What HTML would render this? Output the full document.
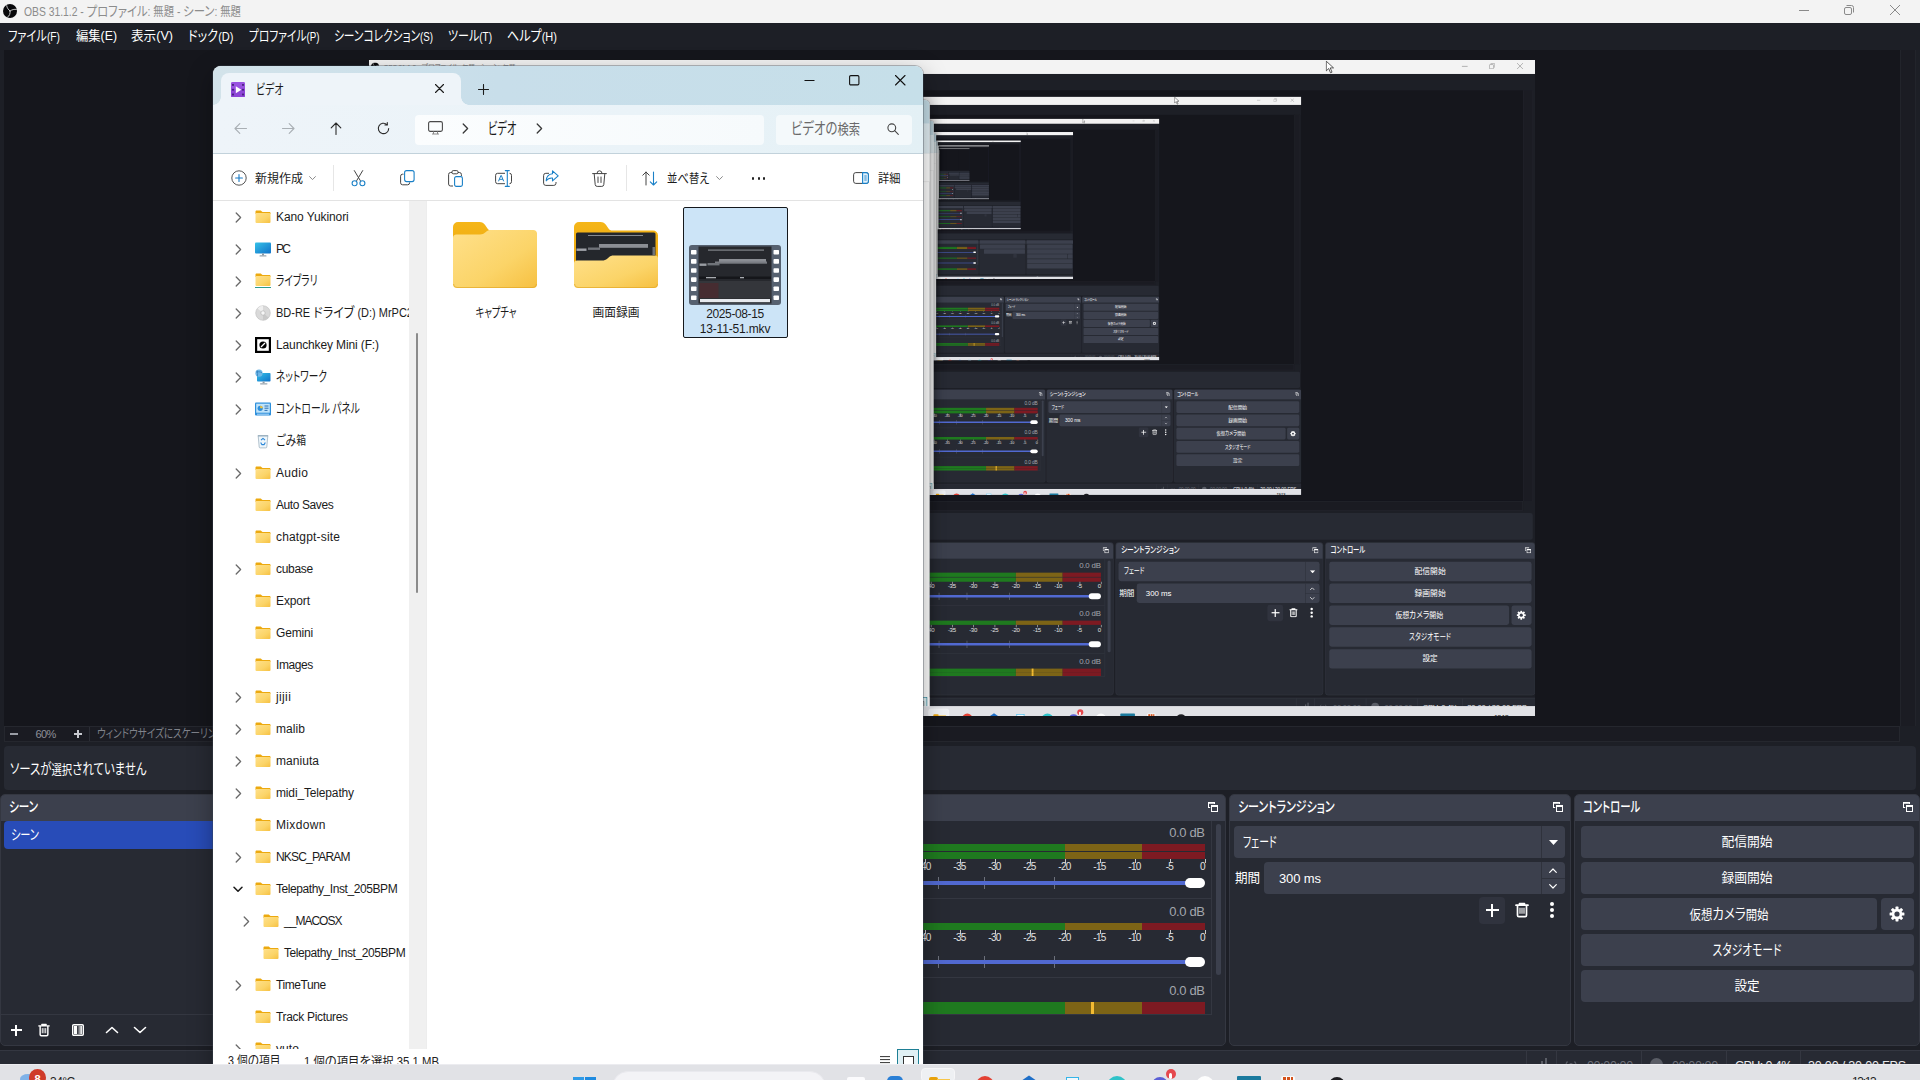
<!DOCTYPE html>
<html lang="ja"><head><meta charset="utf-8"><title>OBS 31.1.2 - プロファイル: 無題 - シーン: 無題</title>
<style>*{box-sizing:border-box;margin:0;padding:0}
html,body{width:1920px;height:1080px;overflow:hidden;background:#1d1f26}
body{font-family:"Liberation Sans","Noto Sans CJK JP",sans-serif;font-size:12px;position:relative}
.scr{position:absolute;left:0;top:0;width:1920px;height:1080px;overflow:hidden;background:#1d1f26;font-feature-settings:"palt"}
.pv{position:absolute;left:369px;top:60px;width:1166px;height:656px;overflow:hidden;background:#15161c}
.pv>.scr{transform:scale(.6074);transform-origin:0 0}
.b{position:absolute}
.t{position:absolute;white-space:nowrap;line-height:20px;font-size:12px;color:#fff}
.dk{position:absolute;background:#272a33;border:1px solid #343741;border-radius:5px;overflow:hidden}
.dt{position:absolute;left:-1px;top:-1px;right:-1px;height:27px;background:#3c404d}
.k{font-size:110%}
.btn{position:absolute;background:#3c404d;border-radius:4px}
.ex{position:absolute;left:213px;top:66px;width:710px;height:1020px;overflow:hidden;border-radius:8px;background:#fff;box-shadow:0 0 0 1px rgba(60,70,80,.35),0 8px 24px rgba(0,0,0,.35)}
.exi{position:absolute;left:-213px;top:-66px;width:1920px;height:1080px}
.ex .t{color:#1b1b1b}
.mx{position:absolute;left:0;top:821px;width:1212px;height:194px;overflow:hidden;border-right:1px solid #343741;border-bottom:1px solid #343741}
.mxi{position:absolute;left:0;top:-821px}
</style></head><body>
<svg width="0" height="0" style="position:absolute"><defs>
<linearGradient id="gf" x1="0" y1="0" x2="1" y2="1"><stop offset="0" stop-color="#ffe08a"/><stop offset=".6" stop-color="#fbd468"/><stop offset="1" stop-color="#f6c041"/></linearGradient>
<linearGradient id="gt" x1="0" y1="0" x2="0" y2="1"><stop offset="0" stop-color="#f5b619"/><stop offset="1" stop-color="#eaa50c"/></linearGradient>
<linearGradient id="gpc" x1="0" y1="0" x2="1" y2="1"><stop offset="0" stop-color="#35c1e8"/><stop offset="1" stop-color="#1172c9"/></linearGradient>
<symbol id="fd" viewBox="0 0 16 16"><path d="M0.5 2.6c0-.6.5-1.1 1.1-1.1h3.7c.4 0 .7.1 1 .4l1.2 1.1h7c.6 0 1 .5 1 1.1v1H.5z" fill="#eca90f"/><rect x=".5" y="4" width="15" height="10" rx="1" fill="url(#gf)"/></symbol>
<symbol id="chv" viewBox="0 0 8 12"><path d="M1.5 1.5L6 6 1.5 10.5" fill="none" stroke="#6a6a6a" stroke-width="1.3" stroke-linecap="round" stroke-linejoin="round"/></symbol>
<symbol id="flt" viewBox="0 0 10 10"><path d="M0 0h7v2H6V1.8H1V5h1.2v1H0zM3 3h7v7H3zM4 5v4h5V5z" fill="#fff"/></symbol>
<symbol id="trash" viewBox="0 0 14 16"><path d="M4.5 1.5h5M1 3.2h12M2.5 3.5v9.8c0 .8.6 1.4 1.4 1.4h6.2c.8 0 1.4-.6 1.4-1.4V3.5" fill="none" stroke="#fff" stroke-width="1.7" stroke-linecap="round"/><path d="M5 5.8v6M7 5.8v6M9 5.8v6" stroke="#fff" stroke-width="1.1"/></symbol>
</defs></svg>
<div class="scr"><div class="b" style="left:0px;top:0px;width:1920px;height:23px;background:#f3f3f3"></div><svg class="b" style="left:3px;top:4px" width="14" height="14" viewBox="0 0 14 14"><circle cx="7" cy="7" r="7" fill="#08080a"/><g fill="none" stroke="#d8d8d8" stroke-width=".9" stroke-linecap="round"><path d="M7 7C5.6 5.6 3.9 4.2 3.7 1.7"/><path d="M7 7c2-1.400 4.400-2 6.300-1.600"/><path d="M7 7c.5 2.500-.5 5-2.500 6.200"/></g></svg><div class="t" style="left:24px;top:2.4px;color:#8c8c8c;transform:scaleX(0.862);transform-origin:0 0">OBS 31.1.2 - <span class="k">プロファイル</span>: 無題 - <span class="k">シーン</span>: 無題</div><svg class="b" style="left:1799px;top:5px" width="10" height="10" viewBox="0 0 10 10"><path d="M0 5.5h10" stroke="#8a8a8a" stroke-width="1"/></svg><svg class="b" style="left:1844px;top:5px" width="10" height="10" viewBox="0 0 10 10"><rect x=".5" y="2.5" width="7" height="7" rx="1.5" fill="none" stroke="#8a8a8a"/><path d="M2.5 .5h5a2 2 0 0 1 2 2v5" fill="none" stroke="#8a8a8a"/></svg><svg class="b" style="left:1890px;top:5px" width="10" height="10" viewBox="0 0 10 10"><path d="M0 0l10 10M10 0L0 10" stroke="#8a8a8a" stroke-width="1"/></svg><div class="t" style="left:8px;top:26.4px;font-size:13px;color:#fff;transform:scaleX(0.786);transform-origin:0 0"><span class="k">ファイル</span>(F)</div><div class="t" style="left:75.5px;top:26.4px;font-size:13px;color:#fff;transform:scaleX(0.946);transform-origin:0 0">編集(E)</div><div class="t" style="left:131px;top:26.4px;font-size:13px;color:#fff;transform:scaleX(0.969);transform-origin:0 0">表示(V)</div><div class="t" style="left:187.5px;top:26.4px;font-size:13px;color:#fff;transform:scaleX(0.851);transform-origin:0 0"><span class="k">ドック</span>(D)</div><div class="t" style="left:248.5px;top:26.4px;font-size:13px;color:#fff;transform:scaleX(0.750);transform-origin:0 0"><span class="k">プロファイル</span>(P)</div><div class="t" style="left:334px;top:26.4px;font-size:13px;color:#fff;transform:scaleX(0.749);transform-origin:0 0"><span class="k">シーンコレクション</span>(S)</div><div class="t" style="left:448px;top:26.4px;font-size:13px;color:#fff;transform:scaleX(0.769);transform-origin:0 0"><span class="k">ツール</span>(T)</div><div class="t" style="left:507px;top:26.4px;font-size:13px;color:#fff;transform:scaleX(0.846);transform-origin:0 0"><span class="k">ヘルプ</span>(H)</div><div class="b" style="left:4px;top:50px;width:1896px;height:676px;background:#15161c"></div><div class="b" style="left:1900px;top:50px;width:16px;height:676px;background:#1b1c23;border-left:1px solid #22242b;border-right:1px solid #22242b"></div><div class="b" style="left:4px;top:726px;width:1896px;height:16px;background:#1a1b22;border:1px solid #25272e"></div><div class="b" style="left:10px;top:733px;width:8px;height:2px;background:#9a9da5"></div><div class="t" style="left:35.5px;top:724px;font-size:11px;color:#8e9199;letter-spacing:-0.61px">60%</div><div class="b" style="left:74px;top:733px;width:8px;height:2px;background:#c8cad0"></div><div class="b" style="left:77px;top:730px;width:2px;height:8px;background:#c8cad0"></div><div class="b" style="left:88.5px;top:727px;width:1px;height:14px;background:#2b2d35"></div><div class="t" style="left:97.4px;top:724.4px;font-size:11px;color:#7f828a;transform:scaleX(0.792);transform-origin:0 0"><span class="k">ウィンドウサイズにスケーリング</span></div><div class="pv"><div class="scr"><div class="b" style="left:0px;top:0px;width:1920px;height:23px;background:#f3f3f3"></div><svg class="b" style="left:3px;top:4px" width="14" height="14" viewBox="0 0 14 14"><circle cx="7" cy="7" r="7" fill="#08080a"/><g fill="none" stroke="#d8d8d8" stroke-width=".9" stroke-linecap="round"><path d="M7 7C5.6 5.6 3.9 4.2 3.7 1.7"/><path d="M7 7c2-1.400 4.400-2 6.300-1.600"/><path d="M7 7c.5 2.500-.5 5-2.500 6.200"/></g></svg><div class="t" style="left:24px;top:2.4px;color:#8c8c8c;transform:scaleX(0.862);transform-origin:0 0">OBS 31.1.2 - <span class="k">プロファイル</span>: 無題 - <span class="k">シーン</span>: 無題</div><svg class="b" style="left:1799px;top:5px" width="10" height="10" viewBox="0 0 10 10"><path d="M0 5.5h10" stroke="#8a8a8a" stroke-width="1"/></svg><svg class="b" style="left:1844px;top:5px" width="10" height="10" viewBox="0 0 10 10"><rect x=".5" y="2.5" width="7" height="7" rx="1.5" fill="none" stroke="#8a8a8a"/><path d="M2.5 .5h5a2 2 0 0 1 2 2v5" fill="none" stroke="#8a8a8a"/></svg><svg class="b" style="left:1890px;top:5px" width="10" height="10" viewBox="0 0 10 10"><path d="M0 0l10 10M10 0L0 10" stroke="#8a8a8a" stroke-width="1"/></svg><div class="t" style="left:8px;top:26.4px;font-size:13px;color:#fff;transform:scaleX(0.786);transform-origin:0 0"><span class="k">ファイル</span>(F)</div><div class="t" style="left:75.5px;top:26.4px;font-size:13px;color:#fff;transform:scaleX(0.946);transform-origin:0 0">編集(E)</div><div class="t" style="left:131px;top:26.4px;font-size:13px;color:#fff;transform:scaleX(0.969);transform-origin:0 0">表示(V)</div><div class="t" style="left:187.5px;top:26.4px;font-size:13px;color:#fff;transform:scaleX(0.851);transform-origin:0 0"><span class="k">ドック</span>(D)</div><div class="t" style="left:248.5px;top:26.4px;font-size:13px;color:#fff;transform:scaleX(0.750);transform-origin:0 0"><span class="k">プロファイル</span>(P)</div><div class="t" style="left:334px;top:26.4px;font-size:13px;color:#fff;transform:scaleX(0.749);transform-origin:0 0"><span class="k">シーンコレクション</span>(S)</div><div class="t" style="left:448px;top:26.4px;font-size:13px;color:#fff;transform:scaleX(0.769);transform-origin:0 0"><span class="k">ツール</span>(T)</div><div class="t" style="left:507px;top:26.4px;font-size:13px;color:#fff;transform:scaleX(0.846);transform-origin:0 0"><span class="k">ヘルプ</span>(H)</div><div class="b" style="left:4px;top:50px;width:1896px;height:676px;background:#15161c"></div><div class="b" style="left:1900px;top:50px;width:16px;height:676px;background:#1b1c23;border-left:1px solid #22242b;border-right:1px solid #22242b"></div><div class="b" style="left:4px;top:726px;width:1896px;height:16px;background:#1a1b22;border:1px solid #25272e"></div><div class="b" style="left:10px;top:733px;width:8px;height:2px;background:#9a9da5"></div><div class="t" style="left:35.5px;top:724px;font-size:11px;color:#8e9199;letter-spacing:-0.61px">60%</div><div class="b" style="left:74px;top:733px;width:8px;height:2px;background:#c8cad0"></div><div class="b" style="left:77px;top:730px;width:2px;height:8px;background:#c8cad0"></div><div class="b" style="left:88.5px;top:727px;width:1px;height:14px;background:#2b2d35"></div><div class="t" style="left:97.4px;top:724.4px;font-size:11px;color:#7f828a;transform:scaleX(0.792);transform-origin:0 0"><span class="k">ウィンドウサイズにスケーリング</span></div><div class="pv"><div class="scr"><div class="b" style="left:0px;top:0px;width:1920px;height:23px;background:#f3f3f3"></div><svg class="b" style="left:3px;top:4px" width="14" height="14" viewBox="0 0 14 14"><circle cx="7" cy="7" r="7" fill="#08080a"/><g fill="none" stroke="#d8d8d8" stroke-width=".9" stroke-linecap="round"><path d="M7 7C5.6 5.6 3.9 4.2 3.7 1.7"/><path d="M7 7c2-1.400 4.400-2 6.300-1.600"/><path d="M7 7c.5 2.500-.5 5-2.500 6.200"/></g></svg><div class="t" style="left:24px;top:2.4px;color:#8c8c8c;transform:scaleX(0.862);transform-origin:0 0">OBS 31.1.2 - <span class="k">プロファイル</span>: 無題 - <span class="k">シーン</span>: 無題</div><svg class="b" style="left:1799px;top:5px" width="10" height="10" viewBox="0 0 10 10"><path d="M0 5.5h10" stroke="#8a8a8a" stroke-width="1"/></svg><svg class="b" style="left:1844px;top:5px" width="10" height="10" viewBox="0 0 10 10"><rect x=".5" y="2.5" width="7" height="7" rx="1.5" fill="none" stroke="#8a8a8a"/><path d="M2.5 .5h5a2 2 0 0 1 2 2v5" fill="none" stroke="#8a8a8a"/></svg><svg class="b" style="left:1890px;top:5px" width="10" height="10" viewBox="0 0 10 10"><path d="M0 0l10 10M10 0L0 10" stroke="#8a8a8a" stroke-width="1"/></svg><div class="t" style="left:8px;top:26.4px;font-size:13px;color:#fff;transform:scaleX(0.786);transform-origin:0 0"><span class="k">ファイル</span>(F)</div><div class="t" style="left:75.5px;top:26.4px;font-size:13px;color:#fff;transform:scaleX(0.946);transform-origin:0 0">編集(E)</div><div class="t" style="left:131px;top:26.4px;font-size:13px;color:#fff;transform:scaleX(0.969);transform-origin:0 0">表示(V)</div><div class="t" style="left:187.5px;top:26.4px;font-size:13px;color:#fff;transform:scaleX(0.851);transform-origin:0 0"><span class="k">ドック</span>(D)</div><div class="t" style="left:248.5px;top:26.4px;font-size:13px;color:#fff;transform:scaleX(0.750);transform-origin:0 0"><span class="k">プロファイル</span>(P)</div><div class="t" style="left:334px;top:26.4px;font-size:13px;color:#fff;transform:scaleX(0.749);transform-origin:0 0"><span class="k">シーンコレクション</span>(S)</div><div class="t" style="left:448px;top:26.4px;font-size:13px;color:#fff;transform:scaleX(0.769);transform-origin:0 0"><span class="k">ツール</span>(T)</div><div class="t" style="left:507px;top:26.4px;font-size:13px;color:#fff;transform:scaleX(0.846);transform-origin:0 0"><span class="k">ヘルプ</span>(H)</div><div class="b" style="left:4px;top:50px;width:1896px;height:676px;background:#15161c"></div><div class="b" style="left:1900px;top:50px;width:16px;height:676px;background:#1b1c23;border-left:1px solid #22242b;border-right:1px solid #22242b"></div><div class="b" style="left:4px;top:726px;width:1896px;height:16px;background:#1a1b22;border:1px solid #25272e"></div><div class="b" style="left:10px;top:733px;width:8px;height:2px;background:#9a9da5"></div><div class="t" style="left:35.5px;top:724px;font-size:11px;color:#8e9199;letter-spacing:-0.61px">60%</div><div class="b" style="left:74px;top:733px;width:8px;height:2px;background:#c8cad0"></div><div class="b" style="left:77px;top:730px;width:2px;height:8px;background:#c8cad0"></div><div class="b" style="left:88.5px;top:727px;width:1px;height:14px;background:#2b2d35"></div><div class="t" style="left:97.4px;top:724.4px;font-size:11px;color:#7f828a;transform:scaleX(0.792);transform-origin:0 0"><span class="k">ウィンドウサイズにスケーリング</span></div><div class="pv"><div class="scr"><div class="b" style="left:0px;top:0px;width:1920px;height:23px;background:#f3f3f3"></div><svg class="b" style="left:3px;top:4px" width="14" height="14" viewBox="0 0 14 14"><circle cx="7" cy="7" r="7" fill="#08080a"/><g fill="none" stroke="#d8d8d8" stroke-width=".9" stroke-linecap="round"><path d="M7 7C5.6 5.6 3.9 4.2 3.7 1.7"/><path d="M7 7c2-1.400 4.400-2 6.300-1.600"/><path d="M7 7c.5 2.500-.5 5-2.500 6.200"/></g></svg><div class="t" style="left:24px;top:2.4px;color:#8c8c8c;transform:scaleX(0.862);transform-origin:0 0">OBS 31.1.2 - <span class="k">プロファイル</span>: 無題 - <span class="k">シーン</span>: 無題</div><svg class="b" style="left:1799px;top:5px" width="10" height="10" viewBox="0 0 10 10"><path d="M0 5.5h10" stroke="#8a8a8a" stroke-width="1"/></svg><svg class="b" style="left:1844px;top:5px" width="10" height="10" viewBox="0 0 10 10"><rect x=".5" y="2.5" width="7" height="7" rx="1.5" fill="none" stroke="#8a8a8a"/><path d="M2.5 .5h5a2 2 0 0 1 2 2v5" fill="none" stroke="#8a8a8a"/></svg><svg class="b" style="left:1890px;top:5px" width="10" height="10" viewBox="0 0 10 10"><path d="M0 0l10 10M10 0L0 10" stroke="#8a8a8a" stroke-width="1"/></svg><div class="t" style="left:8px;top:26.4px;font-size:13px;color:#fff;transform:scaleX(0.786);transform-origin:0 0"><span class="k">ファイル</span>(F)</div><div class="t" style="left:75.5px;top:26.4px;font-size:13px;color:#fff;transform:scaleX(0.946);transform-origin:0 0">編集(E)</div><div class="t" style="left:131px;top:26.4px;font-size:13px;color:#fff;transform:scaleX(0.969);transform-origin:0 0">表示(V)</div><div class="t" style="left:187.5px;top:26.4px;font-size:13px;color:#fff;transform:scaleX(0.851);transform-origin:0 0"><span class="k">ドック</span>(D)</div><div class="t" style="left:248.5px;top:26.4px;font-size:13px;color:#fff;transform:scaleX(0.750);transform-origin:0 0"><span class="k">プロファイル</span>(P)</div><div class="t" style="left:334px;top:26.4px;font-size:13px;color:#fff;transform:scaleX(0.749);transform-origin:0 0"><span class="k">シーンコレクション</span>(S)</div><div class="t" style="left:448px;top:26.4px;font-size:13px;color:#fff;transform:scaleX(0.769);transform-origin:0 0"><span class="k">ツール</span>(T)</div><div class="t" style="left:507px;top:26.4px;font-size:13px;color:#fff;transform:scaleX(0.846);transform-origin:0 0"><span class="k">ヘルプ</span>(H)</div><div class="b" style="left:4px;top:50px;width:1896px;height:676px;background:#15161c"></div><div class="b" style="left:1900px;top:50px;width:16px;height:676px;background:#1b1c23;border-left:1px solid #22242b;border-right:1px solid #22242b"></div><div class="b" style="left:4px;top:726px;width:1896px;height:16px;background:#1a1b22;border:1px solid #25272e"></div><div class="b" style="left:10px;top:733px;width:8px;height:2px;background:#9a9da5"></div><div class="t" style="left:35.5px;top:724px;font-size:11px;color:#8e9199;letter-spacing:-0.61px">60%</div><div class="b" style="left:74px;top:733px;width:8px;height:2px;background:#c8cad0"></div><div class="b" style="left:77px;top:730px;width:2px;height:8px;background:#c8cad0"></div><div class="b" style="left:88.5px;top:727px;width:1px;height:14px;background:#2b2d35"></div><div class="t" style="left:97.4px;top:724.4px;font-size:11px;color:#7f828a;transform:scaleX(0.792);transform-origin:0 0"><span class="k">ウィンドウサイズにスケーリング</span></div><div class="pv"><div class="scr"><div class="b" style="left:0px;top:0px;width:1920px;height:23px;background:#f3f3f3"></div><div class="b" style="left:4px;top:50px;width:1896px;height:676px;background:#15161c"></div><div class="b" style="left:1900px;top:50px;width:16px;height:676px;background:#1b1c23;border-left:1px solid #22242b;border-right:1px solid #22242b"></div><div class="b" style="left:4px;top:726px;width:1896px;height:16px;background:#1a1b22;border:1px solid #25272e"></div><div class="pv"><div class="scr"><div class="b" style="left:0px;top:0px;width:1920px;height:23px;background:#f3f3f3"></div><div class="b" style="left:4px;top:50px;width:1896px;height:676px;background:#15161c"></div><div class="b" style="left:1900px;top:50px;width:16px;height:676px;background:#1b1c23;border-left:1px solid #22242b;border-right:1px solid #22242b"></div><div class="b" style="left:4px;top:726px;width:1896px;height:16px;background:#1a1b22;border:1px solid #25272e"></div><div class="pv"><div class="scr"><div class="b" style="left:0px;top:0px;width:1920px;height:23px;background:#f3f3f3"></div><div class="b" style="left:4px;top:50px;width:1896px;height:676px;background:#15161c"></div><div class="b" style="left:1900px;top:50px;width:16px;height:676px;background:#1b1c23;border-left:1px solid #22242b;border-right:1px solid #22242b"></div><div class="b" style="left:4px;top:726px;width:1896px;height:16px;background:#1a1b22;border:1px solid #25272e"></div><div class="pv"><div class="scr"><div class="b" style="left:0px;top:0px;width:1920px;height:23px;background:#f3f3f3"></div><div class="b" style="left:4px;top:50px;width:1896px;height:676px;background:#15161c"></div><div class="b" style="left:1900px;top:50px;width:16px;height:676px;background:#1b1c23;border-left:1px solid #22242b;border-right:1px solid #22242b"></div><div class="b" style="left:4px;top:726px;width:1896px;height:16px;background:#1a1b22;border:1px solid #25272e"></div><div class="pv"></div><div class="b" style="left:4px;top:746px;width:1912px;height:44px;background:#272a33;border-radius:4px"></div><div class="dk" style="left:0;top:794px;width:300px;height:252px"><div class="dt"></div></div><div class="b" style="left:4px;top:821px;width:292px;height:28px;background:#284cb8;border-radius:4px"></div><div class="dk" style="left:304px;top:794px;width:300px;height:252px"><div class="dt"></div></div><div class="dk" style="left:608px;top:794px;width:618px;height:252px"><div class="dt"></div></div><div class="mx"><div class="mxi"><div class="b" style="left:700px;top:844px;width:365px;height:7px;background:#1f7a1f"></div><div class="b" style="left:1065px;top:844px;width:77px;height:7px;background:#7d6416"></div><div class="b" style="left:1142px;top:844px;width:63px;height:7px;background:#7d1a22"></div><div class="b" style="left:700px;top:852px;width:365px;height:7px;background:#1f7a1f"></div><div class="b" style="left:1065px;top:852px;width:77px;height:7px;background:#7d6416"></div><div class="b" style="left:1142px;top:852px;width:63px;height:7px;background:#7d1a22"></div><div class="b" style="left:700px;top:881px;width:495px;height:4px;background:#5169d1;border-radius:2px"></div><div class="b" style="left:1185px;top:878px;width:20px;height:10px;background:#fff;border-radius:5px"></div><div class="b" style="left:600px;top:898px;width:613px;height:1px;background:#343741"></div><div class="b" style="left:700px;top:923px;width:365px;height:7px;background:#1f7a1f"></div><div class="b" style="left:1065px;top:923px;width:77px;height:7px;background:#7d6416"></div><div class="b" style="left:1142px;top:923px;width:63px;height:7px;background:#7d1a22"></div><div class="b" style="left:700px;top:960px;width:495px;height:4px;background:#5169d1;border-radius:2px"></div><div class="b" style="left:1185px;top:957px;width:20px;height:10px;background:#fff;border-radius:5px"></div><div class="b" style="left:600px;top:977px;width:613px;height:1px;background:#343741"></div><div class="b" style="left:700px;top:1002px;width:365px;height:6.5px;background:#1f7a1f"></div><div class="b" style="left:1065px;top:1002px;width:77px;height:6.5px;background:#7d6416"></div><div class="b" style="left:1142px;top:1002px;width:63px;height:6.5px;background:#7d1a22"></div><div class="b" style="left:700px;top:1009px;width:365px;height:7px;background:#1f7a1f"></div><div class="b" style="left:1065px;top:1009px;width:77px;height:7px;background:#7d6416"></div><div class="b" style="left:1142px;top:1009px;width:63px;height:7px;background:#7d1a22"></div></div></div><div class="b" style="left:1215.5px;top:824px;width:5.5px;height:151px;background:#3c404d;border-radius:3px"></div><div class="dk" style="left:1229px;top:794px;width:342px;height:252px"><div class="dt"></div></div><div class="btn" style="left:1234px;top:826px;width:331px;height:32px"></div><div class="btn" style="left:1264px;top:862px;width:301px;height:32px"></div><div class="btn" style="left:1479px;top:896.5px;width:26px;height:27px;background:#30333e"></div><div class="dk" style="left:1574px;top:794px;width:346px;height:252px"><div class="dt"></div></div><div class="btn" style="left:1580.5px;top:826px;width:333px;height:32px"></div><div class="btn" style="left:1580.5px;top:862px;width:333px;height:32px"></div><div class="btn" style="left:1580.5px;top:898px;width:296.5px;height:32px"></div><div class="btn" style="left:1580.5px;top:934px;width:333px;height:32px"></div><div class="btn" style="left:1580.5px;top:970px;width:333px;height:32px"></div><div class="btn" style="left:1881px;top:898px;width:32.5px;height:32px"></div><div class="b" style="left:0px;top:1050px;width:1920px;height:30px;background:#272a33;border-top:1px solid #343741"></div><div class="b" style="left:1650px;top:1058px;width:13px;height:13px;background:#5a5d66;border-radius:7px"></div><div class="ex"><div class="exi"><div class="b" style="left:213px;top:66px;width:710px;height:38.5px;background:linear-gradient(90deg,#d3e3ea,#c8deea 40%,#c6dfe9)"></div><div class="b" style="left:221px;top:73px;width:240px;height:31.5px;background:#eef4f9;border-radius:8px 8px 0 0"></div><div class="b" style="left:213px;top:104.5px;width:710px;height:48.5px;background:linear-gradient(90deg,#eef4f9,#eaf3f8 60%,#e3f0f5)"></div><div class="b" style="left:213px;top:153px;width:710px;height:1px;background:#c2d2db"></div><div class="b" style="left:415px;top:115px;width:349px;height:30px;background:linear-gradient(90deg,#fbfdfe,#f6fafc);border-radius:4px"></div><div class="b" style="left:776px;top:115px;width:136px;height:30px;background:#f4f9fb;border-radius:4px"></div><div class="b" style="left:213px;top:154px;width:710px;height:46px;background:#fff"></div><div class="b" style="left:213px;top:200px;width:710px;height:1px;background:#e3e3e3"></div><div class="b" style="left:409px;top:201px;width:16.5px;height:848px;background:#f0f0f0"></div><div class="b" style="left:426px;top:201px;width:1px;height:848px;background:#ededed"></div><div class="b" style="left:416px;top:333px;width:2px;height:260px;background:#8b8b8b;border-radius:1px"></div><div class="b" style="left:213px;top:201px;width:196px;height:848px;overflow:hidden"><div class="b" style="left:-213px;top:-201px"></div></div><svg class="b" style="left:453px;top:222px" width="84" height="66" viewBox="0 0 84 66"><path d="M0 5a5 5 0 0 1 5-5h21.5c2.6 0 4.2 1 5.6 3l2.4 3.400c1 1.4 2 2.1 4 2.100H79a5 5 0 0 1 5 5V46H0z" fill="url(#gt)"/><path d="M0 16a3.5 3.5 0 0 1 3.5-3.500h23.500c2.5 0 3.8-.7 5.2-1.900l1.5-1.300c1.2-1 2.5-1.3 4-1.300H80a4 4 0 0 1 4 4V62a4 4 0 0 1-4 4H4a4 4 0 0 1-4-4z" fill="url(#gf)"/><path d="M.5 62a3.5 3.5 0 0 0 3.5 3.500h76a3.5 3.5 0 0 0 3.5-3.5" fill="none" stroke="#e3a826" stroke-width="1" opacity=".7"/></svg><svg class="b" style="left:574px;top:222px" width="84" height="66" viewBox="0 0 84 66"><path d="M0 5a5 5 0 0 1 5-5h21.5c2.6 0 4.2 1 5.6 3l2.4 3.400c1 1.4 2 2.1 4 2.100H79a5 5 0 0 1 5 5V46H0z" fill="url(#gt)"/><rect x="2" y="10.5" width="79.5" height="30" rx="1.5" fill="#24272c"/><rect x="14" y="13" width="55" height="1" fill="#85898f"/><rect x="25" y="22" width="49" height="3.8" fill="#8b8e94"/><rect x="2.5" y="26.5" width="10" height="2.4" fill="#a0a3a9"/><rect x="14" y="25.5" width="12" height="2.4" fill="#6f7379"/><rect x="78.5" y="25" width="2.5" height="8" fill="#6f7379"/><path d="M0 41.500a3 3 0 0 1 3-3h25c2.5 0 3.8-.6 5.2-1.800l2-1.700c1.2-1 2.5-1.5 4-1.500H81a3 3 0 0 1 3 3V62a4 4 0 0 1-4 4H4a4 4 0 0 1-4-4z" fill="url(#gf)"/><path d="M.5 62a3.5 3.5 0 0 0 3.5 3.500h76a3.5 3.5 0 0 0 3.5-3.5" fill="none" stroke="#e3a826" stroke-width="1" opacity=".7"/></svg><div class="b" style="left:683px;top:207px;width:105px;height:131px;background:#cce4f7;border:1px solid #15181c;border-radius:2px"></div><svg class="b" style="left:688.5px;top:244.5px" width="92" height="60" viewBox="0 0 92 60"><rect width="92" height="60" rx="3" fill="#566170"/><rect x="9.5" y="1.5" width="73" height="57" fill="#26282d"/><rect x="2" y="5" width="5.5" height="4.6" rx=".8" fill="#fff"/><rect x="84.5" y="5" width="5.5" height="4.6" rx=".8" fill="#fff"/><rect x="2" y="14.1" width="5.5" height="4.6" rx=".8" fill="#fff"/><rect x="84.5" y="14.1" width="5.5" height="4.6" rx=".8" fill="#fff"/><rect x="2" y="23.2" width="5.5" height="4.6" rx=".8" fill="#fff"/><rect x="84.5" y="23.2" width="5.5" height="4.6" rx=".8" fill="#fff"/><rect x="2" y="32.3" width="5.5" height="4.6" rx=".8" fill="#fff"/><rect x="84.5" y="32.3" width="5.5" height="4.6" rx=".8" fill="#fff"/><rect x="2" y="41.4" width="5.5" height="4.6" rx=".8" fill="#fff"/><rect x="84.5" y="41.4" width="5.5" height="4.6" rx=".8" fill="#fff"/><rect x="2" y="50.5" width="5.5" height="4.6" rx=".8" fill="#fff"/><rect x="84.5" y="50.5" width="5.5" height="4.6" rx=".8" fill="#fff"/><rect x="19" y="4.5" width="56" height="1.2" fill="#9a9da3" opacity=".8"/><rect x="30" y="14" width="47" height="3.8" fill="#8b8e94"/><rect x="26" y="16.5" width="52" height="2.2" fill="#7a7d83"/><rect x="10.5" y="18.5" width="7" height="2.4" fill="#9a9da3"/><rect x="18.5" y="18" width="12" height="2.4" fill="#6f7379"/><rect x="10" y="31.5" width="72" height="2.5" fill="#15161a"/><rect x="17" y="32" width="10" height="1.3" fill="#a8abb0"/><rect x="51" y="32" width="4" height="1.3" fill="#a8abb0"/><rect x="10" y="36" width="72" height="17.5" fill="#34363b"/><rect x="10.5" y="38" width="19" height="15" fill="#4a2a30" opacity=".85"/><rect x="11" y="54" width="70" height="3.2" fill="#e6e9ee"/></svg><div class="b" style="left:213px;top:1049px;width:710px;height:31px;background:#fff"></div><div class="b" style="left:897px;top:1049px;width:22px;height:22px;background:#e0f0f4;border:1px solid #1e7f95"></div></div></div><div class="b" style="left:0px;top:1064px;width:1920px;height:16px;background:#e1e2e6;border-top:1px solid #ececf0"></div><div class="b" style="left:29px;top:1068.5px;width:17px;height:17px;background:#cf3a2a;border-radius:9px"></div><div class="b" style="left:612px;top:1071px;width:214px;height:32px;background:#f3f3f6;border-radius:16px;border:1px solid #e9e9ee"></div><div class="b" style="left:847px;top:1077px;width:18px;height:4px;background:#fbfbfd;border-radius:2px 2px 0 0"></div><div class="b" style="left:887px;top:1076px;width:16px;height:5px;background:#2a7fd6;border-radius:5px 5px 0 0"></div><div class="b" style="left:921px;top:1068px;width:34px;height:14px;background:#eef0f3;border-radius:4px;border:1px solid #f6f6f8"></div><div class="b" style="left:937px;top:1078.5px;width:13px;height:3px;background:#f7c64a"></div><div class="b" style="left:976px;top:1076px;width:18px;height:18px;background:#e34133;border-radius:9px"></div><div class="b" style="left:1066px;top:1077px;width:13px;height:4px;background:#f3f8fc;border:1.500px solid #35b5e8;border-bottom:none"></div><div class="b" style="left:1107px;top:1076px;width:20px;height:20px;background:#2fc3c9;border-radius:10px"></div><div class="b" style="left:1152px;top:1076.5px;width:16px;height:16px;background:#5a5fd6;border-radius:8px"></div><div class="b" style="left:1196px;top:1076px;width:18px;height:18px;background:#fdfdfd;border-radius:9px"></div><div class="b" style="left:1237px;top:1076px;width:24px;height:6px;background:#1b7a9e;border-radius:1px"></div><div class="b" style="left:1281px;top:1076px;width:14px;height:5px;background:#fafafa;border-radius:2px"></div><div class="b" style="left:1329px;top:1077px;width:16px;height:16px;background:#1e1e22;border-radius:8px"></div><svg class="b" style="left:1575px;top:0.5px" width="14" height="22" viewBox="0 0 14 22"><path d="M1 1v16l4-4 3 7 2.5-1-3-7h5.5z" fill="#fff" stroke="#222" stroke-width="1.2" stroke-linejoin="round"/></svg></div></div><div class="b" style="left:4px;top:746px;width:1912px;height:44px;background:#272a33;border-radius:4px"></div><div class="dk" style="left:0;top:794px;width:300px;height:252px"><div class="dt"></div></div><div class="b" style="left:4px;top:821px;width:292px;height:28px;background:#284cb8;border-radius:4px"></div><div class="dk" style="left:304px;top:794px;width:300px;height:252px"><div class="dt"></div></div><div class="dk" style="left:608px;top:794px;width:618px;height:252px"><div class="dt"></div></div><div class="mx"><div class="mxi"><div class="b" style="left:700px;top:844px;width:365px;height:7px;background:#1f7a1f"></div><div class="b" style="left:1065px;top:844px;width:77px;height:7px;background:#7d6416"></div><div class="b" style="left:1142px;top:844px;width:63px;height:7px;background:#7d1a22"></div><div class="b" style="left:700px;top:852px;width:365px;height:7px;background:#1f7a1f"></div><div class="b" style="left:1065px;top:852px;width:77px;height:7px;background:#7d6416"></div><div class="b" style="left:1142px;top:852px;width:63px;height:7px;background:#7d1a22"></div><div class="b" style="left:700px;top:881px;width:495px;height:4px;background:#5169d1;border-radius:2px"></div><div class="b" style="left:1185px;top:878px;width:20px;height:10px;background:#fff;border-radius:5px"></div><div class="b" style="left:600px;top:898px;width:613px;height:1px;background:#343741"></div><div class="b" style="left:700px;top:923px;width:365px;height:7px;background:#1f7a1f"></div><div class="b" style="left:1065px;top:923px;width:77px;height:7px;background:#7d6416"></div><div class="b" style="left:1142px;top:923px;width:63px;height:7px;background:#7d1a22"></div><div class="b" style="left:700px;top:960px;width:495px;height:4px;background:#5169d1;border-radius:2px"></div><div class="b" style="left:1185px;top:957px;width:20px;height:10px;background:#fff;border-radius:5px"></div><div class="b" style="left:600px;top:977px;width:613px;height:1px;background:#343741"></div><div class="b" style="left:700px;top:1002px;width:365px;height:6.5px;background:#1f7a1f"></div><div class="b" style="left:1065px;top:1002px;width:77px;height:6.5px;background:#7d6416"></div><div class="b" style="left:1142px;top:1002px;width:63px;height:6.5px;background:#7d1a22"></div><div class="b" style="left:700px;top:1009px;width:365px;height:7px;background:#1f7a1f"></div><div class="b" style="left:1065px;top:1009px;width:77px;height:7px;background:#7d6416"></div><div class="b" style="left:1142px;top:1009px;width:63px;height:7px;background:#7d1a22"></div></div></div><div class="b" style="left:1215.5px;top:824px;width:5.5px;height:151px;background:#3c404d;border-radius:3px"></div><div class="dk" style="left:1229px;top:794px;width:342px;height:252px"><div class="dt"></div></div><div class="btn" style="left:1234px;top:826px;width:331px;height:32px"></div><div class="btn" style="left:1264px;top:862px;width:301px;height:32px"></div><div class="btn" style="left:1479px;top:896.5px;width:26px;height:27px;background:#30333e"></div><div class="dk" style="left:1574px;top:794px;width:346px;height:252px"><div class="dt"></div></div><div class="btn" style="left:1580.5px;top:826px;width:333px;height:32px"></div><div class="btn" style="left:1580.5px;top:862px;width:333px;height:32px"></div><div class="btn" style="left:1580.5px;top:898px;width:296.5px;height:32px"></div><div class="btn" style="left:1580.5px;top:934px;width:333px;height:32px"></div><div class="btn" style="left:1580.5px;top:970px;width:333px;height:32px"></div><div class="btn" style="left:1881px;top:898px;width:32.5px;height:32px"></div><div class="b" style="left:0px;top:1050px;width:1920px;height:30px;background:#272a33;border-top:1px solid #343741"></div><div class="b" style="left:1650px;top:1058px;width:13px;height:13px;background:#5a5d66;border-radius:7px"></div><div class="ex"><div class="exi"><div class="b" style="left:213px;top:66px;width:710px;height:38.5px;background:linear-gradient(90deg,#d3e3ea,#c8deea 40%,#c6dfe9)"></div><div class="b" style="left:221px;top:73px;width:240px;height:31.5px;background:#eef4f9;border-radius:8px 8px 0 0"></div><div class="b" style="left:213px;top:104.5px;width:710px;height:48.5px;background:linear-gradient(90deg,#eef4f9,#eaf3f8 60%,#e3f0f5)"></div><div class="b" style="left:213px;top:153px;width:710px;height:1px;background:#c2d2db"></div><div class="b" style="left:415px;top:115px;width:349px;height:30px;background:linear-gradient(90deg,#fbfdfe,#f6fafc);border-radius:4px"></div><div class="b" style="left:776px;top:115px;width:136px;height:30px;background:#f4f9fb;border-radius:4px"></div><div class="b" style="left:213px;top:154px;width:710px;height:46px;background:#fff"></div><div class="b" style="left:213px;top:200px;width:710px;height:1px;background:#e3e3e3"></div><div class="b" style="left:409px;top:201px;width:16.5px;height:848px;background:#f0f0f0"></div><div class="b" style="left:426px;top:201px;width:1px;height:848px;background:#ededed"></div><div class="b" style="left:416px;top:333px;width:2px;height:260px;background:#8b8b8b;border-radius:1px"></div><div class="b" style="left:213px;top:201px;width:196px;height:848px;overflow:hidden"><div class="b" style="left:-213px;top:-201px"></div></div><svg class="b" style="left:453px;top:222px" width="84" height="66" viewBox="0 0 84 66"><path d="M0 5a5 5 0 0 1 5-5h21.5c2.6 0 4.2 1 5.6 3l2.4 3.400c1 1.4 2 2.1 4 2.100H79a5 5 0 0 1 5 5V46H0z" fill="url(#gt)"/><path d="M0 16a3.5 3.5 0 0 1 3.5-3.500h23.500c2.5 0 3.8-.7 5.2-1.900l1.5-1.300c1.2-1 2.5-1.3 4-1.300H80a4 4 0 0 1 4 4V62a4 4 0 0 1-4 4H4a4 4 0 0 1-4-4z" fill="url(#gf)"/><path d="M.5 62a3.5 3.5 0 0 0 3.5 3.500h76a3.5 3.5 0 0 0 3.5-3.5" fill="none" stroke="#e3a826" stroke-width="1" opacity=".7"/></svg><svg class="b" style="left:574px;top:222px" width="84" height="66" viewBox="0 0 84 66"><path d="M0 5a5 5 0 0 1 5-5h21.5c2.6 0 4.2 1 5.6 3l2.4 3.400c1 1.4 2 2.1 4 2.100H79a5 5 0 0 1 5 5V46H0z" fill="url(#gt)"/><rect x="2" y="10.5" width="79.5" height="30" rx="1.5" fill="#24272c"/><rect x="14" y="13" width="55" height="1" fill="#85898f"/><rect x="25" y="22" width="49" height="3.8" fill="#8b8e94"/><rect x="2.5" y="26.5" width="10" height="2.4" fill="#a0a3a9"/><rect x="14" y="25.5" width="12" height="2.4" fill="#6f7379"/><rect x="78.5" y="25" width="2.5" height="8" fill="#6f7379"/><path d="M0 41.500a3 3 0 0 1 3-3h25c2.5 0 3.8-.6 5.2-1.800l2-1.700c1.2-1 2.5-1.5 4-1.500H81a3 3 0 0 1 3 3V62a4 4 0 0 1-4 4H4a4 4 0 0 1-4-4z" fill="url(#gf)"/><path d="M.5 62a3.5 3.5 0 0 0 3.5 3.500h76a3.5 3.5 0 0 0 3.5-3.5" fill="none" stroke="#e3a826" stroke-width="1" opacity=".7"/></svg><div class="b" style="left:683px;top:207px;width:105px;height:131px;background:#cce4f7;border:1px solid #15181c;border-radius:2px"></div><svg class="b" style="left:688.5px;top:244.5px" width="92" height="60" viewBox="0 0 92 60"><rect width="92" height="60" rx="3" fill="#566170"/><rect x="9.5" y="1.5" width="73" height="57" fill="#26282d"/><rect x="2" y="5" width="5.5" height="4.6" rx=".8" fill="#fff"/><rect x="84.5" y="5" width="5.5" height="4.6" rx=".8" fill="#fff"/><rect x="2" y="14.1" width="5.5" height="4.6" rx=".8" fill="#fff"/><rect x="84.5" y="14.1" width="5.5" height="4.6" rx=".8" fill="#fff"/><rect x="2" y="23.2" width="5.5" height="4.6" rx=".8" fill="#fff"/><rect x="84.5" y="23.2" width="5.5" height="4.6" rx=".8" fill="#fff"/><rect x="2" y="32.3" width="5.5" height="4.6" rx=".8" fill="#fff"/><rect x="84.5" y="32.3" width="5.5" height="4.6" rx=".8" fill="#fff"/><rect x="2" y="41.4" width="5.5" height="4.6" rx=".8" fill="#fff"/><rect x="84.5" y="41.4" width="5.5" height="4.6" rx=".8" fill="#fff"/><rect x="2" y="50.5" width="5.5" height="4.6" rx=".8" fill="#fff"/><rect x="84.5" y="50.5" width="5.5" height="4.6" rx=".8" fill="#fff"/><rect x="19" y="4.5" width="56" height="1.2" fill="#9a9da3" opacity=".8"/><rect x="30" y="14" width="47" height="3.8" fill="#8b8e94"/><rect x="26" y="16.5" width="52" height="2.2" fill="#7a7d83"/><rect x="10.5" y="18.5" width="7" height="2.4" fill="#9a9da3"/><rect x="18.5" y="18" width="12" height="2.4" fill="#6f7379"/><rect x="10" y="31.5" width="72" height="2.5" fill="#15161a"/><rect x="17" y="32" width="10" height="1.3" fill="#a8abb0"/><rect x="51" y="32" width="4" height="1.3" fill="#a8abb0"/><rect x="10" y="36" width="72" height="17.5" fill="#34363b"/><rect x="10.5" y="38" width="19" height="15" fill="#4a2a30" opacity=".85"/><rect x="11" y="54" width="70" height="3.2" fill="#e6e9ee"/></svg><div class="b" style="left:213px;top:1049px;width:710px;height:31px;background:#fff"></div><div class="b" style="left:897px;top:1049px;width:22px;height:22px;background:#e0f0f4;border:1px solid #1e7f95"></div></div></div><div class="b" style="left:0px;top:1064px;width:1920px;height:16px;background:#e1e2e6;border-top:1px solid #ececf0"></div><div class="b" style="left:29px;top:1068.5px;width:17px;height:17px;background:#cf3a2a;border-radius:9px"></div><div class="b" style="left:612px;top:1071px;width:214px;height:32px;background:#f3f3f6;border-radius:16px;border:1px solid #e9e9ee"></div><div class="b" style="left:847px;top:1077px;width:18px;height:4px;background:#fbfbfd;border-radius:2px 2px 0 0"></div><div class="b" style="left:887px;top:1076px;width:16px;height:5px;background:#2a7fd6;border-radius:5px 5px 0 0"></div><div class="b" style="left:921px;top:1068px;width:34px;height:14px;background:#eef0f3;border-radius:4px;border:1px solid #f6f6f8"></div><div class="b" style="left:937px;top:1078.5px;width:13px;height:3px;background:#f7c64a"></div><div class="b" style="left:976px;top:1076px;width:18px;height:18px;background:#e34133;border-radius:9px"></div><div class="b" style="left:1066px;top:1077px;width:13px;height:4px;background:#f3f8fc;border:1.500px solid #35b5e8;border-bottom:none"></div><div class="b" style="left:1107px;top:1076px;width:20px;height:20px;background:#2fc3c9;border-radius:10px"></div><div class="b" style="left:1152px;top:1076.5px;width:16px;height:16px;background:#5a5fd6;border-radius:8px"></div><div class="b" style="left:1196px;top:1076px;width:18px;height:18px;background:#fdfdfd;border-radius:9px"></div><div class="b" style="left:1237px;top:1076px;width:24px;height:6px;background:#1b7a9e;border-radius:1px"></div><div class="b" style="left:1281px;top:1076px;width:14px;height:5px;background:#fafafa;border-radius:2px"></div><div class="b" style="left:1329px;top:1077px;width:16px;height:16px;background:#1e1e22;border-radius:8px"></div><svg class="b" style="left:1575px;top:0.5px" width="14" height="22" viewBox="0 0 14 22"><path d="M1 1v16l4-4 3 7 2.5-1-3-7h5.5z" fill="#fff" stroke="#222" stroke-width="1.2" stroke-linejoin="round"/></svg></div></div><div class="b" style="left:4px;top:746px;width:1912px;height:44px;background:#272a33;border-radius:4px"></div><div class="dk" style="left:0;top:794px;width:300px;height:252px"><div class="dt"></div></div><div class="b" style="left:4px;top:821px;width:292px;height:28px;background:#284cb8;border-radius:4px"></div><div class="dk" style="left:304px;top:794px;width:300px;height:252px"><div class="dt"></div></div><div class="dk" style="left:608px;top:794px;width:618px;height:252px"><div class="dt"></div></div><div class="mx"><div class="mxi"><div class="b" style="left:700px;top:844px;width:365px;height:7px;background:#1f7a1f"></div><div class="b" style="left:1065px;top:844px;width:77px;height:7px;background:#7d6416"></div><div class="b" style="left:1142px;top:844px;width:63px;height:7px;background:#7d1a22"></div><div class="b" style="left:700px;top:852px;width:365px;height:7px;background:#1f7a1f"></div><div class="b" style="left:1065px;top:852px;width:77px;height:7px;background:#7d6416"></div><div class="b" style="left:1142px;top:852px;width:63px;height:7px;background:#7d1a22"></div><div class="b" style="left:700px;top:881px;width:495px;height:4px;background:#5169d1;border-radius:2px"></div><div class="b" style="left:1185px;top:878px;width:20px;height:10px;background:#fff;border-radius:5px"></div><div class="b" style="left:600px;top:898px;width:613px;height:1px;background:#343741"></div><div class="b" style="left:700px;top:923px;width:365px;height:7px;background:#1f7a1f"></div><div class="b" style="left:1065px;top:923px;width:77px;height:7px;background:#7d6416"></div><div class="b" style="left:1142px;top:923px;width:63px;height:7px;background:#7d1a22"></div><div class="b" style="left:700px;top:960px;width:495px;height:4px;background:#5169d1;border-radius:2px"></div><div class="b" style="left:1185px;top:957px;width:20px;height:10px;background:#fff;border-radius:5px"></div><div class="b" style="left:600px;top:977px;width:613px;height:1px;background:#343741"></div><div class="b" style="left:700px;top:1002px;width:365px;height:6.5px;background:#1f7a1f"></div><div class="b" style="left:1065px;top:1002px;width:77px;height:6.5px;background:#7d6416"></div><div class="b" style="left:1142px;top:1002px;width:63px;height:6.5px;background:#7d1a22"></div><div class="b" style="left:700px;top:1009px;width:365px;height:7px;background:#1f7a1f"></div><div class="b" style="left:1065px;top:1009px;width:77px;height:7px;background:#7d6416"></div><div class="b" style="left:1142px;top:1009px;width:63px;height:7px;background:#7d1a22"></div></div></div><div class="b" style="left:1215.5px;top:824px;width:5.5px;height:151px;background:#3c404d;border-radius:3px"></div><div class="dk" style="left:1229px;top:794px;width:342px;height:252px"><div class="dt"></div></div><div class="btn" style="left:1234px;top:826px;width:331px;height:32px"></div><div class="btn" style="left:1264px;top:862px;width:301px;height:32px"></div><div class="btn" style="left:1479px;top:896.5px;width:26px;height:27px;background:#30333e"></div><div class="dk" style="left:1574px;top:794px;width:346px;height:252px"><div class="dt"></div></div><div class="btn" style="left:1580.5px;top:826px;width:333px;height:32px"></div><div class="btn" style="left:1580.5px;top:862px;width:333px;height:32px"></div><div class="btn" style="left:1580.5px;top:898px;width:296.5px;height:32px"></div><div class="btn" style="left:1580.5px;top:934px;width:333px;height:32px"></div><div class="btn" style="left:1580.5px;top:970px;width:333px;height:32px"></div><div class="btn" style="left:1881px;top:898px;width:32.5px;height:32px"></div><div class="b" style="left:0px;top:1050px;width:1920px;height:30px;background:#272a33;border-top:1px solid #343741"></div><div class="b" style="left:1650px;top:1058px;width:13px;height:13px;background:#5a5d66;border-radius:7px"></div><div class="ex"><div class="exi"><div class="b" style="left:213px;top:66px;width:710px;height:38.5px;background:linear-gradient(90deg,#d3e3ea,#c8deea 40%,#c6dfe9)"></div><div class="b" style="left:221px;top:73px;width:240px;height:31.5px;background:#eef4f9;border-radius:8px 8px 0 0"></div><div class="b" style="left:213px;top:104.5px;width:710px;height:48.5px;background:linear-gradient(90deg,#eef4f9,#eaf3f8 60%,#e3f0f5)"></div><div class="b" style="left:213px;top:153px;width:710px;height:1px;background:#c2d2db"></div><div class="b" style="left:415px;top:115px;width:349px;height:30px;background:linear-gradient(90deg,#fbfdfe,#f6fafc);border-radius:4px"></div><div class="b" style="left:776px;top:115px;width:136px;height:30px;background:#f4f9fb;border-radius:4px"></div><div class="b" style="left:213px;top:154px;width:710px;height:46px;background:#fff"></div><div class="b" style="left:213px;top:200px;width:710px;height:1px;background:#e3e3e3"></div><div class="b" style="left:409px;top:201px;width:16.5px;height:848px;background:#f0f0f0"></div><div class="b" style="left:426px;top:201px;width:1px;height:848px;background:#ededed"></div><div class="b" style="left:416px;top:333px;width:2px;height:260px;background:#8b8b8b;border-radius:1px"></div><div class="b" style="left:213px;top:201px;width:196px;height:848px;overflow:hidden"><div class="b" style="left:-213px;top:-201px"></div></div><svg class="b" style="left:453px;top:222px" width="84" height="66" viewBox="0 0 84 66"><path d="M0 5a5 5 0 0 1 5-5h21.5c2.6 0 4.2 1 5.6 3l2.4 3.400c1 1.4 2 2.1 4 2.100H79a5 5 0 0 1 5 5V46H0z" fill="url(#gt)"/><path d="M0 16a3.5 3.5 0 0 1 3.5-3.500h23.500c2.5 0 3.8-.7 5.2-1.900l1.5-1.300c1.2-1 2.5-1.3 4-1.300H80a4 4 0 0 1 4 4V62a4 4 0 0 1-4 4H4a4 4 0 0 1-4-4z" fill="url(#gf)"/><path d="M.5 62a3.5 3.5 0 0 0 3.5 3.500h76a3.5 3.5 0 0 0 3.5-3.5" fill="none" stroke="#e3a826" stroke-width="1" opacity=".7"/></svg><svg class="b" style="left:574px;top:222px" width="84" height="66" viewBox="0 0 84 66"><path d="M0 5a5 5 0 0 1 5-5h21.5c2.6 0 4.2 1 5.6 3l2.4 3.400c1 1.4 2 2.1 4 2.100H79a5 5 0 0 1 5 5V46H0z" fill="url(#gt)"/><rect x="2" y="10.5" width="79.5" height="30" rx="1.5" fill="#24272c"/><rect x="14" y="13" width="55" height="1" fill="#85898f"/><rect x="25" y="22" width="49" height="3.8" fill="#8b8e94"/><rect x="2.5" y="26.5" width="10" height="2.4" fill="#a0a3a9"/><rect x="14" y="25.5" width="12" height="2.4" fill="#6f7379"/><rect x="78.5" y="25" width="2.5" height="8" fill="#6f7379"/><path d="M0 41.500a3 3 0 0 1 3-3h25c2.5 0 3.8-.6 5.2-1.800l2-1.700c1.2-1 2.5-1.5 4-1.500H81a3 3 0 0 1 3 3V62a4 4 0 0 1-4 4H4a4 4 0 0 1-4-4z" fill="url(#gf)"/><path d="M.5 62a3.5 3.5 0 0 0 3.5 3.500h76a3.5 3.5 0 0 0 3.5-3.5" fill="none" stroke="#e3a826" stroke-width="1" opacity=".7"/></svg><div class="b" style="left:683px;top:207px;width:105px;height:131px;background:#cce4f7;border:1px solid #15181c;border-radius:2px"></div><svg class="b" style="left:688.5px;top:244.5px" width="92" height="60" viewBox="0 0 92 60"><rect width="92" height="60" rx="3" fill="#566170"/><rect x="9.5" y="1.5" width="73" height="57" fill="#26282d"/><rect x="2" y="5" width="5.5" height="4.6" rx=".8" fill="#fff"/><rect x="84.5" y="5" width="5.5" height="4.6" rx=".8" fill="#fff"/><rect x="2" y="14.1" width="5.5" height="4.6" rx=".8" fill="#fff"/><rect x="84.5" y="14.1" width="5.5" height="4.6" rx=".8" fill="#fff"/><rect x="2" y="23.2" width="5.5" height="4.6" rx=".8" fill="#fff"/><rect x="84.5" y="23.2" width="5.5" height="4.6" rx=".8" fill="#fff"/><rect x="2" y="32.3" width="5.5" height="4.6" rx=".8" fill="#fff"/><rect x="84.5" y="32.3" width="5.5" height="4.6" rx=".8" fill="#fff"/><rect x="2" y="41.4" width="5.5" height="4.6" rx=".8" fill="#fff"/><rect x="84.5" y="41.4" width="5.5" height="4.6" rx=".8" fill="#fff"/><rect x="2" y="50.5" width="5.5" height="4.6" rx=".8" fill="#fff"/><rect x="84.5" y="50.5" width="5.5" height="4.6" rx=".8" fill="#fff"/><rect x="19" y="4.5" width="56" height="1.2" fill="#9a9da3" opacity=".8"/><rect x="30" y="14" width="47" height="3.8" fill="#8b8e94"/><rect x="26" y="16.5" width="52" height="2.2" fill="#7a7d83"/><rect x="10.5" y="18.5" width="7" height="2.4" fill="#9a9da3"/><rect x="18.5" y="18" width="12" height="2.4" fill="#6f7379"/><rect x="10" y="31.5" width="72" height="2.5" fill="#15161a"/><rect x="17" y="32" width="10" height="1.3" fill="#a8abb0"/><rect x="51" y="32" width="4" height="1.3" fill="#a8abb0"/><rect x="10" y="36" width="72" height="17.5" fill="#34363b"/><rect x="10.5" y="38" width="19" height="15" fill="#4a2a30" opacity=".85"/><rect x="11" y="54" width="70" height="3.2" fill="#e6e9ee"/></svg><div class="b" style="left:213px;top:1049px;width:710px;height:31px;background:#fff"></div><div class="b" style="left:897px;top:1049px;width:22px;height:22px;background:#e0f0f4;border:1px solid #1e7f95"></div></div></div><div class="b" style="left:0px;top:1064px;width:1920px;height:16px;background:#e1e2e6;border-top:1px solid #ececf0"></div><div class="b" style="left:29px;top:1068.5px;width:17px;height:17px;background:#cf3a2a;border-radius:9px"></div><div class="b" style="left:612px;top:1071px;width:214px;height:32px;background:#f3f3f6;border-radius:16px;border:1px solid #e9e9ee"></div><div class="b" style="left:847px;top:1077px;width:18px;height:4px;background:#fbfbfd;border-radius:2px 2px 0 0"></div><div class="b" style="left:887px;top:1076px;width:16px;height:5px;background:#2a7fd6;border-radius:5px 5px 0 0"></div><div class="b" style="left:921px;top:1068px;width:34px;height:14px;background:#eef0f3;border-radius:4px;border:1px solid #f6f6f8"></div><div class="b" style="left:937px;top:1078.5px;width:13px;height:3px;background:#f7c64a"></div><div class="b" style="left:976px;top:1076px;width:18px;height:18px;background:#e34133;border-radius:9px"></div><div class="b" style="left:1066px;top:1077px;width:13px;height:4px;background:#f3f8fc;border:1.500px solid #35b5e8;border-bottom:none"></div><div class="b" style="left:1107px;top:1076px;width:20px;height:20px;background:#2fc3c9;border-radius:10px"></div><div class="b" style="left:1152px;top:1076.5px;width:16px;height:16px;background:#5a5fd6;border-radius:8px"></div><div class="b" style="left:1196px;top:1076px;width:18px;height:18px;background:#fdfdfd;border-radius:9px"></div><div class="b" style="left:1237px;top:1076px;width:24px;height:6px;background:#1b7a9e;border-radius:1px"></div><div class="b" style="left:1281px;top:1076px;width:14px;height:5px;background:#fafafa;border-radius:2px"></div><div class="b" style="left:1329px;top:1077px;width:16px;height:16px;background:#1e1e22;border-radius:8px"></div><svg class="b" style="left:1575px;top:0.5px" width="14" height="22" viewBox="0 0 14 22"><path d="M1 1v16l4-4 3 7 2.5-1-3-7h5.5z" fill="#fff" stroke="#222" stroke-width="1.2" stroke-linejoin="round"/></svg></div></div><div class="b" style="left:4px;top:746px;width:1912px;height:44px;background:#272a33;border-radius:4px"></div><div class="dk" style="left:0;top:794px;width:300px;height:252px"><div class="dt"></div></div><div class="b" style="left:4px;top:821px;width:292px;height:28px;background:#284cb8;border-radius:4px"></div><div class="dk" style="left:304px;top:794px;width:300px;height:252px"><div class="dt"></div></div><div class="dk" style="left:608px;top:794px;width:618px;height:252px"><div class="dt"></div></div><div class="mx"><div class="mxi"><div class="b" style="left:700px;top:844px;width:365px;height:7px;background:#1f7a1f"></div><div class="b" style="left:1065px;top:844px;width:77px;height:7px;background:#7d6416"></div><div class="b" style="left:1142px;top:844px;width:63px;height:7px;background:#7d1a22"></div><div class="b" style="left:700px;top:852px;width:365px;height:7px;background:#1f7a1f"></div><div class="b" style="left:1065px;top:852px;width:77px;height:7px;background:#7d6416"></div><div class="b" style="left:1142px;top:852px;width:63px;height:7px;background:#7d1a22"></div><div class="b" style="left:700px;top:881px;width:495px;height:4px;background:#5169d1;border-radius:2px"></div><div class="b" style="left:1185px;top:878px;width:20px;height:10px;background:#fff;border-radius:5px"></div><div class="b" style="left:600px;top:898px;width:613px;height:1px;background:#343741"></div><div class="b" style="left:700px;top:923px;width:365px;height:7px;background:#1f7a1f"></div><div class="b" style="left:1065px;top:923px;width:77px;height:7px;background:#7d6416"></div><div class="b" style="left:1142px;top:923px;width:63px;height:7px;background:#7d1a22"></div><div class="b" style="left:700px;top:960px;width:495px;height:4px;background:#5169d1;border-radius:2px"></div><div class="b" style="left:1185px;top:957px;width:20px;height:10px;background:#fff;border-radius:5px"></div><div class="b" style="left:600px;top:977px;width:613px;height:1px;background:#343741"></div><div class="b" style="left:700px;top:1002px;width:365px;height:6.5px;background:#1f7a1f"></div><div class="b" style="left:1065px;top:1002px;width:77px;height:6.5px;background:#7d6416"></div><div class="b" style="left:1142px;top:1002px;width:63px;height:6.5px;background:#7d1a22"></div><div class="b" style="left:700px;top:1009px;width:365px;height:7px;background:#1f7a1f"></div><div class="b" style="left:1065px;top:1009px;width:77px;height:7px;background:#7d6416"></div><div class="b" style="left:1142px;top:1009px;width:63px;height:7px;background:#7d1a22"></div></div></div><div class="b" style="left:1215.5px;top:824px;width:5.5px;height:151px;background:#3c404d;border-radius:3px"></div><div class="dk" style="left:1229px;top:794px;width:342px;height:252px"><div class="dt"></div></div><div class="btn" style="left:1234px;top:826px;width:331px;height:32px"></div><div class="btn" style="left:1264px;top:862px;width:301px;height:32px"></div><div class="btn" style="left:1479px;top:896.5px;width:26px;height:27px;background:#30333e"></div><div class="dk" style="left:1574px;top:794px;width:346px;height:252px"><div class="dt"></div></div><div class="btn" style="left:1580.5px;top:826px;width:333px;height:32px"></div><div class="btn" style="left:1580.5px;top:862px;width:333px;height:32px"></div><div class="btn" style="left:1580.5px;top:898px;width:296.5px;height:32px"></div><div class="btn" style="left:1580.5px;top:934px;width:333px;height:32px"></div><div class="btn" style="left:1580.5px;top:970px;width:333px;height:32px"></div><div class="btn" style="left:1881px;top:898px;width:32.5px;height:32px"></div><div class="b" style="left:0px;top:1050px;width:1920px;height:30px;background:#272a33;border-top:1px solid #343741"></div><div class="b" style="left:1650px;top:1058px;width:13px;height:13px;background:#5a5d66;border-radius:7px"></div><div class="ex"><div class="exi"><div class="b" style="left:213px;top:66px;width:710px;height:38.5px;background:linear-gradient(90deg,#d3e3ea,#c8deea 40%,#c6dfe9)"></div><div class="b" style="left:221px;top:73px;width:240px;height:31.5px;background:#eef4f9;border-radius:8px 8px 0 0"></div><div class="b" style="left:213px;top:104.5px;width:710px;height:48.5px;background:linear-gradient(90deg,#eef4f9,#eaf3f8 60%,#e3f0f5)"></div><div class="b" style="left:213px;top:153px;width:710px;height:1px;background:#c2d2db"></div><div class="b" style="left:415px;top:115px;width:349px;height:30px;background:linear-gradient(90deg,#fbfdfe,#f6fafc);border-radius:4px"></div><div class="b" style="left:776px;top:115px;width:136px;height:30px;background:#f4f9fb;border-radius:4px"></div><div class="b" style="left:213px;top:154px;width:710px;height:46px;background:#fff"></div><div class="b" style="left:213px;top:200px;width:710px;height:1px;background:#e3e3e3"></div><div class="b" style="left:409px;top:201px;width:16.5px;height:848px;background:#f0f0f0"></div><div class="b" style="left:426px;top:201px;width:1px;height:848px;background:#ededed"></div><div class="b" style="left:416px;top:333px;width:2px;height:260px;background:#8b8b8b;border-radius:1px"></div><div class="b" style="left:213px;top:201px;width:196px;height:848px;overflow:hidden"><div class="b" style="left:-213px;top:-201px"></div></div><svg class="b" style="left:453px;top:222px" width="84" height="66" viewBox="0 0 84 66"><path d="M0 5a5 5 0 0 1 5-5h21.5c2.6 0 4.2 1 5.6 3l2.4 3.400c1 1.4 2 2.1 4 2.100H79a5 5 0 0 1 5 5V46H0z" fill="url(#gt)"/><path d="M0 16a3.5 3.5 0 0 1 3.5-3.500h23.500c2.5 0 3.8-.7 5.2-1.900l1.5-1.300c1.2-1 2.5-1.3 4-1.300H80a4 4 0 0 1 4 4V62a4 4 0 0 1-4 4H4a4 4 0 0 1-4-4z" fill="url(#gf)"/><path d="M.5 62a3.5 3.5 0 0 0 3.5 3.500h76a3.5 3.5 0 0 0 3.5-3.5" fill="none" stroke="#e3a826" stroke-width="1" opacity=".7"/></svg><svg class="b" style="left:574px;top:222px" width="84" height="66" viewBox="0 0 84 66"><path d="M0 5a5 5 0 0 1 5-5h21.5c2.6 0 4.2 1 5.6 3l2.4 3.400c1 1.4 2 2.1 4 2.100H79a5 5 0 0 1 5 5V46H0z" fill="url(#gt)"/><rect x="2" y="10.5" width="79.5" height="30" rx="1.5" fill="#24272c"/><rect x="14" y="13" width="55" height="1" fill="#85898f"/><rect x="25" y="22" width="49" height="3.8" fill="#8b8e94"/><rect x="2.5" y="26.5" width="10" height="2.4" fill="#a0a3a9"/><rect x="14" y="25.5" width="12" height="2.4" fill="#6f7379"/><rect x="78.5" y="25" width="2.5" height="8" fill="#6f7379"/><path d="M0 41.500a3 3 0 0 1 3-3h25c2.5 0 3.8-.6 5.2-1.800l2-1.700c1.2-1 2.5-1.5 4-1.500H81a3 3 0 0 1 3 3V62a4 4 0 0 1-4 4H4a4 4 0 0 1-4-4z" fill="url(#gf)"/><path d="M.5 62a3.5 3.5 0 0 0 3.5 3.500h76a3.5 3.5 0 0 0 3.5-3.5" fill="none" stroke="#e3a826" stroke-width="1" opacity=".7"/></svg><div class="b" style="left:683px;top:207px;width:105px;height:131px;background:#cce4f7;border:1px solid #15181c;border-radius:2px"></div><svg class="b" style="left:688.5px;top:244.5px" width="92" height="60" viewBox="0 0 92 60"><rect width="92" height="60" rx="3" fill="#566170"/><rect x="9.5" y="1.5" width="73" height="57" fill="#26282d"/><rect x="2" y="5" width="5.5" height="4.6" rx=".8" fill="#fff"/><rect x="84.5" y="5" width="5.5" height="4.6" rx=".8" fill="#fff"/><rect x="2" y="14.1" width="5.5" height="4.6" rx=".8" fill="#fff"/><rect x="84.5" y="14.1" width="5.5" height="4.6" rx=".8" fill="#fff"/><rect x="2" y="23.2" width="5.5" height="4.6" rx=".8" fill="#fff"/><rect x="84.5" y="23.2" width="5.5" height="4.6" rx=".8" fill="#fff"/><rect x="2" y="32.3" width="5.5" height="4.6" rx=".8" fill="#fff"/><rect x="84.5" y="32.3" width="5.5" height="4.6" rx=".8" fill="#fff"/><rect x="2" y="41.4" width="5.5" height="4.6" rx=".8" fill="#fff"/><rect x="84.5" y="41.4" width="5.5" height="4.6" rx=".8" fill="#fff"/><rect x="2" y="50.5" width="5.5" height="4.6" rx=".8" fill="#fff"/><rect x="84.5" y="50.5" width="5.5" height="4.6" rx=".8" fill="#fff"/><rect x="19" y="4.5" width="56" height="1.2" fill="#9a9da3" opacity=".8"/><rect x="30" y="14" width="47" height="3.8" fill="#8b8e94"/><rect x="26" y="16.5" width="52" height="2.2" fill="#7a7d83"/><rect x="10.5" y="18.5" width="7" height="2.4" fill="#9a9da3"/><rect x="18.5" y="18" width="12" height="2.4" fill="#6f7379"/><rect x="10" y="31.5" width="72" height="2.5" fill="#15161a"/><rect x="17" y="32" width="10" height="1.3" fill="#a8abb0"/><rect x="51" y="32" width="4" height="1.3" fill="#a8abb0"/><rect x="10" y="36" width="72" height="17.5" fill="#34363b"/><rect x="10.5" y="38" width="19" height="15" fill="#4a2a30" opacity=".85"/><rect x="11" y="54" width="70" height="3.2" fill="#e6e9ee"/></svg><div class="b" style="left:213px;top:1049px;width:710px;height:31px;background:#fff"></div><div class="b" style="left:897px;top:1049px;width:22px;height:22px;background:#e0f0f4;border:1px solid #1e7f95"></div></div></div><div class="b" style="left:0px;top:1064px;width:1920px;height:16px;background:#e1e2e6;border-top:1px solid #ececf0"></div><div class="b" style="left:29px;top:1068.5px;width:17px;height:17px;background:#cf3a2a;border-radius:9px"></div><div class="b" style="left:612px;top:1071px;width:214px;height:32px;background:#f3f3f6;border-radius:16px;border:1px solid #e9e9ee"></div><div class="b" style="left:847px;top:1077px;width:18px;height:4px;background:#fbfbfd;border-radius:2px 2px 0 0"></div><div class="b" style="left:887px;top:1076px;width:16px;height:5px;background:#2a7fd6;border-radius:5px 5px 0 0"></div><div class="b" style="left:921px;top:1068px;width:34px;height:14px;background:#eef0f3;border-radius:4px;border:1px solid #f6f6f8"></div><div class="b" style="left:937px;top:1078.5px;width:13px;height:3px;background:#f7c64a"></div><div class="b" style="left:976px;top:1076px;width:18px;height:18px;background:#e34133;border-radius:9px"></div><div class="b" style="left:1066px;top:1077px;width:13px;height:4px;background:#f3f8fc;border:1.500px solid #35b5e8;border-bottom:none"></div><div class="b" style="left:1107px;top:1076px;width:20px;height:20px;background:#2fc3c9;border-radius:10px"></div><div class="b" style="left:1152px;top:1076.5px;width:16px;height:16px;background:#5a5fd6;border-radius:8px"></div><div class="b" style="left:1196px;top:1076px;width:18px;height:18px;background:#fdfdfd;border-radius:9px"></div><div class="b" style="left:1237px;top:1076px;width:24px;height:6px;background:#1b7a9e;border-radius:1px"></div><div class="b" style="left:1281px;top:1076px;width:14px;height:5px;background:#fafafa;border-radius:2px"></div><div class="b" style="left:1329px;top:1077px;width:16px;height:16px;background:#1e1e22;border-radius:8px"></div><svg class="b" style="left:1575px;top:0.5px" width="14" height="22" viewBox="0 0 14 22"><path d="M1 1v16l4-4 3 7 2.5-1-3-7h5.5z" fill="#fff" stroke="#222" stroke-width="1.2" stroke-linejoin="round"/></svg></div></div><div class="b" style="left:4px;top:746px;width:1912px;height:44px;background:#272a33;border-radius:4px"></div><div class="t" style="left:10.3px;top:758.7px;font-size:13px;color:#fff;transform:scaleX(0.797);transform-origin:0 0"><span class="k">ソースが</span>選択<span class="k">されていません</span></div><div class="dk" style="left:0;top:794px;width:300px;height:252px"><div class="dt"></div></div><div class="t" style="left:8.5px;top:797.4px;font-size:13px;color:#fff;font-weight:500;transform:scaleX(0.738);transform-origin:0 0"><span class="k">シーン</span></div><div class="b" style="left:4px;top:821px;width:292px;height:28px;background:#284cb8;border-radius:4px"></div><div class="t" style="left:11px;top:825.4px;font-size:13px;color:#fff;transform:scaleX(0.712);transform-origin:0 0"><span class="k">シーン</span></div><div class="b" style="left:1px;top:1014px;width:298px;height:1px;background:#343741"></div><div class="b" style="left:10.5px;top:1029px;width:11px;height:2px;background:#fff"></div><div class="b" style="left:15px;top:1024.5px;width:2px;height:11px;background:#fff"></div><svg class="b" style="left:38px;top:1023px" width="12" height="14"><use href="#trash"/></svg><svg class="b" style="left:72px;top:1024px" width="12" height="12" viewBox="0 0 12 12"><defs><linearGradient id="fg" x1="0" x2="1"><stop offset="0" stop-color="#fff" stop-opacity="0"/><stop offset="1" stop-color="#fff"/></linearGradient></defs><rect x=".7" y=".7" width="10.6" height="10.6" rx="1" fill="none" stroke="#fff" stroke-width="1.4"/><rect x="2" y="2" width="3" height="8" fill="#fff"/><rect x="5" y="2" width="5" height="8" fill="url(#fg)"/></svg><svg class="b" style="left:105px;top:1026px" width="14" height="8" viewBox="0 0 14 8"><path d="M1.5 6.5L7 1.5l5.5 5" fill="none" stroke="#fff" stroke-width="1.6" stroke-linecap="round" stroke-linejoin="round"/></svg><svg class="b" style="left:133px;top:1026px" width="14" height="8" viewBox="0 0 14 8"><path d="M1.5 1.5L7 6.5l5.5-5" fill="none" stroke="#fff" stroke-width="1.6" stroke-linecap="round" stroke-linejoin="round"/></svg><div class="dk" style="left:304px;top:794px;width:300px;height:252px"><div class="dt"></div></div><div class="dk" style="left:608px;top:794px;width:618px;height:252px"><div class="dt"></div></div><svg class="b" style="left:1208px;top:802px" width="10" height="10"><use href="#flt"/></svg><div class="mx"><div class="mxi"><div class="t" style="left:604.7px;width:600px;text-align:right;top:822.5px;font-size:13px;color:#a3a6ad;letter-spacing:-0.36px"><span>0.0 dB</span></div><div class="b" style="left:700px;top:844px;width:365px;height:7px;background:#1f7a1f"></div><div class="b" style="left:1065px;top:844px;width:77px;height:7px;background:#7d6416"></div><div class="b" style="left:1142px;top:844px;width:63px;height:7px;background:#7d1a22"></div><div class="b" style="left:700px;top:852px;width:365px;height:7px;background:#1f7a1f"></div><div class="b" style="left:1065px;top:852px;width:77px;height:7px;background:#7d6416"></div><div class="b" style="left:1142px;top:852px;width:63px;height:7px;background:#7d1a22"></div><div class="b" style="left:1204.5px;top:859px;width:1px;height:3.5px;background:#c8c8c8"></div><div class="t" style="left:605.5px;width:600px;text-align:right;top:857px;font-size:10px;color:#e2e2e2"><span>0</span></div><div class="b" style="left:1169.5px;top:859px;width:1px;height:3.5px;background:#c8c8c8"></div><div class="t" style="left:869.5px;width:600px;text-align:center;top:857px;font-size:10px;color:#e2e2e2;letter-spacing:-.6px"><span>-5</span></div><div class="b" style="left:1134.5px;top:859px;width:1px;height:3.5px;background:#c8c8c8"></div><div class="t" style="left:834.5px;width:600px;text-align:center;top:857px;font-size:10px;color:#e2e2e2;letter-spacing:-.6px"><span>-10</span></div><div class="b" style="left:1099.5px;top:859px;width:1px;height:3.5px;background:#c8c8c8"></div><div class="t" style="left:799.5px;width:600px;text-align:center;top:857px;font-size:10px;color:#e2e2e2;letter-spacing:-.6px"><span>-15</span></div><div class="b" style="left:1064.5px;top:859px;width:1px;height:3.5px;background:#c8c8c8"></div><div class="t" style="left:764.5px;width:600px;text-align:center;top:857px;font-size:10px;color:#e2e2e2;letter-spacing:-.6px"><span>-20</span></div><div class="b" style="left:1029.5px;top:859px;width:1px;height:3.5px;background:#c8c8c8"></div><div class="t" style="left:729.5px;width:600px;text-align:center;top:857px;font-size:10px;color:#e2e2e2;letter-spacing:-.6px"><span>-25</span></div><div class="b" style="left:994.5px;top:859px;width:1px;height:3.5px;background:#c8c8c8"></div><div class="t" style="left:694.5px;width:600px;text-align:center;top:857px;font-size:10px;color:#e2e2e2;letter-spacing:-.6px"><span>-30</span></div><div class="b" style="left:959.5px;top:859px;width:1px;height:3.5px;background:#c8c8c8"></div><div class="t" style="left:659.5px;width:600px;text-align:center;top:857px;font-size:10px;color:#e2e2e2;letter-spacing:-.6px"><span>-35</span></div><div class="b" style="left:924.5px;top:859px;width:1px;height:3.5px;background:#c8c8c8"></div><div class="t" style="left:624.5px;width:600px;text-align:center;top:857px;font-size:10px;color:#e2e2e2;letter-spacing:-.6px"><span>-40</span></div><div class="b" style="left:889.5px;top:859px;width:1px;height:3.5px;background:#c8c8c8"></div><div class="t" style="left:589.5px;width:600px;text-align:center;top:857px;font-size:10px;color:#e2e2e2;letter-spacing:-.6px"><span>-45</span></div><div class="b" style="left:854.5px;top:859px;width:1px;height:3.5px;background:#c8c8c8"></div><div class="t" style="left:554.5px;width:600px;text-align:center;top:857px;font-size:10px;color:#e2e2e2;letter-spacing:-.6px"><span>-50</span></div><div class="b" style="left:819.5px;top:859px;width:1px;height:3.5px;background:#c8c8c8"></div><div class="t" style="left:519.5px;width:600px;text-align:center;top:857px;font-size:10px;color:#e2e2e2;letter-spacing:-.6px"><span>-55</span></div><div class="b" style="left:784.5px;top:859px;width:1px;height:3.5px;background:#c8c8c8"></div><div class="t" style="left:484.5px;width:600px;text-align:center;top:857px;font-size:10px;color:#e2e2e2;letter-spacing:-.6px"><span>-60</span></div><div class="b" style="left:937.5px;top:877px;width:1px;height:12px;background:#6d717c"></div><div class="b" style="left:984.2px;top:877px;width:1px;height:12px;background:#6d717c"></div><div class="b" style="left:1054.2px;top:877px;width:1px;height:12px;background:#6d717c"></div><div class="b" style="left:700px;top:881px;width:495px;height:4px;background:#5169d1;border-radius:2px"></div><div class="b" style="left:1185px;top:878px;width:20px;height:10px;background:#fff;border-radius:5px"></div><div class="b" style="left:600px;top:898px;width:613px;height:1px;background:#343741"></div><div class="t" style="left:604.7px;width:600px;text-align:right;top:901.7px;font-size:13px;color:#a3a6ad;letter-spacing:-0.36px"><span>0.0 dB</span></div><div class="b" style="left:700px;top:923px;width:365px;height:7px;background:#1f7a1f"></div><div class="b" style="left:1065px;top:923px;width:77px;height:7px;background:#7d6416"></div><div class="b" style="left:1142px;top:923px;width:63px;height:7px;background:#7d1a22"></div><div class="b" style="left:1204.5px;top:930px;width:1px;height:3.5px;background:#c8c8c8"></div><div class="t" style="left:605.5px;width:600px;text-align:right;top:927.7px;font-size:10px;color:#e2e2e2"><span>0</span></div><div class="b" style="left:1169.5px;top:930px;width:1px;height:3.5px;background:#c8c8c8"></div><div class="t" style="left:869.5px;width:600px;text-align:center;top:927.7px;font-size:10px;color:#e2e2e2;letter-spacing:-.6px"><span>-5</span></div><div class="b" style="left:1134.5px;top:930px;width:1px;height:3.5px;background:#c8c8c8"></div><div class="t" style="left:834.5px;width:600px;text-align:center;top:927.7px;font-size:10px;color:#e2e2e2;letter-spacing:-.6px"><span>-10</span></div><div class="b" style="left:1099.5px;top:930px;width:1px;height:3.5px;background:#c8c8c8"></div><div class="t" style="left:799.5px;width:600px;text-align:center;top:927.7px;font-size:10px;color:#e2e2e2;letter-spacing:-.6px"><span>-15</span></div><div class="b" style="left:1064.5px;top:930px;width:1px;height:3.5px;background:#c8c8c8"></div><div class="t" style="left:764.5px;width:600px;text-align:center;top:927.7px;font-size:10px;color:#e2e2e2;letter-spacing:-.6px"><span>-20</span></div><div class="b" style="left:1029.5px;top:930px;width:1px;height:3.5px;background:#c8c8c8"></div><div class="t" style="left:729.5px;width:600px;text-align:center;top:927.7px;font-size:10px;color:#e2e2e2;letter-spacing:-.6px"><span>-25</span></div><div class="b" style="left:994.5px;top:930px;width:1px;height:3.5px;background:#c8c8c8"></div><div class="t" style="left:694.5px;width:600px;text-align:center;top:927.7px;font-size:10px;color:#e2e2e2;letter-spacing:-.6px"><span>-30</span></div><div class="b" style="left:959.5px;top:930px;width:1px;height:3.5px;background:#c8c8c8"></div><div class="t" style="left:659.5px;width:600px;text-align:center;top:927.7px;font-size:10px;color:#e2e2e2;letter-spacing:-.6px"><span>-35</span></div><div class="b" style="left:924.5px;top:930px;width:1px;height:3.5px;background:#c8c8c8"></div><div class="t" style="left:624.5px;width:600px;text-align:center;top:927.7px;font-size:10px;color:#e2e2e2;letter-spacing:-.6px"><span>-40</span></div><div class="b" style="left:889.5px;top:930px;width:1px;height:3.5px;background:#c8c8c8"></div><div class="t" style="left:589.5px;width:600px;text-align:center;top:927.7px;font-size:10px;color:#e2e2e2;letter-spacing:-.6px"><span>-45</span></div><div class="b" style="left:854.5px;top:930px;width:1px;height:3.5px;background:#c8c8c8"></div><div class="t" style="left:554.5px;width:600px;text-align:center;top:927.7px;font-size:10px;color:#e2e2e2;letter-spacing:-.6px"><span>-50</span></div><div class="b" style="left:819.5px;top:930px;width:1px;height:3.5px;background:#c8c8c8"></div><div class="t" style="left:519.5px;width:600px;text-align:center;top:927.7px;font-size:10px;color:#e2e2e2;letter-spacing:-.6px"><span>-55</span></div><div class="b" style="left:784.5px;top:930px;width:1px;height:3.5px;background:#c8c8c8"></div><div class="t" style="left:484.5px;width:600px;text-align:center;top:927.7px;font-size:10px;color:#e2e2e2;letter-spacing:-.6px"><span>-60</span></div><div class="b" style="left:937.5px;top:956px;width:1px;height:12px;background:#6d717c"></div><div class="b" style="left:984.2px;top:956px;width:1px;height:12px;background:#6d717c"></div><div class="b" style="left:1054.2px;top:956px;width:1px;height:12px;background:#6d717c"></div><div class="b" style="left:700px;top:960px;width:495px;height:4px;background:#5169d1;border-radius:2px"></div><div class="b" style="left:1185px;top:957px;width:20px;height:10px;background:#fff;border-radius:5px"></div><div class="b" style="left:600px;top:977px;width:613px;height:1px;background:#343741"></div><div class="t" style="left:604.7px;width:600px;text-align:right;top:981px;font-size:13px;color:#a3a6ad;letter-spacing:-0.36px"><span>0.0 dB</span></div><div class="b" style="left:700px;top:1002px;width:365px;height:6.5px;background:#1f7a1f"></div><div class="b" style="left:1065px;top:1002px;width:77px;height:6.5px;background:#7d6416"></div><div class="b" style="left:1142px;top:1002px;width:63px;height:6.5px;background:#7d1a22"></div><div class="b" style="left:700px;top:1009px;width:365px;height:7px;background:#1f7a1f"></div><div class="b" style="left:1065px;top:1009px;width:77px;height:7px;background:#7d6416"></div><div class="b" style="left:1142px;top:1009px;width:63px;height:7px;background:#7d1a22"></div><div class="b" style="left:1091px;top:1002px;width:3px;height:6.5px;background:#f3bb33"></div><div class="b" style="left:1091px;top:1009px;width:3px;height:6px;background:#f3bb33"></div></div></div><div class="b" style="left:1215.5px;top:824px;width:5.5px;height:151px;background:#3c404d;border-radius:3px"></div><div class="dk" style="left:1229px;top:794px;width:342px;height:252px"><div class="dt"></div></div><div class="t" style="left:1237.8px;top:797.4px;font-size:13px;color:#fff;font-weight:500;transform:scaleX(0.767);transform-origin:0 0"><span class="k">シーントランジション</span></div><svg class="b" style="left:1553px;top:802px" width="10" height="10"><use href="#flt"/></svg><div class="btn" style="left:1234px;top:826px;width:331px;height:32px"></div><div class="b" style="left:1541px;top:826px;width:1px;height:32px;background:#2f323c"></div><svg class="b" style="left:1548.9px;top:839.5px" width="9" height="5" viewBox="0 0 9 5"><path d="M0 0h9L4.5 5z" fill="#fff"/></svg><div class="t" style="left:1243.4px;top:832.4px;font-size:13px;color:#fff;transform:scaleX(0.685);transform-origin:0 0"><span class="k">フェード</span></div><div class="t" style="left:1234.6px;top:868.4px;font-size:13px;color:#fff;transform:scaleX(0.969);transform-origin:0 0">期間</div><div class="btn" style="left:1264px;top:862px;width:301px;height:32px"></div><div class="b" style="left:1541px;top:862px;width:1px;height:32px;background:#2f323c"></div><div class="b" style="left:1541px;top:878px;width:24px;height:1px;background:#2f323c"></div><svg class="b" style="left:1549.4px;top:868.1px" width="8" height="5" viewBox="0 0 8 5"><path d="M.7 4.3L4 1l3.3 3.3" fill="none" stroke="#fff" stroke-width="1.2" stroke-linecap="round" stroke-linejoin="round"/></svg><svg class="b" style="left:1549.4px;top:883.5px" width="8" height="5" viewBox="0 0 8 5"><path d="M.7 .7L4 4l3.3-3.3" fill="none" stroke="#fff" stroke-width="1.2" stroke-linecap="round" stroke-linejoin="round"/></svg><div class="t" style="left:1279px;top:868.5px;font-size:13px;color:#fff;letter-spacing:-0.12px">300 ms</div><div class="btn" style="left:1479px;top:896.5px;width:26px;height:27px;background:#30333e"></div><div class="b" style="left:1485.5px;top:909px;width:13px;height:2px;background:#fff"></div><div class="b" style="left:1491px;top:903.5px;width:2px;height:13px;background:#fff"></div><svg class="b" style="left:1515px;top:902px" width="14" height="16"><use href="#trash"/></svg><div class="b" style="left:1550.3px;top:902.3px;width:3.4px;height:3.4px;background:#fff;border-radius:2px"></div><div class="b" style="left:1550.3px;top:908.3px;width:3.4px;height:3.4px;background:#fff;border-radius:2px"></div><div class="b" style="left:1550.3px;top:914.3px;width:3.4px;height:3.4px;background:#fff;border-radius:2px"></div><div class="dk" style="left:1574px;top:794px;width:346px;height:252px"><div class="dt"></div></div><div class="t" style="left:1582.5px;top:797.4px;font-size:13px;color:#fff;font-weight:500;transform:scaleX(0.727);transform-origin:0 0"><span class="k">コントロール</span></div><svg class="b" style="left:1903px;top:802px" width="10" height="10"><use href="#flt"/></svg><div class="btn" style="left:1580.5px;top:826px;width:333px;height:32px"></div><div class="t" style="left:1447px;width:600px;text-align:center;top:832.4px;font-size:13px;color:#fff;transform:scaleX(0.984);transform-origin:50% 0"><span>配信開始</span></div><div class="btn" style="left:1580.5px;top:862px;width:333px;height:32px"></div><div class="t" style="left:1447px;width:600px;text-align:center;top:868.4px;font-size:13px;color:#fff;transform:scaleX(0.984);transform-origin:50% 0"><span>録画開始</span></div><div class="btn" style="left:1580.5px;top:898px;width:296.5px;height:32px"></div><div class="t" style="left:1428.75px;width:600px;text-align:center;top:904.4px;font-size:13px;color:#fff;transform:scaleX(0.876);transform-origin:50% 0"><span>仮想<span class="k">カメラ</span>開始</span></div><div class="btn" style="left:1580.5px;top:934px;width:333px;height:32px"></div><div class="t" style="left:1447px;width:600px;text-align:center;top:940.4px;font-size:13px;color:#fff;transform:scaleX(0.754);transform-origin:50% 0"><span><span class="k">スタジオモード</span></span></div><div class="btn" style="left:1580.5px;top:970px;width:333px;height:32px"></div><div class="t" style="left:1447px;width:600px;text-align:center;top:976.4px;font-size:13px;color:#fff;transform:scaleX(0.961);transform-origin:50% 0"><span>設定</span></div><div class="btn" style="left:1881px;top:898px;width:32.5px;height:32px"></div><svg class="b" style="left:1889px;top:906px" width="16" height="16" viewBox="0 0 16 16"><g fill="#fff"><circle cx="8" cy="8" r="5.2"/><rect x="6.5" y="0.6" width="3" height="4" rx=".6" transform="rotate(0 8 8)"/><rect x="6.5" y="0.6" width="3" height="4" rx=".6" transform="rotate(45 8 8)"/><rect x="6.5" y="0.6" width="3" height="4" rx=".6" transform="rotate(90 8 8)"/><rect x="6.5" y="0.6" width="3" height="4" rx=".6" transform="rotate(135 8 8)"/><rect x="6.5" y="0.6" width="3" height="4" rx=".6" transform="rotate(180 8 8)"/><rect x="6.5" y="0.6" width="3" height="4" rx=".6" transform="rotate(225 8 8)"/><rect x="6.5" y="0.6" width="3" height="4" rx=".6" transform="rotate(270 8 8)"/><rect x="6.5" y="0.6" width="3" height="4" rx=".6" transform="rotate(315 8 8)"/></g><circle cx="8" cy="8" r="2.6" fill="#3c404d"/></svg><div class="b" style="left:0px;top:1050px;width:1920px;height:30px;background:#272a33;border-top:1px solid #343741"></div><div class="b" style="left:1526px;top:1051px;width:1px;height:29px;background:#343741"></div><div class="b" style="left:1556px;top:1051px;width:1px;height:29px;background:#343741"></div><div class="b" style="left:1641px;top:1051px;width:1px;height:29px;background:#343741"></div><div class="b" style="left:1726px;top:1051px;width:1px;height:29px;background:#343741"></div><div class="b" style="left:1800px;top:1051px;width:1px;height:29px;background:#343741"></div><div class="b" style="left:1541px;top:1061px;width:2px;height:6px;background:#5a5d66"></div><div class="b" style="left:1544.5px;top:1058px;width:2px;height:9px;background:#5a5d66"></div><svg class="b" style="left:1564px;top:1058px" width="14" height="14" viewBox="0 0 14 14"><circle cx="7" cy="7" r="2" fill="#5a5d66"/><path d="M3.5 3.5a5 5 0 0 0 0 7M10.5 3.5a5 5 0 0 1 0 7" fill="none" stroke="#5a5d66" stroke-width="1.3"/></svg><div class="b" style="left:1650px;top:1058px;width:13px;height:13px;background:#5a5d66;border-radius:7px"></div><div class="t" style="left:1587px;top:1055.5px;font-size:12.5px;color:#6d7079;letter-spacing:-0.36px">00:00:00</div><div class="t" style="left:1672px;top:1055.5px;font-size:12.5px;color:#6d7079;letter-spacing:-0.36px">00:00:00</div><div class="t" style="left:1735px;top:1055.5px;font-size:12.5px;color:#e8e8ea;letter-spacing:-0.57px">CPU: 0.4%</div><div class="t" style="left:1808px;top:1055.5px;font-size:12.5px;color:#e8e8ea;letter-spacing:-0.17px">30.00 / 30.00 FPS</div><div class="ex"><div class="exi"><div class="b" style="left:213px;top:66px;width:710px;height:38.5px;background:linear-gradient(90deg,#d3e3ea,#c8deea 40%,#c6dfe9)"></div><div class="b" style="left:221px;top:73px;width:240px;height:31.5px;background:#eef4f9;border-radius:8px 8px 0 0"></div><div class="b" style="left:213px;top:96.5px;width:8px;height:8px;background:radial-gradient(circle at 0 0,rgba(238,244,249,0) 7.500px,#eef4f9 8px)"></div><div class="b" style="left:461px;top:96.5px;width:8px;height:8px;background:radial-gradient(circle at 100% 0,rgba(238,244,249,0) 7.500px,#eef4f9 8px)"></div><div class="b" style="left:213px;top:104.5px;width:710px;height:48.5px;background:linear-gradient(90deg,#eef4f9,#eaf3f8 60%,#e3f0f5)"></div><div class="b" style="left:213px;top:153px;width:710px;height:1px;background:#c2d2db"></div><svg class="b" style="left:231px;top:81.5px" width="14" height="15.5" viewBox="0 0 14 15.5"><rect width="14" height="15.5" rx="1.5" fill="#8d45d6"/><rect x="0" y="0" width="14" height="7" rx="1.5" fill="#a15be6" opacity=".6"/><g fill="#3b1a6e"><rect x="1.2" y="2" width="1.6" height="1.8"/><rect x="1.2" y="6.8" width="1.6" height="1.8"/><rect x="1.2" y="11.6" width="1.6" height="1.8"/><rect x="11.2" y="2" width="1.6" height="1.8"/><rect x="11.2" y="6.8" width="1.6" height="1.8"/><rect x="11.2" y="11.6" width="1.6" height="1.8"/></g><path d="M4.8 4.300l5.6 3.5-5.6 3.500z" fill="#fff"/></svg><div class="t" style="left:256px;top:80.4px;transform:scaleX(0.751);transform-origin:0 0"><span class="k">ビデオ</span></div><svg class="b" style="left:434.9px;top:84.25px" width="9" height="9" viewBox="0 0 9 9"><path d="M.5 .5l8 8M8.5 .5l-8 8" stroke="#1b1b1b" stroke-width="1.1" stroke-linecap="round"/></svg><svg class="b" style="left:478px;top:84.25px" width="11" height="11" viewBox="0 0 11 11"><path d="M5.5 .5v10M.5 5.500h10" stroke="#1b1b1b" stroke-width="1.1" stroke-linecap="round"/></svg><svg class="b" style="left:803.5px;top:75px" width="11" height="10" viewBox="0 0 11 10"><path d="M.5 5.500h10" stroke="#111" stroke-width="1.1"/></svg><svg class="b" style="left:848.5px;top:75px" width="11" height="11" viewBox="0 0 11 11"><rect x=".6" y=".6" width="9.3" height="9.3" rx="1.2" fill="none" stroke="#111" stroke-width="1.1"/></svg><svg class="b" style="left:895px;top:75px" width="11" height="11" viewBox="0 0 11 11"><path d="M.5 .5l9.5 9.500M10 .5L.5 10" stroke="#111" stroke-width="1.1" stroke-linecap="round"/></svg><svg class="b" style="left:233.5px;top:123px" width="13" height="11" viewBox="0 0 13 11"><path d="M12.5 5.500H1M5.8 .7L1 5.500l4.8 4.8" fill="none" stroke="#a9afb4" stroke-width="1.1" stroke-linecap="round" stroke-linejoin="round"/></svg><svg class="b" style="left:281.5px;top:123px" width="13" height="11" viewBox="0 0 13 11"><path d="M.5 5.500H12M7.2 .7L12 5.5 7.2 10.3" fill="none" stroke="#a9afb4" stroke-width="1.1" stroke-linecap="round" stroke-linejoin="round"/></svg><svg class="b" style="left:329.6px;top:122px" width="12" height="13" viewBox="0 0 12 13"><path d="M6 12.500V1M1.2 5.800L6 1l4.8 4.8" fill="none" stroke="#2a2a2a" stroke-width="1.1" stroke-linecap="round" stroke-linejoin="round"/></svg><svg class="b" style="left:377.25px;top:122px" width="13" height="13" viewBox="0 0 13 13"><path d="M11.7 6.500a5.2 5.2 0 1 1-1.7-3.9" fill="none" stroke="#2a2a2a" stroke-width="1.1" stroke-linecap="round"/><path d="M10.3 .6v2.300H8" fill="none" stroke="#2a2a2a" stroke-width="1.1" stroke-linecap="round" stroke-linejoin="round"/></svg><div class="b" style="left:415px;top:115px;width:349px;height:30px;background:linear-gradient(90deg,#fbfdfe,#f6fafc);border-radius:4px"></div><svg class="b" style="left:427.5px;top:121px" width="15" height="14" viewBox="0 0 15 14"><rect x=".6" y=".6" width="13.8" height="9.8" rx="1.6" fill="none" stroke="#4a4a4a" stroke-width="1.1"/><path d="M4 13h7M5.5 10.500v2.500M9.5 10.500v2.5" stroke="#8a8a8a" stroke-width="1"/></svg><svg class="b" style="left:462px;top:123px" width="7" height="11" viewBox="0 0 7 11"><path d="M1.2 1L5.6 5.5 1.2 10" fill="none" stroke="#3a3a3a" stroke-width="1.3" stroke-linecap="round" stroke-linejoin="round"/></svg><div class="t" style="left:488px;top:118.9px;font-size:14px;transform:scaleX(0.667);transform-origin:0 0"><span class="k">ビデオ</span></div><svg class="b" style="left:536px;top:123px" width="7" height="11" viewBox="0 0 7 11"><path d="M1.2 1L5.6 5.5 1.2 10" fill="none" stroke="#3a3a3a" stroke-width="1.3" stroke-linecap="round" stroke-linejoin="round"/></svg><div class="b" style="left:776px;top:115px;width:136px;height:30px;background:#f4f9fb;border-radius:4px"></div><div class="t" style="left:791px;top:119.4px;font-size:14px;color:#6a6a6a;transform:scaleX(0.807);transform-origin:0 0"><span class="k">ビデオの</span>検索</div><svg class="b" style="left:886.75px;top:123px" width="12" height="12" viewBox="0 0 12 12"><circle cx="4.8" cy="4.8" r="3.9" fill="none" stroke="#444" stroke-width="1.1"/><path d="M7.7 7.700l3.6 3.6" stroke="#444" stroke-width="1.1" stroke-linecap="round"/></svg><div class="b" style="left:213px;top:154px;width:710px;height:46px;background:#fff"></div><div class="b" style="left:213px;top:200px;width:710px;height:1px;background:#e3e3e3"></div><svg class="b" style="left:230.5px;top:169.5px" width="16" height="16" viewBox="0 0 16 16"><circle cx="8" cy="8" r="7.2" fill="none" stroke="#555" stroke-width="1"/><path d="M8 4.600v6.800M4.6 8h6.8" stroke="#1779c4" stroke-width="1.1" stroke-linecap="round"/></svg><div class="t" style="left:255px;top:169.4px;transform:scaleX(1.000);transform-origin:0 0">新規作成</div><svg class="b" style="left:308.5px;top:176px" width="7" height="4.5" viewBox="0 0 7 4.5"><path d="M.6 .6L3.5 3.6 6.4 .6" fill="none" stroke="#8a8a8a" stroke-width="1" stroke-linecap="round" stroke-linejoin="round"/></svg><div class="b" style="left:332.5px;top:165px;width:1px;height:26px;background:#e6e6e6"></div><svg class="b" style="left:351.25px;top:169.5px" width="15" height="17" viewBox="0 0 15 17"><path d="M3.3 .6l6 10M11.7 .6l-6 10" stroke="#444" stroke-width="1" stroke-linecap="round"/><circle cx="3.6" cy="13.3" r="2.5" fill="none" stroke="#1a80c7" stroke-width="1.1"/><circle cx="11.4" cy="13.3" r="2.5" fill="none" stroke="#1a80c7" stroke-width="1.1"/></svg><svg class="b" style="left:399.5px;top:170px" width="15" height="16" viewBox="0 0 15 16"><path d="M3.5 4.200H2.600A2 2 0 0 0 .6 6.200v6.600a2 2 0 0 0 2 2h5a2 2 0 0 0 2-2v-.5" fill="none" stroke="#444" stroke-width="1"/><rect x="4.6" y=".6" width="9.5" height="11" rx="2" fill="#fff" stroke="#1a80c7" stroke-width="1.1"/></svg><svg class="b" style="left:447.5px;top:169.5px" width="15" height="17" viewBox="0 0 15 17"><path d="M4 2.500H2.600a2 2 0 0 0-2 2v9.500a2 2 0 0 0 2 2H5M10 2.500h1.400a2 2 0 0 1 2 2V6" fill="none" stroke="#444" stroke-width="1"/><rect x="4" y=".6" width="6" height="3.2" rx="1.2" fill="#fff" stroke="#444" stroke-width="1"/><rect x="6.6" y="6.6" width="7.8" height="9.8" rx="1.6" fill="#fff" stroke="#1a80c7" stroke-width="1.1"/></svg><svg class="b" style="left:494.5px;top:169.5px" width="17" height="17" viewBox="0 0 17 17"><path d="M10 3.300H2.600a2 2 0 0 0-2 2v6.400a2 2 0 0 0 2 2H10M14.5 3.300a2 2 0 0 1 2 2v6.400a2 2 0 0 1-2 2" fill="none" stroke="#444" stroke-width="1"/><path d="M12.3 .6v15.800M10.3 .6h4M10.3 16.400h4" stroke="#1a80c7" stroke-width="1.1" stroke-linecap="round"/><path d="M3.5 11.300L5.9 5.500h.4l2.4 5.800M4.4 9.300h3.4" fill="none" stroke="#1a80c7" stroke-width="1"/></svg><svg class="b" style="left:543px;top:170px" width="16" height="16" viewBox="0 0 16 16"><path d="M6 3.300H2.800A2.2 2.2 0 0 0 .6 5.500v7.700a2.2 2.2 0 0 0 2.2 2.200h8a2.2 2.2 0 0 0 2.2-2.200V12" fill="none" stroke="#444" stroke-width="1"/><path d="M9.5 .8l5.7 5-5.7 5V8c-3-.2-5 .8-6.3 2.8.2-3.8 2.5-6.6 6.3-7z" fill="none" stroke="#1a80c7" stroke-width="1.1" stroke-linejoin="round"/></svg><svg class="b" style="left:591.5px;top:169.5px" width="15" height="17" viewBox="0 0 15 17"><path d="M.6 3.600h13.800M5 3.300a2.5 2.5 0 0 1 5 0M2.2 3.800l1 10.800a2 2 0 0 0 2 1.800h4.600a2 2 0 0 0 2-1.800l1-10.8" fill="none" stroke="#444" stroke-width="1" stroke-linecap="round"/><path d="M6 7v5.500M9 7v5.5" stroke="#444" stroke-width="1" stroke-linecap="round"/></svg><div class="b" style="left:625.5px;top:165px;width:1px;height:26px;background:#e6e6e6"></div><svg class="b" style="left:642px;top:170.5px" width="16" height="15" viewBox="0 0 16 15"><path d="M4 14V1M.8 4.200L4 1l3.2 3.2" fill="none" stroke="#444" stroke-width="1" stroke-linecap="round" stroke-linejoin="round"/><path d="M11.5 1v13M8.3 10.800l3.2 3.2 3.2-3.2" fill="none" stroke="#1a80c7" stroke-width="1.1" stroke-linecap="round" stroke-linejoin="round"/></svg><div class="t" style="left:666.5px;top:169.4px;transform:scaleX(0.860);transform-origin:0 0">並<span class="k">べ</span>替<span class="k">え</span></div><svg class="b" style="left:715.5px;top:176px" width="7" height="4.5" viewBox="0 0 7 4.5"><path d="M.6 .6L3.5 3.6 6.4 .6" fill="none" stroke="#8a8a8a" stroke-width="1" stroke-linecap="round" stroke-linejoin="round"/></svg><div class="b" style="left:752.05px;top:177.3px;width:2.4px;height:2.4px;background:#222;border-radius:2px"></div><div class="b" style="left:757.55px;top:177.3px;width:2.4px;height:2.4px;background:#222;border-radius:2px"></div><div class="b" style="left:763.05px;top:177.3px;width:2.4px;height:2.4px;background:#222;border-radius:2px"></div><svg class="b" style="left:853px;top:172px" width="16" height="12" viewBox="0 0 16 12"><rect x=".6" y=".6" width="14.8" height="10.8" rx="2.2" fill="none" stroke="#444" stroke-width="1"/><path d="M9.6 .6h3.600a2.2 2.2 0 0 1 2.2 2.200v6.400a2.2 2.2 0 0 1-2.2 2.200H9.600z" fill="#e2f1fb" stroke="#1a80c7" stroke-width="1.1"/><path d="M11.3 4h2.400M11.3 6h2.400M11.3 8h2.4" stroke="#1a80c7" stroke-width=".9"/></svg><div class="t" style="left:878px;top:169.4px;transform:scaleX(0.937);transform-origin:0 0">詳細</div><div class="b" style="left:409px;top:201px;width:16.5px;height:848px;background:#f0f0f0"></div><div class="b" style="left:426px;top:201px;width:1px;height:848px;background:#ededed"></div><div class="b" style="left:416px;top:333px;width:2px;height:260px;background:#8b8b8b;border-radius:1px"></div><div class="b" style="left:213px;top:201px;width:196px;height:848px;overflow:hidden"><div class="b" style="left:-213px;top:-201px"><svg class="b" style="left:234.5px;top:211.5px" width="7" height="11" viewBox="0 0 7 11"><path d="M1.2 1L5.6 5.5 1.2 10" fill="none" stroke="#6a6a6a" stroke-width="1.3" stroke-linecap="round" stroke-linejoin="round"/></svg><svg class="b" style="left:255px;top:209px" width="16" height="16"><use href="#fd"/></svg><div class="t" style="left:276px;top:206.5px;letter-spacing:-0.09px">Kano Yukinori</div><svg class="b" style="left:234.5px;top:243.5px" width="7" height="11" viewBox="0 0 7 11"><path d="M1.2 1L5.6 5.5 1.2 10" fill="none" stroke="#6a6a6a" stroke-width="1.3" stroke-linecap="round" stroke-linejoin="round"/></svg><svg class="b" style="left:255px;top:241px" width="16" height="16" viewBox="0 0 16 16"><rect x="0" y="1.5" width="16" height="11" rx="1" fill="url(#gpc)"/><rect x="7" y="12.5" width="2" height="2" fill="#8e9aa5"/><rect x="4.5" y="14.3" width="7" height="1.2" rx=".6" fill="#9aa6b0"/></svg><div class="t" style="left:276px;top:238.5px;letter-spacing:-1.78px">PC</div><svg class="b" style="left:234.5px;top:275.5px" width="7" height="11" viewBox="0 0 7 11"><path d="M1.2 1L5.6 5.5 1.2 10" fill="none" stroke="#6a6a6a" stroke-width="1.3" stroke-linecap="round" stroke-linejoin="round"/></svg><svg class="b" style="left:255px;top:272px" width="16" height="16"><use href="#fd"/></svg><div class="b" style="left:255px;top:286.5px;width:16px;height:1.8px;background:#2f9a8f"></div><div class="t" style="left:276px;top:270.9px;transform:scaleX(0.731);transform-origin:0 0"><span class="k">ライブラリ</span></div><svg class="b" style="left:234.5px;top:307.5px" width="7" height="11" viewBox="0 0 7 11"><path d="M1.2 1L5.6 5.5 1.2 10" fill="none" stroke="#6a6a6a" stroke-width="1.3" stroke-linecap="round" stroke-linejoin="round"/></svg><svg class="b" style="left:255px;top:305px" width="16" height="16" viewBox="0 0 16 16"><circle cx="8" cy="8" r="7.3" fill="#d9d9d9" stroke="#bdbdbd" stroke-width=".6"/><path d="M8 8L2.5 3.5A7.3 7.3 0 0 1 8 .7z" fill="#efefef"/><path d="M8 8l5.5 4.5A7.3 7.3 0 0 1 8 15.3z" fill="#c9c9c9"/><circle cx="8" cy="8" r="2.2" fill="#f6f6f6" stroke="#b0b0b0" stroke-width=".6"/></svg><div class="t" style="left:276px;top:302.9px;transform:scaleX(0.915);transform-origin:0 0">BD-RE <span class="k">ドライブ</span> (D:) MrPC2:</div><svg class="b" style="left:234.5px;top:339.5px" width="7" height="11" viewBox="0 0 7 11"><path d="M1.2 1L5.6 5.5 1.2 10" fill="none" stroke="#6a6a6a" stroke-width="1.3" stroke-linecap="round" stroke-linejoin="round"/></svg><svg class="b" style="left:255px;top:337px" width="16" height="16" viewBox="0 0 16 16"><rect width="16" height="16" fill="#000"/><rect x="2.2" y="2.2" width="11.6" height="11.6" fill="#fff"/><circle cx="8" cy="8" r="3.6" fill="#000"/><path d="M6 10l4-4" stroke="#fff" stroke-width="1.3"/></svg><div class="t" style="left:276px;top:334.5px;letter-spacing:-0.13px">Launchkey Mini (F:)</div><svg class="b" style="left:234.5px;top:371.5px" width="7" height="11" viewBox="0 0 7 11"><path d="M1.2 1L5.6 5.5 1.2 10" fill="none" stroke="#6a6a6a" stroke-width="1.3" stroke-linecap="round" stroke-linejoin="round"/></svg><svg class="b" style="left:255px;top:369px" width="16" height="16" viewBox="0 0 16 16"><rect x="2" y="4" width="13.5" height="8.5" rx=".8" fill="url(#gpc)"/><rect x="7.6" y="12.5" width="2" height="1.8" fill="#8e9aa5"/><rect x="5" y="14.2" width="7.5" height="1.2" rx=".6" fill="#9aa6b0"/><circle cx="4" cy="4.2" r="3.6" fill="#6fb7e6"/><path d="M1 3.2c1.5-.8 4-.6 6 .6M2.2 1.5c.5 1.8.6 3.8.2 5.8" fill="none" stroke="#2c78b8" stroke-width=".7"/></svg><div class="t" style="left:276px;top:366.9px;transform:scaleX(0.731);transform-origin:0 0"><span class="k">ネットワーク</span></div><svg class="b" style="left:234.5px;top:403.5px" width="7" height="11" viewBox="0 0 7 11"><path d="M1.2 1L5.6 5.5 1.2 10" fill="none" stroke="#6a6a6a" stroke-width="1.3" stroke-linecap="round" stroke-linejoin="round"/></svg><svg class="b" style="left:255px;top:401px" width="16" height="16" viewBox="0 0 16 16"><rect x="0" y="1.5" width="16" height="13" rx="1" fill="#2d8fdb"/><rect x="1.2" y="2.7" width="13.6" height="9" fill="#bfe3fa"/><circle cx="5.2" cy="7.3" r="2.6" fill="#2d8fdb"/><path d="M5.2 7.3V4.7A2.6 2.6 0 0 1 7.8 7.3z" fill="#f5c33b"/><path d="M9.5 5h4M9.5 7.2h4M9.5 9.4h3" stroke="#2d6fb0" stroke-width="1"/><path d="M2 13.2h12" stroke="#cfeaff" stroke-width=".8"/></svg><div class="t" style="left:276px;top:398.9px;transform:scaleX(0.741);transform-origin:0 0"><span class="k">コントロール</span> <span class="k">パネル</span></div><svg class="b" style="left:255px;top:433px" width="16" height="16" viewBox="0 0 16 16"><path d="M3.2 2.8h9.6l-1 11.2a1 1 0 0 1-1 .9H5.2a1 1 0 0 1-1-.9z" fill="#eef6fb" stroke="#9fb4c2" stroke-width=".8"/><path d="M2.8 2.8h10.4" stroke="#8ea6b6" stroke-width="1"/><path d="M6 7.2l2-1.8 2 1.8M10.3 9.5L9.2 11.6H6.8L5.7 9.5" fill="none" stroke="#2a86d8" stroke-width="1.1" stroke-linejoin="round"/></svg><div class="t" style="left:276px;top:430.9px;transform:scaleX(0.821);transform-origin:0 0"><span class="k">ごみ</span>箱</div><svg class="b" style="left:234.5px;top:467.5px" width="7" height="11" viewBox="0 0 7 11"><path d="M1.2 1L5.6 5.5 1.2 10" fill="none" stroke="#6a6a6a" stroke-width="1.3" stroke-linecap="round" stroke-linejoin="round"/></svg><svg class="b" style="left:255px;top:465px" width="16" height="16"><use href="#fd"/></svg><div class="t" style="left:276px;top:462.5px;letter-spacing:0.29px">Audio</div><svg class="b" style="left:255px;top:497px" width="16" height="16"><use href="#fd"/></svg><div class="t" style="left:276px;top:494.5px;letter-spacing:-0.41px">Auto Saves</div><svg class="b" style="left:255px;top:529px" width="16" height="16"><use href="#fd"/></svg><div class="t" style="left:276px;top:526.5px;letter-spacing:0.17px">chatgpt-site</div><svg class="b" style="left:234.5px;top:563.5px" width="7" height="11" viewBox="0 0 7 11"><path d="M1.2 1L5.6 5.5 1.2 10" fill="none" stroke="#6a6a6a" stroke-width="1.3" stroke-linecap="round" stroke-linejoin="round"/></svg><svg class="b" style="left:255px;top:561px" width="16" height="16"><use href="#fd"/></svg><div class="t" style="left:276px;top:558.5px;letter-spacing:-0.31px">cubase</div><svg class="b" style="left:255px;top:593px" width="16" height="16"><use href="#fd"/></svg><div class="t" style="left:276px;top:590.5px;letter-spacing:-0.12px">Export</div><svg class="b" style="left:255px;top:625px" width="16" height="16"><use href="#fd"/></svg><div class="t" style="left:276px;top:622.5px;letter-spacing:-0.18px">Gemini</div><svg class="b" style="left:255px;top:657px" width="16" height="16"><use href="#fd"/></svg><div class="t" style="left:276px;top:654.5px;letter-spacing:-0.43px">Images</div><svg class="b" style="left:234.5px;top:691.5px" width="7" height="11" viewBox="0 0 7 11"><path d="M1.2 1L5.6 5.5 1.2 10" fill="none" stroke="#6a6a6a" stroke-width="1.3" stroke-linecap="round" stroke-linejoin="round"/></svg><svg class="b" style="left:255px;top:689px" width="16" height="16"><use href="#fd"/></svg><div class="t" style="left:276px;top:686.5px;letter-spacing:0.37px">jijii</div><svg class="b" style="left:234.5px;top:723.5px" width="7" height="11" viewBox="0 0 7 11"><path d="M1.2 1L5.6 5.5 1.2 10" fill="none" stroke="#6a6a6a" stroke-width="1.3" stroke-linecap="round" stroke-linejoin="round"/></svg><svg class="b" style="left:255px;top:721px" width="16" height="16"><use href="#fd"/></svg><div class="t" style="left:276px;top:718.5px;letter-spacing:0.07px">malib</div><svg class="b" style="left:234.5px;top:755.5px" width="7" height="11" viewBox="0 0 7 11"><path d="M1.2 1L5.6 5.5 1.2 10" fill="none" stroke="#6a6a6a" stroke-width="1.3" stroke-linecap="round" stroke-linejoin="round"/></svg><svg class="b" style="left:255px;top:753px" width="16" height="16"><use href="#fd"/></svg><div class="t" style="left:276px;top:750.5px;letter-spacing:0.05px">maniuta</div><svg class="b" style="left:234.5px;top:787.5px" width="7" height="11" viewBox="0 0 7 11"><path d="M1.2 1L5.6 5.5 1.2 10" fill="none" stroke="#6a6a6a" stroke-width="1.3" stroke-linecap="round" stroke-linejoin="round"/></svg><svg class="b" style="left:255px;top:785px" width="16" height="16"><use href="#fd"/></svg><div class="t" style="left:276px;top:782.5px;letter-spacing:-0.15px">midi_Telepathy</div><svg class="b" style="left:255px;top:817px" width="16" height="16"><use href="#fd"/></svg><div class="t" style="left:276px;top:814.5px;letter-spacing:0.33px">Mixdown</div><svg class="b" style="left:234.5px;top:851.5px" width="7" height="11" viewBox="0 0 7 11"><path d="M1.2 1L5.6 5.5 1.2 10" fill="none" stroke="#6a6a6a" stroke-width="1.3" stroke-linecap="round" stroke-linejoin="round"/></svg><svg class="b" style="left:255px;top:849px" width="16" height="16"><use href="#fd"/></svg><div class="t" style="left:276px;top:846.5px;letter-spacing:-0.82px">NKSC_PARAM</div><svg class="b" style="left:232.5px;top:886px" width="10" height="7" viewBox="0 0 10 7"><path d="M1 1.2L5 5.3 9 1.2" fill="none" stroke="#1b1b1b" stroke-width="1.5" stroke-linecap="round" stroke-linejoin="round"/></svg><svg class="b" style="left:255px;top:881px" width="16" height="16"><use href="#fd"/></svg><div class="t" style="left:276px;top:878.5px;letter-spacing:-0.42px">Telepathy_Inst_205BPM</div><svg class="b" style="left:242.5px;top:915.5px" width="7" height="11" viewBox="0 0 7 11"><path d="M1.2 1L5.6 5.5 1.2 10" fill="none" stroke="#6a6a6a" stroke-width="1.3" stroke-linecap="round" stroke-linejoin="round"/></svg><svg class="b" style="left:263px;top:913px" width="16" height="16"><use href="#fd"/></svg><div class="t" style="left:284px;top:910.5px;letter-spacing:-0.98px">__MACOSX</div><svg class="b" style="left:263px;top:945px" width="16" height="16"><use href="#fd"/></svg><div class="t" style="left:284px;top:942.5px;letter-spacing:-0.42px">Telepathy_Inst_205BPM</div><svg class="b" style="left:234.5px;top:979.5px" width="7" height="11" viewBox="0 0 7 11"><path d="M1.2 1L5.6 5.5 1.2 10" fill="none" stroke="#6a6a6a" stroke-width="1.3" stroke-linecap="round" stroke-linejoin="round"/></svg><svg class="b" style="left:255px;top:977px" width="16" height="16"><use href="#fd"/></svg><div class="t" style="left:276px;top:974.5px;letter-spacing:-0.42px">TimeTune</div><svg class="b" style="left:255px;top:1009px" width="16" height="16"><use href="#fd"/></svg><div class="t" style="left:276px;top:1006.5px;letter-spacing:-0.32px">Track Pictures</div><svg class="b" style="left:234.5px;top:1043.5px" width="7" height="11" viewBox="0 0 7 11"><path d="M1.2 1L5.6 5.5 1.2 10" fill="none" stroke="#6a6a6a" stroke-width="1.3" stroke-linecap="round" stroke-linejoin="round"/></svg><svg class="b" style="left:255px;top:1041px" width="16" height="16"><use href="#fd"/></svg><div class="t" style="left:276px;top:1038.5px;letter-spacing:0.09px">yuto</div></div></div><svg class="b" style="left:453px;top:222px" width="84" height="66" viewBox="0 0 84 66"><path d="M0 5a5 5 0 0 1 5-5h21.5c2.6 0 4.2 1 5.6 3l2.4 3.400c1 1.4 2 2.1 4 2.100H79a5 5 0 0 1 5 5V46H0z" fill="url(#gt)"/><path d="M0 16a3.5 3.5 0 0 1 3.5-3.500h23.500c2.5 0 3.8-.7 5.2-1.900l1.5-1.300c1.2-1 2.5-1.3 4-1.300H80a4 4 0 0 1 4 4V62a4 4 0 0 1-4 4H4a4 4 0 0 1-4-4z" fill="url(#gf)"/><path d="M.5 62a3.5 3.5 0 0 0 3.5 3.500h76a3.5 3.5 0 0 0 3.5-3.5" fill="none" stroke="#e3a826" stroke-width="1" opacity=".7"/></svg><div class="t" style="left:196px;width:600px;text-align:center;top:302.9px;transform:scaleX(0.708);transform-origin:50% 0"><span><span class="k">キャプチャ</span></span></div><svg class="b" style="left:574px;top:222px" width="84" height="66" viewBox="0 0 84 66"><path d="M0 5a5 5 0 0 1 5-5h21.5c2.6 0 4.2 1 5.6 3l2.4 3.400c1 1.4 2 2.1 4 2.100H79a5 5 0 0 1 5 5V46H0z" fill="url(#gt)"/><rect x="2" y="10.5" width="79.5" height="30" rx="1.5" fill="#24272c"/><rect x="14" y="13" width="55" height="1" fill="#85898f"/><rect x="25" y="22" width="49" height="3.8" fill="#8b8e94"/><rect x="2.5" y="26.5" width="10" height="2.4" fill="#a0a3a9"/><rect x="14" y="25.5" width="12" height="2.4" fill="#6f7379"/><rect x="78.5" y="25" width="2.5" height="8" fill="#6f7379"/><path d="M0 41.500a3 3 0 0 1 3-3h25c2.5 0 3.8-.6 5.2-1.800l2-1.700c1.2-1 2.5-1.5 4-1.500H81a3 3 0 0 1 3 3V62a4 4 0 0 1-4 4H4a4 4 0 0 1-4-4z" fill="url(#gf)"/><path d="M.5 62a3.5 3.5 0 0 0 3.5 3.500h76a3.5 3.5 0 0 0 3.5-3.5" fill="none" stroke="#e3a826" stroke-width="1" opacity=".7"/></svg><div class="t" style="left:316px;width:600px;text-align:center;top:302.9px;transform:scaleX(0.979);transform-origin:50% 0"><span>画面録画</span></div><div class="b" style="left:683px;top:207px;width:105px;height:131px;background:#cce4f7;border:1px solid #15181c;border-radius:2px"></div><svg class="b" style="left:688.5px;top:244.5px" width="92" height="60" viewBox="0 0 92 60"><rect width="92" height="60" rx="3" fill="#566170"/><rect x="9.5" y="1.5" width="73" height="57" fill="#26282d"/><rect x="2" y="5" width="5.5" height="4.6" rx=".8" fill="#fff"/><rect x="84.5" y="5" width="5.5" height="4.6" rx=".8" fill="#fff"/><rect x="2" y="14.1" width="5.5" height="4.6" rx=".8" fill="#fff"/><rect x="84.5" y="14.1" width="5.5" height="4.6" rx=".8" fill="#fff"/><rect x="2" y="23.2" width="5.5" height="4.6" rx=".8" fill="#fff"/><rect x="84.5" y="23.2" width="5.5" height="4.6" rx=".8" fill="#fff"/><rect x="2" y="32.3" width="5.5" height="4.6" rx=".8" fill="#fff"/><rect x="84.5" y="32.3" width="5.5" height="4.6" rx=".8" fill="#fff"/><rect x="2" y="41.4" width="5.5" height="4.6" rx=".8" fill="#fff"/><rect x="84.5" y="41.4" width="5.5" height="4.6" rx=".8" fill="#fff"/><rect x="2" y="50.5" width="5.5" height="4.6" rx=".8" fill="#fff"/><rect x="84.5" y="50.5" width="5.5" height="4.6" rx=".8" fill="#fff"/><rect x="19" y="4.5" width="56" height="1.2" fill="#9a9da3" opacity=".8"/><rect x="30" y="14" width="47" height="3.8" fill="#8b8e94"/><rect x="26" y="16.5" width="52" height="2.2" fill="#7a7d83"/><rect x="10.5" y="18.5" width="7" height="2.4" fill="#9a9da3"/><rect x="18.5" y="18" width="12" height="2.4" fill="#6f7379"/><rect x="10" y="31.5" width="72" height="2.5" fill="#15161a"/><rect x="17" y="32" width="10" height="1.3" fill="#a8abb0"/><rect x="51" y="32" width="4" height="1.3" fill="#a8abb0"/><rect x="10" y="36" width="72" height="17.5" fill="#34363b"/><rect x="10.5" y="38" width="19" height="15" fill="#4a2a30" opacity=".85"/><rect x="11" y="54" width="70" height="3.2" fill="#e6e9ee"/></svg><div class="t" style="left:435px;width:600px;text-align:center;top:303.7px;letter-spacing:-0.39px"><span>2025-08-15</span></div><div class="t" style="left:435px;width:600px;text-align:center;top:318.7px;letter-spacing:-0.17px"><span>13-11-51.mkv</span></div><div class="b" style="left:213px;top:1049px;width:710px;height:31px;background:#fff"></div><div class="t" style="left:227.5px;top:1051.4px;color:#222;transform:scaleX(0.894);transform-origin:0 0">3 個<span class="k">の</span>項目</div><div class="t" style="left:303.75px;top:1051.9px;color:#222;transform:scaleX(0.944);transform-origin:0 0">1 個<span class="k">の</span>項目<span class="k">を</span>選択  35.1 MB</div><svg class="b" style="left:880px;top:1055.5px" width="10" height="8" viewBox="0 0 10 8"><path d="M0 .6h10M0 3.600h10M0 6.600h10" stroke="#333" stroke-width="1"/></svg><div class="b" style="left:897px;top:1049px;width:22px;height:22px;background:#e0f0f4;border:1px solid #1e7f95"></div><div class="b" style="left:903px;top:1056px;width:11px;height:12px;background:#fff;border:1.200px solid #333"></div></div></div><div class="b" style="left:0px;top:1064px;width:1920px;height:16px;background:#e1e2e6;border-top:1px solid #ececf0"></div><svg class="b" style="left:20px;top:1070px" width="20" height="12" viewBox="0 0 20 12"><ellipse cx="8" cy="9" rx="8" ry="5" fill="#7fb2e8"/></svg><div class="b" style="left:29px;top:1068.5px;width:17px;height:17px;background:#cf3a2a;border-radius:9px"></div><div class="t" style="left:-262.5px;width:600px;text-align:center;top:1069px;font-size:11px;color:#fff;font-weight:700"><span>8</span></div><div class="t" style="left:50px;top:1071.5px;color:#222;letter-spacing:-0.52px">34°C</div><div class="b" style="left:573px;top:1077px;width:10.5px;height:4px;background:#2f9be8"></div><div class="b" style="left:585px;top:1077px;width:10.5px;height:4px;background:#1f8be0"></div><div class="b" style="left:612px;top:1071px;width:214px;height:32px;background:#f3f3f6;border-radius:16px;border:1px solid #e9e9ee"></div><div class="b" style="left:847px;top:1077px;width:18px;height:4px;background:#fbfbfd;border-radius:2px 2px 0 0"></div><div class="b" style="left:887px;top:1076px;width:16px;height:5px;background:#2a7fd6;border-radius:5px 5px 0 0"></div><div class="b" style="left:921px;top:1068px;width:34px;height:14px;background:#eef0f3;border-radius:4px;border:1px solid #f6f6f8"></div><div class="b" style="left:929px;top:1077px;width:9px;height:4px;background:#e8a20c;border-radius:2px 2px 0 0"></div><div class="b" style="left:937px;top:1078.5px;width:13px;height:3px;background:#f7c64a"></div><div class="b" style="left:976px;top:1076px;width:18px;height:18px;background:#e34133;border-radius:9px"></div><svg class="b" style="left:1021px;top:1075px" width="16" height="6" viewBox="0 0 16 6"><path d="M0 6L8 .5 16 6z" fill="#1f6fc8"/></svg><div class="b" style="left:1066px;top:1077px;width:13px;height:4px;background:#f3f8fc;border:1.500px solid #35b5e8;border-bottom:none"></div><div class="b" style="left:1107px;top:1076px;width:20px;height:20px;background:#2fc3c9;border-radius:10px"></div><div class="b" style="left:1152px;top:1076.5px;width:16px;height:16px;background:#5a5fd6;border-radius:8px"></div><div class="b" style="left:1165.5px;top:1069px;width:10px;height:10px;background:#e5484d;border-radius:5px"></div><div class="b" style="left:1169px;top:1073px;width:3px;height:6px;background:#fff;border-radius:1.500px"></div><div class="b" style="left:1196px;top:1076px;width:18px;height:18px;background:#fdfdfd;border-radius:9px"></div><div class="b" style="left:1237px;top:1076px;width:24px;height:6px;background:#1b7a9e;border-radius:1px"></div><div class="b" style="left:1281px;top:1076px;width:14px;height:5px;background:#fafafa;border-radius:2px"></div><div class="b" style="left:1283px;top:1076.5px;width:2.5px;height:4px;background:#d4521b"></div><div class="b" style="left:1287px;top:1076.5px;width:2.5px;height:4px;background:#d4521b"></div><div class="b" style="left:1291px;top:1076.5px;width:2px;height:4px;background:#d4521b"></div><div class="b" style="left:1329px;top:1077px;width:16px;height:16px;background:#1e1e22;border-radius:8px"></div><div class="t" style="left:1852px;top:1071.5px;color:#222;letter-spacing:-1.34px">13:13</div><svg class="b" style="left:1575px;top:0.5px" width="14" height="22" viewBox="0 0 14 22"><path d="M1 1v16l4-4 3 7 2.5-1-3-7h5.5z" fill="#fff" stroke="#222" stroke-width="1.2" stroke-linejoin="round"/></svg></div></div><div class="b" style="left:4px;top:746px;width:1912px;height:44px;background:#272a33;border-radius:4px"></div><div class="t" style="left:10.3px;top:758.7px;font-size:13px;color:#fff;transform:scaleX(0.797);transform-origin:0 0"><span class="k">ソースが</span>選択<span class="k">されていません</span></div><div class="dk" style="left:0;top:794px;width:300px;height:252px"><div class="dt"></div></div><div class="t" style="left:8.5px;top:797.4px;font-size:13px;color:#fff;font-weight:500;transform:scaleX(0.738);transform-origin:0 0"><span class="k">シーン</span></div><div class="b" style="left:4px;top:821px;width:292px;height:28px;background:#284cb8;border-radius:4px"></div><div class="t" style="left:11px;top:825.4px;font-size:13px;color:#fff;transform:scaleX(0.712);transform-origin:0 0"><span class="k">シーン</span></div><div class="b" style="left:1px;top:1014px;width:298px;height:1px;background:#343741"></div><div class="b" style="left:10.5px;top:1029px;width:11px;height:2px;background:#fff"></div><div class="b" style="left:15px;top:1024.5px;width:2px;height:11px;background:#fff"></div><svg class="b" style="left:38px;top:1023px" width="12" height="14"><use href="#trash"/></svg><svg class="b" style="left:72px;top:1024px" width="12" height="12" viewBox="0 0 12 12"><defs><linearGradient id="fg" x1="0" x2="1"><stop offset="0" stop-color="#fff" stop-opacity="0"/><stop offset="1" stop-color="#fff"/></linearGradient></defs><rect x=".7" y=".7" width="10.6" height="10.6" rx="1" fill="none" stroke="#fff" stroke-width="1.4"/><rect x="2" y="2" width="3" height="8" fill="#fff"/><rect x="5" y="2" width="5" height="8" fill="url(#fg)"/></svg><svg class="b" style="left:105px;top:1026px" width="14" height="8" viewBox="0 0 14 8"><path d="M1.5 6.5L7 1.5l5.5 5" fill="none" stroke="#fff" stroke-width="1.6" stroke-linecap="round" stroke-linejoin="round"/></svg><svg class="b" style="left:133px;top:1026px" width="14" height="8" viewBox="0 0 14 8"><path d="M1.5 1.5L7 6.5l5.5-5" fill="none" stroke="#fff" stroke-width="1.6" stroke-linecap="round" stroke-linejoin="round"/></svg><div class="dk" style="left:304px;top:794px;width:300px;height:252px"><div class="dt"></div></div><div class="dk" style="left:608px;top:794px;width:618px;height:252px"><div class="dt"></div></div><svg class="b" style="left:1208px;top:802px" width="10" height="10"><use href="#flt"/></svg><div class="mx"><div class="mxi"><div class="t" style="left:604.7px;width:600px;text-align:right;top:822.5px;font-size:13px;color:#a3a6ad;letter-spacing:-0.36px"><span>0.0 dB</span></div><div class="b" style="left:700px;top:844px;width:365px;height:7px;background:#1f7a1f"></div><div class="b" style="left:1065px;top:844px;width:77px;height:7px;background:#7d6416"></div><div class="b" style="left:1142px;top:844px;width:63px;height:7px;background:#7d1a22"></div><div class="b" style="left:700px;top:852px;width:365px;height:7px;background:#1f7a1f"></div><div class="b" style="left:1065px;top:852px;width:77px;height:7px;background:#7d6416"></div><div class="b" style="left:1142px;top:852px;width:63px;height:7px;background:#7d1a22"></div><div class="b" style="left:1204.5px;top:859px;width:1px;height:3.5px;background:#c8c8c8"></div><div class="t" style="left:605.5px;width:600px;text-align:right;top:857px;font-size:10px;color:#e2e2e2"><span>0</span></div><div class="b" style="left:1169.5px;top:859px;width:1px;height:3.5px;background:#c8c8c8"></div><div class="t" style="left:869.5px;width:600px;text-align:center;top:857px;font-size:10px;color:#e2e2e2;letter-spacing:-.6px"><span>-5</span></div><div class="b" style="left:1134.5px;top:859px;width:1px;height:3.5px;background:#c8c8c8"></div><div class="t" style="left:834.5px;width:600px;text-align:center;top:857px;font-size:10px;color:#e2e2e2;letter-spacing:-.6px"><span>-10</span></div><div class="b" style="left:1099.5px;top:859px;width:1px;height:3.5px;background:#c8c8c8"></div><div class="t" style="left:799.5px;width:600px;text-align:center;top:857px;font-size:10px;color:#e2e2e2;letter-spacing:-.6px"><span>-15</span></div><div class="b" style="left:1064.5px;top:859px;width:1px;height:3.5px;background:#c8c8c8"></div><div class="t" style="left:764.5px;width:600px;text-align:center;top:857px;font-size:10px;color:#e2e2e2;letter-spacing:-.6px"><span>-20</span></div><div class="b" style="left:1029.5px;top:859px;width:1px;height:3.5px;background:#c8c8c8"></div><div class="t" style="left:729.5px;width:600px;text-align:center;top:857px;font-size:10px;color:#e2e2e2;letter-spacing:-.6px"><span>-25</span></div><div class="b" style="left:994.5px;top:859px;width:1px;height:3.5px;background:#c8c8c8"></div><div class="t" style="left:694.5px;width:600px;text-align:center;top:857px;font-size:10px;color:#e2e2e2;letter-spacing:-.6px"><span>-30</span></div><div class="b" style="left:959.5px;top:859px;width:1px;height:3.5px;background:#c8c8c8"></div><div class="t" style="left:659.5px;width:600px;text-align:center;top:857px;font-size:10px;color:#e2e2e2;letter-spacing:-.6px"><span>-35</span></div><div class="b" style="left:924.5px;top:859px;width:1px;height:3.5px;background:#c8c8c8"></div><div class="t" style="left:624.5px;width:600px;text-align:center;top:857px;font-size:10px;color:#e2e2e2;letter-spacing:-.6px"><span>-40</span></div><div class="b" style="left:889.5px;top:859px;width:1px;height:3.5px;background:#c8c8c8"></div><div class="t" style="left:589.5px;width:600px;text-align:center;top:857px;font-size:10px;color:#e2e2e2;letter-spacing:-.6px"><span>-45</span></div><div class="b" style="left:854.5px;top:859px;width:1px;height:3.5px;background:#c8c8c8"></div><div class="t" style="left:554.5px;width:600px;text-align:center;top:857px;font-size:10px;color:#e2e2e2;letter-spacing:-.6px"><span>-50</span></div><div class="b" style="left:819.5px;top:859px;width:1px;height:3.5px;background:#c8c8c8"></div><div class="t" style="left:519.5px;width:600px;text-align:center;top:857px;font-size:10px;color:#e2e2e2;letter-spacing:-.6px"><span>-55</span></div><div class="b" style="left:784.5px;top:859px;width:1px;height:3.5px;background:#c8c8c8"></div><div class="t" style="left:484.5px;width:600px;text-align:center;top:857px;font-size:10px;color:#e2e2e2;letter-spacing:-.6px"><span>-60</span></div><div class="b" style="left:937.5px;top:877px;width:1px;height:12px;background:#6d717c"></div><div class="b" style="left:984.2px;top:877px;width:1px;height:12px;background:#6d717c"></div><div class="b" style="left:1054.2px;top:877px;width:1px;height:12px;background:#6d717c"></div><div class="b" style="left:700px;top:881px;width:495px;height:4px;background:#5169d1;border-radius:2px"></div><div class="b" style="left:1185px;top:878px;width:20px;height:10px;background:#fff;border-radius:5px"></div><div class="b" style="left:600px;top:898px;width:613px;height:1px;background:#343741"></div><div class="t" style="left:604.7px;width:600px;text-align:right;top:901.7px;font-size:13px;color:#a3a6ad;letter-spacing:-0.36px"><span>0.0 dB</span></div><div class="b" style="left:700px;top:923px;width:365px;height:7px;background:#1f7a1f"></div><div class="b" style="left:1065px;top:923px;width:77px;height:7px;background:#7d6416"></div><div class="b" style="left:1142px;top:923px;width:63px;height:7px;background:#7d1a22"></div><div class="b" style="left:1204.5px;top:930px;width:1px;height:3.5px;background:#c8c8c8"></div><div class="t" style="left:605.5px;width:600px;text-align:right;top:927.7px;font-size:10px;color:#e2e2e2"><span>0</span></div><div class="b" style="left:1169.5px;top:930px;width:1px;height:3.5px;background:#c8c8c8"></div><div class="t" style="left:869.5px;width:600px;text-align:center;top:927.7px;font-size:10px;color:#e2e2e2;letter-spacing:-.6px"><span>-5</span></div><div class="b" style="left:1134.5px;top:930px;width:1px;height:3.5px;background:#c8c8c8"></div><div class="t" style="left:834.5px;width:600px;text-align:center;top:927.7px;font-size:10px;color:#e2e2e2;letter-spacing:-.6px"><span>-10</span></div><div class="b" style="left:1099.5px;top:930px;width:1px;height:3.5px;background:#c8c8c8"></div><div class="t" style="left:799.5px;width:600px;text-align:center;top:927.7px;font-size:10px;color:#e2e2e2;letter-spacing:-.6px"><span>-15</span></div><div class="b" style="left:1064.5px;top:930px;width:1px;height:3.5px;background:#c8c8c8"></div><div class="t" style="left:764.5px;width:600px;text-align:center;top:927.7px;font-size:10px;color:#e2e2e2;letter-spacing:-.6px"><span>-20</span></div><div class="b" style="left:1029.5px;top:930px;width:1px;height:3.5px;background:#c8c8c8"></div><div class="t" style="left:729.5px;width:600px;text-align:center;top:927.7px;font-size:10px;color:#e2e2e2;letter-spacing:-.6px"><span>-25</span></div><div class="b" style="left:994.5px;top:930px;width:1px;height:3.5px;background:#c8c8c8"></div><div class="t" style="left:694.5px;width:600px;text-align:center;top:927.7px;font-size:10px;color:#e2e2e2;letter-spacing:-.6px"><span>-30</span></div><div class="b" style="left:959.5px;top:930px;width:1px;height:3.5px;background:#c8c8c8"></div><div class="t" style="left:659.5px;width:600px;text-align:center;top:927.7px;font-size:10px;color:#e2e2e2;letter-spacing:-.6px"><span>-35</span></div><div class="b" style="left:924.5px;top:930px;width:1px;height:3.5px;background:#c8c8c8"></div><div class="t" style="left:624.5px;width:600px;text-align:center;top:927.7px;font-size:10px;color:#e2e2e2;letter-spacing:-.6px"><span>-40</span></div><div class="b" style="left:889.5px;top:930px;width:1px;height:3.5px;background:#c8c8c8"></div><div class="t" style="left:589.5px;width:600px;text-align:center;top:927.7px;font-size:10px;color:#e2e2e2;letter-spacing:-.6px"><span>-45</span></div><div class="b" style="left:854.5px;top:930px;width:1px;height:3.5px;background:#c8c8c8"></div><div class="t" style="left:554.5px;width:600px;text-align:center;top:927.7px;font-size:10px;color:#e2e2e2;letter-spacing:-.6px"><span>-50</span></div><div class="b" style="left:819.5px;top:930px;width:1px;height:3.5px;background:#c8c8c8"></div><div class="t" style="left:519.5px;width:600px;text-align:center;top:927.7px;font-size:10px;color:#e2e2e2;letter-spacing:-.6px"><span>-55</span></div><div class="b" style="left:784.5px;top:930px;width:1px;height:3.5px;background:#c8c8c8"></div><div class="t" style="left:484.5px;width:600px;text-align:center;top:927.7px;font-size:10px;color:#e2e2e2;letter-spacing:-.6px"><span>-60</span></div><div class="b" style="left:937.5px;top:956px;width:1px;height:12px;background:#6d717c"></div><div class="b" style="left:984.2px;top:956px;width:1px;height:12px;background:#6d717c"></div><div class="b" style="left:1054.2px;top:956px;width:1px;height:12px;background:#6d717c"></div><div class="b" style="left:700px;top:960px;width:495px;height:4px;background:#5169d1;border-radius:2px"></div><div class="b" style="left:1185px;top:957px;width:20px;height:10px;background:#fff;border-radius:5px"></div><div class="b" style="left:600px;top:977px;width:613px;height:1px;background:#343741"></div><div class="t" style="left:604.7px;width:600px;text-align:right;top:981px;font-size:13px;color:#a3a6ad;letter-spacing:-0.36px"><span>0.0 dB</span></div><div class="b" style="left:700px;top:1002px;width:365px;height:6.5px;background:#1f7a1f"></div><div class="b" style="left:1065px;top:1002px;width:77px;height:6.5px;background:#7d6416"></div><div class="b" style="left:1142px;top:1002px;width:63px;height:6.5px;background:#7d1a22"></div><div class="b" style="left:700px;top:1009px;width:365px;height:7px;background:#1f7a1f"></div><div class="b" style="left:1065px;top:1009px;width:77px;height:7px;background:#7d6416"></div><div class="b" style="left:1142px;top:1009px;width:63px;height:7px;background:#7d1a22"></div><div class="b" style="left:1091px;top:1002px;width:3px;height:6.5px;background:#f3bb33"></div><div class="b" style="left:1091px;top:1009px;width:3px;height:6px;background:#f3bb33"></div></div></div><div class="b" style="left:1215.5px;top:824px;width:5.5px;height:151px;background:#3c404d;border-radius:3px"></div><div class="dk" style="left:1229px;top:794px;width:342px;height:252px"><div class="dt"></div></div><div class="t" style="left:1237.8px;top:797.4px;font-size:13px;color:#fff;font-weight:500;transform:scaleX(0.767);transform-origin:0 0"><span class="k">シーントランジション</span></div><svg class="b" style="left:1553px;top:802px" width="10" height="10"><use href="#flt"/></svg><div class="btn" style="left:1234px;top:826px;width:331px;height:32px"></div><div class="b" style="left:1541px;top:826px;width:1px;height:32px;background:#2f323c"></div><svg class="b" style="left:1548.9px;top:839.5px" width="9" height="5" viewBox="0 0 9 5"><path d="M0 0h9L4.5 5z" fill="#fff"/></svg><div class="t" style="left:1243.4px;top:832.4px;font-size:13px;color:#fff;transform:scaleX(0.685);transform-origin:0 0"><span class="k">フェード</span></div><div class="t" style="left:1234.6px;top:868.4px;font-size:13px;color:#fff;transform:scaleX(0.969);transform-origin:0 0">期間</div><div class="btn" style="left:1264px;top:862px;width:301px;height:32px"></div><div class="b" style="left:1541px;top:862px;width:1px;height:32px;background:#2f323c"></div><div class="b" style="left:1541px;top:878px;width:24px;height:1px;background:#2f323c"></div><svg class="b" style="left:1549.4px;top:868.1px" width="8" height="5" viewBox="0 0 8 5"><path d="M.7 4.3L4 1l3.3 3.3" fill="none" stroke="#fff" stroke-width="1.2" stroke-linecap="round" stroke-linejoin="round"/></svg><svg class="b" style="left:1549.4px;top:883.5px" width="8" height="5" viewBox="0 0 8 5"><path d="M.7 .7L4 4l3.3-3.3" fill="none" stroke="#fff" stroke-width="1.2" stroke-linecap="round" stroke-linejoin="round"/></svg><div class="t" style="left:1279px;top:868.5px;font-size:13px;color:#fff;letter-spacing:-0.12px">300 ms</div><div class="btn" style="left:1479px;top:896.5px;width:26px;height:27px;background:#30333e"></div><div class="b" style="left:1485.5px;top:909px;width:13px;height:2px;background:#fff"></div><div class="b" style="left:1491px;top:903.5px;width:2px;height:13px;background:#fff"></div><svg class="b" style="left:1515px;top:902px" width="14" height="16"><use href="#trash"/></svg><div class="b" style="left:1550.3px;top:902.3px;width:3.4px;height:3.4px;background:#fff;border-radius:2px"></div><div class="b" style="left:1550.3px;top:908.3px;width:3.4px;height:3.4px;background:#fff;border-radius:2px"></div><div class="b" style="left:1550.3px;top:914.3px;width:3.4px;height:3.4px;background:#fff;border-radius:2px"></div><div class="dk" style="left:1574px;top:794px;width:346px;height:252px"><div class="dt"></div></div><div class="t" style="left:1582.5px;top:797.4px;font-size:13px;color:#fff;font-weight:500;transform:scaleX(0.727);transform-origin:0 0"><span class="k">コントロール</span></div><svg class="b" style="left:1903px;top:802px" width="10" height="10"><use href="#flt"/></svg><div class="btn" style="left:1580.5px;top:826px;width:333px;height:32px"></div><div class="t" style="left:1447px;width:600px;text-align:center;top:832.4px;font-size:13px;color:#fff;transform:scaleX(0.984);transform-origin:50% 0"><span>配信開始</span></div><div class="btn" style="left:1580.5px;top:862px;width:333px;height:32px"></div><div class="t" style="left:1447px;width:600px;text-align:center;top:868.4px;font-size:13px;color:#fff;transform:scaleX(0.984);transform-origin:50% 0"><span>録画開始</span></div><div class="btn" style="left:1580.5px;top:898px;width:296.5px;height:32px"></div><div class="t" style="left:1428.75px;width:600px;text-align:center;top:904.4px;font-size:13px;color:#fff;transform:scaleX(0.876);transform-origin:50% 0"><span>仮想<span class="k">カメラ</span>開始</span></div><div class="btn" style="left:1580.5px;top:934px;width:333px;height:32px"></div><div class="t" style="left:1447px;width:600px;text-align:center;top:940.4px;font-size:13px;color:#fff;transform:scaleX(0.754);transform-origin:50% 0"><span><span class="k">スタジオモード</span></span></div><div class="btn" style="left:1580.5px;top:970px;width:333px;height:32px"></div><div class="t" style="left:1447px;width:600px;text-align:center;top:976.4px;font-size:13px;color:#fff;transform:scaleX(0.961);transform-origin:50% 0"><span>設定</span></div><div class="btn" style="left:1881px;top:898px;width:32.5px;height:32px"></div><svg class="b" style="left:1889px;top:906px" width="16" height="16" viewBox="0 0 16 16"><g fill="#fff"><circle cx="8" cy="8" r="5.2"/><rect x="6.5" y="0.6" width="3" height="4" rx=".6" transform="rotate(0 8 8)"/><rect x="6.5" y="0.6" width="3" height="4" rx=".6" transform="rotate(45 8 8)"/><rect x="6.5" y="0.6" width="3" height="4" rx=".6" transform="rotate(90 8 8)"/><rect x="6.5" y="0.6" width="3" height="4" rx=".6" transform="rotate(135 8 8)"/><rect x="6.5" y="0.6" width="3" height="4" rx=".6" transform="rotate(180 8 8)"/><rect x="6.5" y="0.6" width="3" height="4" rx=".6" transform="rotate(225 8 8)"/><rect x="6.5" y="0.6" width="3" height="4" rx=".6" transform="rotate(270 8 8)"/><rect x="6.5" y="0.6" width="3" height="4" rx=".6" transform="rotate(315 8 8)"/></g><circle cx="8" cy="8" r="2.6" fill="#3c404d"/></svg><div class="b" style="left:0px;top:1050px;width:1920px;height:30px;background:#272a33;border-top:1px solid #343741"></div><div class="b" style="left:1526px;top:1051px;width:1px;height:29px;background:#343741"></div><div class="b" style="left:1556px;top:1051px;width:1px;height:29px;background:#343741"></div><div class="b" style="left:1641px;top:1051px;width:1px;height:29px;background:#343741"></div><div class="b" style="left:1726px;top:1051px;width:1px;height:29px;background:#343741"></div><div class="b" style="left:1800px;top:1051px;width:1px;height:29px;background:#343741"></div><div class="b" style="left:1541px;top:1061px;width:2px;height:6px;background:#5a5d66"></div><div class="b" style="left:1544.5px;top:1058px;width:2px;height:9px;background:#5a5d66"></div><svg class="b" style="left:1564px;top:1058px" width="14" height="14" viewBox="0 0 14 14"><circle cx="7" cy="7" r="2" fill="#5a5d66"/><path d="M3.5 3.5a5 5 0 0 0 0 7M10.5 3.5a5 5 0 0 1 0 7" fill="none" stroke="#5a5d66" stroke-width="1.3"/></svg><div class="b" style="left:1650px;top:1058px;width:13px;height:13px;background:#5a5d66;border-radius:7px"></div><div class="t" style="left:1587px;top:1055.5px;font-size:12.5px;color:#6d7079;letter-spacing:-0.36px">00:00:00</div><div class="t" style="left:1672px;top:1055.5px;font-size:12.5px;color:#6d7079;letter-spacing:-0.36px">00:00:00</div><div class="t" style="left:1735px;top:1055.5px;font-size:12.5px;color:#e8e8ea;letter-spacing:-0.57px">CPU: 0.4%</div><div class="t" style="left:1808px;top:1055.5px;font-size:12.5px;color:#e8e8ea;letter-spacing:-0.17px">30.00 / 30.00 FPS</div><div class="ex"><div class="exi"><div class="b" style="left:213px;top:66px;width:710px;height:38.5px;background:linear-gradient(90deg,#d3e3ea,#c8deea 40%,#c6dfe9)"></div><div class="b" style="left:221px;top:73px;width:240px;height:31.5px;background:#eef4f9;border-radius:8px 8px 0 0"></div><div class="b" style="left:213px;top:96.5px;width:8px;height:8px;background:radial-gradient(circle at 0 0,rgba(238,244,249,0) 7.500px,#eef4f9 8px)"></div><div class="b" style="left:461px;top:96.5px;width:8px;height:8px;background:radial-gradient(circle at 100% 0,rgba(238,244,249,0) 7.500px,#eef4f9 8px)"></div><div class="b" style="left:213px;top:104.5px;width:710px;height:48.5px;background:linear-gradient(90deg,#eef4f9,#eaf3f8 60%,#e3f0f5)"></div><div class="b" style="left:213px;top:153px;width:710px;height:1px;background:#c2d2db"></div><svg class="b" style="left:231px;top:81.5px" width="14" height="15.5" viewBox="0 0 14 15.5"><rect width="14" height="15.5" rx="1.5" fill="#8d45d6"/><rect x="0" y="0" width="14" height="7" rx="1.5" fill="#a15be6" opacity=".6"/><g fill="#3b1a6e"><rect x="1.2" y="2" width="1.6" height="1.8"/><rect x="1.2" y="6.8" width="1.6" height="1.8"/><rect x="1.2" y="11.6" width="1.6" height="1.8"/><rect x="11.2" y="2" width="1.6" height="1.8"/><rect x="11.2" y="6.8" width="1.6" height="1.8"/><rect x="11.2" y="11.6" width="1.6" height="1.8"/></g><path d="M4.8 4.300l5.6 3.5-5.6 3.500z" fill="#fff"/></svg><div class="t" style="left:256px;top:80.4px;transform:scaleX(0.751);transform-origin:0 0"><span class="k">ビデオ</span></div><svg class="b" style="left:434.9px;top:84.25px" width="9" height="9" viewBox="0 0 9 9"><path d="M.5 .5l8 8M8.5 .5l-8 8" stroke="#1b1b1b" stroke-width="1.1" stroke-linecap="round"/></svg><svg class="b" style="left:478px;top:84.25px" width="11" height="11" viewBox="0 0 11 11"><path d="M5.5 .5v10M.5 5.500h10" stroke="#1b1b1b" stroke-width="1.1" stroke-linecap="round"/></svg><svg class="b" style="left:803.5px;top:75px" width="11" height="10" viewBox="0 0 11 10"><path d="M.5 5.500h10" stroke="#111" stroke-width="1.1"/></svg><svg class="b" style="left:848.5px;top:75px" width="11" height="11" viewBox="0 0 11 11"><rect x=".6" y=".6" width="9.3" height="9.3" rx="1.2" fill="none" stroke="#111" stroke-width="1.1"/></svg><svg class="b" style="left:895px;top:75px" width="11" height="11" viewBox="0 0 11 11"><path d="M.5 .5l9.5 9.500M10 .5L.5 10" stroke="#111" stroke-width="1.1" stroke-linecap="round"/></svg><svg class="b" style="left:233.5px;top:123px" width="13" height="11" viewBox="0 0 13 11"><path d="M12.5 5.500H1M5.8 .7L1 5.500l4.8 4.8" fill="none" stroke="#a9afb4" stroke-width="1.1" stroke-linecap="round" stroke-linejoin="round"/></svg><svg class="b" style="left:281.5px;top:123px" width="13" height="11" viewBox="0 0 13 11"><path d="M.5 5.500H12M7.2 .7L12 5.5 7.2 10.3" fill="none" stroke="#a9afb4" stroke-width="1.1" stroke-linecap="round" stroke-linejoin="round"/></svg><svg class="b" style="left:329.6px;top:122px" width="12" height="13" viewBox="0 0 12 13"><path d="M6 12.500V1M1.2 5.800L6 1l4.8 4.8" fill="none" stroke="#2a2a2a" stroke-width="1.1" stroke-linecap="round" stroke-linejoin="round"/></svg><svg class="b" style="left:377.25px;top:122px" width="13" height="13" viewBox="0 0 13 13"><path d="M11.7 6.500a5.2 5.2 0 1 1-1.7-3.9" fill="none" stroke="#2a2a2a" stroke-width="1.1" stroke-linecap="round"/><path d="M10.3 .6v2.300H8" fill="none" stroke="#2a2a2a" stroke-width="1.1" stroke-linecap="round" stroke-linejoin="round"/></svg><div class="b" style="left:415px;top:115px;width:349px;height:30px;background:linear-gradient(90deg,#fbfdfe,#f6fafc);border-radius:4px"></div><svg class="b" style="left:427.5px;top:121px" width="15" height="14" viewBox="0 0 15 14"><rect x=".6" y=".6" width="13.8" height="9.8" rx="1.6" fill="none" stroke="#4a4a4a" stroke-width="1.1"/><path d="M4 13h7M5.5 10.500v2.500M9.5 10.500v2.5" stroke="#8a8a8a" stroke-width="1"/></svg><svg class="b" style="left:462px;top:123px" width="7" height="11" viewBox="0 0 7 11"><path d="M1.2 1L5.6 5.5 1.2 10" fill="none" stroke="#3a3a3a" stroke-width="1.3" stroke-linecap="round" stroke-linejoin="round"/></svg><div class="t" style="left:488px;top:118.9px;font-size:14px;transform:scaleX(0.667);transform-origin:0 0"><span class="k">ビデオ</span></div><svg class="b" style="left:536px;top:123px" width="7" height="11" viewBox="0 0 7 11"><path d="M1.2 1L5.6 5.5 1.2 10" fill="none" stroke="#3a3a3a" stroke-width="1.3" stroke-linecap="round" stroke-linejoin="round"/></svg><div class="b" style="left:776px;top:115px;width:136px;height:30px;background:#f4f9fb;border-radius:4px"></div><div class="t" style="left:791px;top:119.4px;font-size:14px;color:#6a6a6a;transform:scaleX(0.807);transform-origin:0 0"><span class="k">ビデオの</span>検索</div><svg class="b" style="left:886.75px;top:123px" width="12" height="12" viewBox="0 0 12 12"><circle cx="4.8" cy="4.8" r="3.9" fill="none" stroke="#444" stroke-width="1.1"/><path d="M7.7 7.700l3.6 3.6" stroke="#444" stroke-width="1.1" stroke-linecap="round"/></svg><div class="b" style="left:213px;top:154px;width:710px;height:46px;background:#fff"></div><div class="b" style="left:213px;top:200px;width:710px;height:1px;background:#e3e3e3"></div><svg class="b" style="left:230.5px;top:169.5px" width="16" height="16" viewBox="0 0 16 16"><circle cx="8" cy="8" r="7.2" fill="none" stroke="#555" stroke-width="1"/><path d="M8 4.600v6.800M4.6 8h6.8" stroke="#1779c4" stroke-width="1.1" stroke-linecap="round"/></svg><div class="t" style="left:255px;top:169.4px;transform:scaleX(1.000);transform-origin:0 0">新規作成</div><svg class="b" style="left:308.5px;top:176px" width="7" height="4.5" viewBox="0 0 7 4.5"><path d="M.6 .6L3.5 3.6 6.4 .6" fill="none" stroke="#8a8a8a" stroke-width="1" stroke-linecap="round" stroke-linejoin="round"/></svg><div class="b" style="left:332.5px;top:165px;width:1px;height:26px;background:#e6e6e6"></div><svg class="b" style="left:351.25px;top:169.5px" width="15" height="17" viewBox="0 0 15 17"><path d="M3.3 .6l6 10M11.7 .6l-6 10" stroke="#444" stroke-width="1" stroke-linecap="round"/><circle cx="3.6" cy="13.3" r="2.5" fill="none" stroke="#1a80c7" stroke-width="1.1"/><circle cx="11.4" cy="13.3" r="2.5" fill="none" stroke="#1a80c7" stroke-width="1.1"/></svg><svg class="b" style="left:399.5px;top:170px" width="15" height="16" viewBox="0 0 15 16"><path d="M3.5 4.200H2.600A2 2 0 0 0 .6 6.200v6.600a2 2 0 0 0 2 2h5a2 2 0 0 0 2-2v-.5" fill="none" stroke="#444" stroke-width="1"/><rect x="4.6" y=".6" width="9.5" height="11" rx="2" fill="#fff" stroke="#1a80c7" stroke-width="1.1"/></svg><svg class="b" style="left:447.5px;top:169.5px" width="15" height="17" viewBox="0 0 15 17"><path d="M4 2.500H2.600a2 2 0 0 0-2 2v9.500a2 2 0 0 0 2 2H5M10 2.500h1.400a2 2 0 0 1 2 2V6" fill="none" stroke="#444" stroke-width="1"/><rect x="4" y=".6" width="6" height="3.2" rx="1.2" fill="#fff" stroke="#444" stroke-width="1"/><rect x="6.6" y="6.6" width="7.8" height="9.8" rx="1.6" fill="#fff" stroke="#1a80c7" stroke-width="1.1"/></svg><svg class="b" style="left:494.5px;top:169.5px" width="17" height="17" viewBox="0 0 17 17"><path d="M10 3.300H2.600a2 2 0 0 0-2 2v6.400a2 2 0 0 0 2 2H10M14.5 3.300a2 2 0 0 1 2 2v6.400a2 2 0 0 1-2 2" fill="none" stroke="#444" stroke-width="1"/><path d="M12.3 .6v15.800M10.3 .6h4M10.3 16.400h4" stroke="#1a80c7" stroke-width="1.1" stroke-linecap="round"/><path d="M3.5 11.300L5.9 5.500h.4l2.4 5.800M4.4 9.300h3.4" fill="none" stroke="#1a80c7" stroke-width="1"/></svg><svg class="b" style="left:543px;top:170px" width="16" height="16" viewBox="0 0 16 16"><path d="M6 3.300H2.800A2.2 2.2 0 0 0 .6 5.500v7.700a2.2 2.2 0 0 0 2.2 2.200h8a2.2 2.2 0 0 0 2.2-2.200V12" fill="none" stroke="#444" stroke-width="1"/><path d="M9.5 .8l5.7 5-5.7 5V8c-3-.2-5 .8-6.3 2.8.2-3.8 2.5-6.6 6.3-7z" fill="none" stroke="#1a80c7" stroke-width="1.1" stroke-linejoin="round"/></svg><svg class="b" style="left:591.5px;top:169.5px" width="15" height="17" viewBox="0 0 15 17"><path d="M.6 3.600h13.800M5 3.300a2.5 2.5 0 0 1 5 0M2.2 3.800l1 10.800a2 2 0 0 0 2 1.800h4.600a2 2 0 0 0 2-1.800l1-10.8" fill="none" stroke="#444" stroke-width="1" stroke-linecap="round"/><path d="M6 7v5.500M9 7v5.5" stroke="#444" stroke-width="1" stroke-linecap="round"/></svg><div class="b" style="left:625.5px;top:165px;width:1px;height:26px;background:#e6e6e6"></div><svg class="b" style="left:642px;top:170.5px" width="16" height="15" viewBox="0 0 16 15"><path d="M4 14V1M.8 4.200L4 1l3.2 3.2" fill="none" stroke="#444" stroke-width="1" stroke-linecap="round" stroke-linejoin="round"/><path d="M11.5 1v13M8.3 10.800l3.2 3.2 3.2-3.2" fill="none" stroke="#1a80c7" stroke-width="1.1" stroke-linecap="round" stroke-linejoin="round"/></svg><div class="t" style="left:666.5px;top:169.4px;transform:scaleX(0.860);transform-origin:0 0">並<span class="k">べ</span>替<span class="k">え</span></div><svg class="b" style="left:715.5px;top:176px" width="7" height="4.5" viewBox="0 0 7 4.5"><path d="M.6 .6L3.5 3.6 6.4 .6" fill="none" stroke="#8a8a8a" stroke-width="1" stroke-linecap="round" stroke-linejoin="round"/></svg><div class="b" style="left:752.05px;top:177.3px;width:2.4px;height:2.4px;background:#222;border-radius:2px"></div><div class="b" style="left:757.55px;top:177.3px;width:2.4px;height:2.4px;background:#222;border-radius:2px"></div><div class="b" style="left:763.05px;top:177.3px;width:2.4px;height:2.4px;background:#222;border-radius:2px"></div><svg class="b" style="left:853px;top:172px" width="16" height="12" viewBox="0 0 16 12"><rect x=".6" y=".6" width="14.8" height="10.8" rx="2.2" fill="none" stroke="#444" stroke-width="1"/><path d="M9.6 .6h3.600a2.2 2.2 0 0 1 2.2 2.200v6.400a2.2 2.2 0 0 1-2.2 2.200H9.600z" fill="#e2f1fb" stroke="#1a80c7" stroke-width="1.1"/><path d="M11.3 4h2.400M11.3 6h2.400M11.3 8h2.4" stroke="#1a80c7" stroke-width=".9"/></svg><div class="t" style="left:878px;top:169.4px;transform:scaleX(0.937);transform-origin:0 0">詳細</div><div class="b" style="left:409px;top:201px;width:16.5px;height:848px;background:#f0f0f0"></div><div class="b" style="left:426px;top:201px;width:1px;height:848px;background:#ededed"></div><div class="b" style="left:416px;top:333px;width:2px;height:260px;background:#8b8b8b;border-radius:1px"></div><div class="b" style="left:213px;top:201px;width:196px;height:848px;overflow:hidden"><div class="b" style="left:-213px;top:-201px"><svg class="b" style="left:234.5px;top:211.5px" width="7" height="11" viewBox="0 0 7 11"><path d="M1.2 1L5.6 5.5 1.2 10" fill="none" stroke="#6a6a6a" stroke-width="1.3" stroke-linecap="round" stroke-linejoin="round"/></svg><svg class="b" style="left:255px;top:209px" width="16" height="16"><use href="#fd"/></svg><div class="t" style="left:276px;top:206.5px;letter-spacing:-0.09px">Kano Yukinori</div><svg class="b" style="left:234.5px;top:243.5px" width="7" height="11" viewBox="0 0 7 11"><path d="M1.2 1L5.6 5.5 1.2 10" fill="none" stroke="#6a6a6a" stroke-width="1.3" stroke-linecap="round" stroke-linejoin="round"/></svg><svg class="b" style="left:255px;top:241px" width="16" height="16" viewBox="0 0 16 16"><rect x="0" y="1.5" width="16" height="11" rx="1" fill="url(#gpc)"/><rect x="7" y="12.5" width="2" height="2" fill="#8e9aa5"/><rect x="4.5" y="14.3" width="7" height="1.2" rx=".6" fill="#9aa6b0"/></svg><div class="t" style="left:276px;top:238.5px;letter-spacing:-1.78px">PC</div><svg class="b" style="left:234.5px;top:275.5px" width="7" height="11" viewBox="0 0 7 11"><path d="M1.2 1L5.6 5.5 1.2 10" fill="none" stroke="#6a6a6a" stroke-width="1.3" stroke-linecap="round" stroke-linejoin="round"/></svg><svg class="b" style="left:255px;top:272px" width="16" height="16"><use href="#fd"/></svg><div class="b" style="left:255px;top:286.5px;width:16px;height:1.8px;background:#2f9a8f"></div><div class="t" style="left:276px;top:270.9px;transform:scaleX(0.731);transform-origin:0 0"><span class="k">ライブラリ</span></div><svg class="b" style="left:234.5px;top:307.5px" width="7" height="11" viewBox="0 0 7 11"><path d="M1.2 1L5.6 5.5 1.2 10" fill="none" stroke="#6a6a6a" stroke-width="1.3" stroke-linecap="round" stroke-linejoin="round"/></svg><svg class="b" style="left:255px;top:305px" width="16" height="16" viewBox="0 0 16 16"><circle cx="8" cy="8" r="7.3" fill="#d9d9d9" stroke="#bdbdbd" stroke-width=".6"/><path d="M8 8L2.5 3.5A7.3 7.3 0 0 1 8 .7z" fill="#efefef"/><path d="M8 8l5.5 4.5A7.3 7.3 0 0 1 8 15.3z" fill="#c9c9c9"/><circle cx="8" cy="8" r="2.2" fill="#f6f6f6" stroke="#b0b0b0" stroke-width=".6"/></svg><div class="t" style="left:276px;top:302.9px;transform:scaleX(0.915);transform-origin:0 0">BD-RE <span class="k">ドライブ</span> (D:) MrPC2:</div><svg class="b" style="left:234.5px;top:339.5px" width="7" height="11" viewBox="0 0 7 11"><path d="M1.2 1L5.6 5.5 1.2 10" fill="none" stroke="#6a6a6a" stroke-width="1.3" stroke-linecap="round" stroke-linejoin="round"/></svg><svg class="b" style="left:255px;top:337px" width="16" height="16" viewBox="0 0 16 16"><rect width="16" height="16" fill="#000"/><rect x="2.2" y="2.2" width="11.6" height="11.6" fill="#fff"/><circle cx="8" cy="8" r="3.6" fill="#000"/><path d="M6 10l4-4" stroke="#fff" stroke-width="1.3"/></svg><div class="t" style="left:276px;top:334.5px;letter-spacing:-0.13px">Launchkey Mini (F:)</div><svg class="b" style="left:234.5px;top:371.5px" width="7" height="11" viewBox="0 0 7 11"><path d="M1.2 1L5.6 5.5 1.2 10" fill="none" stroke="#6a6a6a" stroke-width="1.3" stroke-linecap="round" stroke-linejoin="round"/></svg><svg class="b" style="left:255px;top:369px" width="16" height="16" viewBox="0 0 16 16"><rect x="2" y="4" width="13.5" height="8.5" rx=".8" fill="url(#gpc)"/><rect x="7.6" y="12.5" width="2" height="1.8" fill="#8e9aa5"/><rect x="5" y="14.2" width="7.5" height="1.2" rx=".6" fill="#9aa6b0"/><circle cx="4" cy="4.2" r="3.6" fill="#6fb7e6"/><path d="M1 3.2c1.5-.8 4-.6 6 .6M2.2 1.5c.5 1.8.6 3.8.2 5.8" fill="none" stroke="#2c78b8" stroke-width=".7"/></svg><div class="t" style="left:276px;top:366.9px;transform:scaleX(0.731);transform-origin:0 0"><span class="k">ネットワーク</span></div><svg class="b" style="left:234.5px;top:403.5px" width="7" height="11" viewBox="0 0 7 11"><path d="M1.2 1L5.6 5.5 1.2 10" fill="none" stroke="#6a6a6a" stroke-width="1.3" stroke-linecap="round" stroke-linejoin="round"/></svg><svg class="b" style="left:255px;top:401px" width="16" height="16" viewBox="0 0 16 16"><rect x="0" y="1.5" width="16" height="13" rx="1" fill="#2d8fdb"/><rect x="1.2" y="2.7" width="13.6" height="9" fill="#bfe3fa"/><circle cx="5.2" cy="7.3" r="2.6" fill="#2d8fdb"/><path d="M5.2 7.3V4.7A2.6 2.6 0 0 1 7.8 7.3z" fill="#f5c33b"/><path d="M9.5 5h4M9.5 7.2h4M9.5 9.4h3" stroke="#2d6fb0" stroke-width="1"/><path d="M2 13.2h12" stroke="#cfeaff" stroke-width=".8"/></svg><div class="t" style="left:276px;top:398.9px;transform:scaleX(0.741);transform-origin:0 0"><span class="k">コントロール</span> <span class="k">パネル</span></div><svg class="b" style="left:255px;top:433px" width="16" height="16" viewBox="0 0 16 16"><path d="M3.2 2.8h9.6l-1 11.2a1 1 0 0 1-1 .9H5.2a1 1 0 0 1-1-.9z" fill="#eef6fb" stroke="#9fb4c2" stroke-width=".8"/><path d="M2.8 2.8h10.4" stroke="#8ea6b6" stroke-width="1"/><path d="M6 7.2l2-1.8 2 1.8M10.3 9.5L9.2 11.6H6.8L5.7 9.5" fill="none" stroke="#2a86d8" stroke-width="1.1" stroke-linejoin="round"/></svg><div class="t" style="left:276px;top:430.9px;transform:scaleX(0.821);transform-origin:0 0"><span class="k">ごみ</span>箱</div><svg class="b" style="left:234.5px;top:467.5px" width="7" height="11" viewBox="0 0 7 11"><path d="M1.2 1L5.6 5.5 1.2 10" fill="none" stroke="#6a6a6a" stroke-width="1.3" stroke-linecap="round" stroke-linejoin="round"/></svg><svg class="b" style="left:255px;top:465px" width="16" height="16"><use href="#fd"/></svg><div class="t" style="left:276px;top:462.5px;letter-spacing:0.29px">Audio</div><svg class="b" style="left:255px;top:497px" width="16" height="16"><use href="#fd"/></svg><div class="t" style="left:276px;top:494.5px;letter-spacing:-0.41px">Auto Saves</div><svg class="b" style="left:255px;top:529px" width="16" height="16"><use href="#fd"/></svg><div class="t" style="left:276px;top:526.5px;letter-spacing:0.17px">chatgpt-site</div><svg class="b" style="left:234.5px;top:563.5px" width="7" height="11" viewBox="0 0 7 11"><path d="M1.2 1L5.6 5.5 1.2 10" fill="none" stroke="#6a6a6a" stroke-width="1.3" stroke-linecap="round" stroke-linejoin="round"/></svg><svg class="b" style="left:255px;top:561px" width="16" height="16"><use href="#fd"/></svg><div class="t" style="left:276px;top:558.5px;letter-spacing:-0.31px">cubase</div><svg class="b" style="left:255px;top:593px" width="16" height="16"><use href="#fd"/></svg><div class="t" style="left:276px;top:590.5px;letter-spacing:-0.12px">Export</div><svg class="b" style="left:255px;top:625px" width="16" height="16"><use href="#fd"/></svg><div class="t" style="left:276px;top:622.5px;letter-spacing:-0.18px">Gemini</div><svg class="b" style="left:255px;top:657px" width="16" height="16"><use href="#fd"/></svg><div class="t" style="left:276px;top:654.5px;letter-spacing:-0.43px">Images</div><svg class="b" style="left:234.5px;top:691.5px" width="7" height="11" viewBox="0 0 7 11"><path d="M1.2 1L5.6 5.5 1.2 10" fill="none" stroke="#6a6a6a" stroke-width="1.3" stroke-linecap="round" stroke-linejoin="round"/></svg><svg class="b" style="left:255px;top:689px" width="16" height="16"><use href="#fd"/></svg><div class="t" style="left:276px;top:686.5px;letter-spacing:0.37px">jijii</div><svg class="b" style="left:234.5px;top:723.5px" width="7" height="11" viewBox="0 0 7 11"><path d="M1.2 1L5.6 5.5 1.2 10" fill="none" stroke="#6a6a6a" stroke-width="1.3" stroke-linecap="round" stroke-linejoin="round"/></svg><svg class="b" style="left:255px;top:721px" width="16" height="16"><use href="#fd"/></svg><div class="t" style="left:276px;top:718.5px;letter-spacing:0.07px">malib</div><svg class="b" style="left:234.5px;top:755.5px" width="7" height="11" viewBox="0 0 7 11"><path d="M1.2 1L5.6 5.5 1.2 10" fill="none" stroke="#6a6a6a" stroke-width="1.3" stroke-linecap="round" stroke-linejoin="round"/></svg><svg class="b" style="left:255px;top:753px" width="16" height="16"><use href="#fd"/></svg><div class="t" style="left:276px;top:750.5px;letter-spacing:0.05px">maniuta</div><svg class="b" style="left:234.5px;top:787.5px" width="7" height="11" viewBox="0 0 7 11"><path d="M1.2 1L5.6 5.5 1.2 10" fill="none" stroke="#6a6a6a" stroke-width="1.3" stroke-linecap="round" stroke-linejoin="round"/></svg><svg class="b" style="left:255px;top:785px" width="16" height="16"><use href="#fd"/></svg><div class="t" style="left:276px;top:782.5px;letter-spacing:-0.15px">midi_Telepathy</div><svg class="b" style="left:255px;top:817px" width="16" height="16"><use href="#fd"/></svg><div class="t" style="left:276px;top:814.5px;letter-spacing:0.33px">Mixdown</div><svg class="b" style="left:234.5px;top:851.5px" width="7" height="11" viewBox="0 0 7 11"><path d="M1.2 1L5.6 5.5 1.2 10" fill="none" stroke="#6a6a6a" stroke-width="1.3" stroke-linecap="round" stroke-linejoin="round"/></svg><svg class="b" style="left:255px;top:849px" width="16" height="16"><use href="#fd"/></svg><div class="t" style="left:276px;top:846.5px;letter-spacing:-0.82px">NKSC_PARAM</div><svg class="b" style="left:232.5px;top:886px" width="10" height="7" viewBox="0 0 10 7"><path d="M1 1.2L5 5.3 9 1.2" fill="none" stroke="#1b1b1b" stroke-width="1.5" stroke-linecap="round" stroke-linejoin="round"/></svg><svg class="b" style="left:255px;top:881px" width="16" height="16"><use href="#fd"/></svg><div class="t" style="left:276px;top:878.5px;letter-spacing:-0.42px">Telepathy_Inst_205BPM</div><svg class="b" style="left:242.5px;top:915.5px" width="7" height="11" viewBox="0 0 7 11"><path d="M1.2 1L5.6 5.5 1.2 10" fill="none" stroke="#6a6a6a" stroke-width="1.3" stroke-linecap="round" stroke-linejoin="round"/></svg><svg class="b" style="left:263px;top:913px" width="16" height="16"><use href="#fd"/></svg><div class="t" style="left:284px;top:910.5px;letter-spacing:-0.98px">__MACOSX</div><svg class="b" style="left:263px;top:945px" width="16" height="16"><use href="#fd"/></svg><div class="t" style="left:284px;top:942.5px;letter-spacing:-0.42px">Telepathy_Inst_205BPM</div><svg class="b" style="left:234.5px;top:979.5px" width="7" height="11" viewBox="0 0 7 11"><path d="M1.2 1L5.6 5.5 1.2 10" fill="none" stroke="#6a6a6a" stroke-width="1.3" stroke-linecap="round" stroke-linejoin="round"/></svg><svg class="b" style="left:255px;top:977px" width="16" height="16"><use href="#fd"/></svg><div class="t" style="left:276px;top:974.5px;letter-spacing:-0.42px">TimeTune</div><svg class="b" style="left:255px;top:1009px" width="16" height="16"><use href="#fd"/></svg><div class="t" style="left:276px;top:1006.5px;letter-spacing:-0.32px">Track Pictures</div><svg class="b" style="left:234.5px;top:1043.5px" width="7" height="11" viewBox="0 0 7 11"><path d="M1.2 1L5.6 5.5 1.2 10" fill="none" stroke="#6a6a6a" stroke-width="1.3" stroke-linecap="round" stroke-linejoin="round"/></svg><svg class="b" style="left:255px;top:1041px" width="16" height="16"><use href="#fd"/></svg><div class="t" style="left:276px;top:1038.5px;letter-spacing:0.09px">yuto</div></div></div><svg class="b" style="left:453px;top:222px" width="84" height="66" viewBox="0 0 84 66"><path d="M0 5a5 5 0 0 1 5-5h21.5c2.6 0 4.2 1 5.6 3l2.4 3.400c1 1.4 2 2.1 4 2.100H79a5 5 0 0 1 5 5V46H0z" fill="url(#gt)"/><path d="M0 16a3.5 3.5 0 0 1 3.5-3.500h23.500c2.5 0 3.8-.7 5.2-1.900l1.5-1.300c1.2-1 2.5-1.3 4-1.300H80a4 4 0 0 1 4 4V62a4 4 0 0 1-4 4H4a4 4 0 0 1-4-4z" fill="url(#gf)"/><path d="M.5 62a3.5 3.5 0 0 0 3.5 3.500h76a3.5 3.5 0 0 0 3.5-3.5" fill="none" stroke="#e3a826" stroke-width="1" opacity=".7"/></svg><div class="t" style="left:196px;width:600px;text-align:center;top:302.9px;transform:scaleX(0.708);transform-origin:50% 0"><span><span class="k">キャプチャ</span></span></div><svg class="b" style="left:574px;top:222px" width="84" height="66" viewBox="0 0 84 66"><path d="M0 5a5 5 0 0 1 5-5h21.5c2.6 0 4.2 1 5.6 3l2.4 3.400c1 1.4 2 2.1 4 2.100H79a5 5 0 0 1 5 5V46H0z" fill="url(#gt)"/><rect x="2" y="10.5" width="79.5" height="30" rx="1.5" fill="#24272c"/><rect x="14" y="13" width="55" height="1" fill="#85898f"/><rect x="25" y="22" width="49" height="3.8" fill="#8b8e94"/><rect x="2.5" y="26.5" width="10" height="2.4" fill="#a0a3a9"/><rect x="14" y="25.5" width="12" height="2.4" fill="#6f7379"/><rect x="78.5" y="25" width="2.5" height="8" fill="#6f7379"/><path d="M0 41.500a3 3 0 0 1 3-3h25c2.5 0 3.8-.6 5.2-1.800l2-1.700c1.2-1 2.5-1.5 4-1.500H81a3 3 0 0 1 3 3V62a4 4 0 0 1-4 4H4a4 4 0 0 1-4-4z" fill="url(#gf)"/><path d="M.5 62a3.5 3.5 0 0 0 3.5 3.500h76a3.5 3.5 0 0 0 3.5-3.5" fill="none" stroke="#e3a826" stroke-width="1" opacity=".7"/></svg><div class="t" style="left:316px;width:600px;text-align:center;top:302.9px;transform:scaleX(0.979);transform-origin:50% 0"><span>画面録画</span></div><div class="b" style="left:683px;top:207px;width:105px;height:131px;background:#cce4f7;border:1px solid #15181c;border-radius:2px"></div><svg class="b" style="left:688.5px;top:244.5px" width="92" height="60" viewBox="0 0 92 60"><rect width="92" height="60" rx="3" fill="#566170"/><rect x="9.5" y="1.5" width="73" height="57" fill="#26282d"/><rect x="2" y="5" width="5.5" height="4.6" rx=".8" fill="#fff"/><rect x="84.5" y="5" width="5.5" height="4.6" rx=".8" fill="#fff"/><rect x="2" y="14.1" width="5.5" height="4.6" rx=".8" fill="#fff"/><rect x="84.5" y="14.1" width="5.5" height="4.6" rx=".8" fill="#fff"/><rect x="2" y="23.2" width="5.5" height="4.6" rx=".8" fill="#fff"/><rect x="84.5" y="23.2" width="5.5" height="4.6" rx=".8" fill="#fff"/><rect x="2" y="32.3" width="5.5" height="4.6" rx=".8" fill="#fff"/><rect x="84.5" y="32.3" width="5.5" height="4.6" rx=".8" fill="#fff"/><rect x="2" y="41.4" width="5.5" height="4.6" rx=".8" fill="#fff"/><rect x="84.5" y="41.4" width="5.5" height="4.6" rx=".8" fill="#fff"/><rect x="2" y="50.5" width="5.5" height="4.6" rx=".8" fill="#fff"/><rect x="84.5" y="50.5" width="5.5" height="4.6" rx=".8" fill="#fff"/><rect x="19" y="4.5" width="56" height="1.2" fill="#9a9da3" opacity=".8"/><rect x="30" y="14" width="47" height="3.8" fill="#8b8e94"/><rect x="26" y="16.5" width="52" height="2.2" fill="#7a7d83"/><rect x="10.5" y="18.5" width="7" height="2.4" fill="#9a9da3"/><rect x="18.5" y="18" width="12" height="2.4" fill="#6f7379"/><rect x="10" y="31.5" width="72" height="2.5" fill="#15161a"/><rect x="17" y="32" width="10" height="1.3" fill="#a8abb0"/><rect x="51" y="32" width="4" height="1.3" fill="#a8abb0"/><rect x="10" y="36" width="72" height="17.5" fill="#34363b"/><rect x="10.5" y="38" width="19" height="15" fill="#4a2a30" opacity=".85"/><rect x="11" y="54" width="70" height="3.2" fill="#e6e9ee"/></svg><div class="t" style="left:435px;width:600px;text-align:center;top:303.7px;letter-spacing:-0.39px"><span>2025-08-15</span></div><div class="t" style="left:435px;width:600px;text-align:center;top:318.7px;letter-spacing:-0.17px"><span>13-11-51.mkv</span></div><div class="b" style="left:213px;top:1049px;width:710px;height:31px;background:#fff"></div><div class="t" style="left:227.5px;top:1051.4px;color:#222;transform:scaleX(0.894);transform-origin:0 0">3 個<span class="k">の</span>項目</div><div class="t" style="left:303.75px;top:1051.9px;color:#222;transform:scaleX(0.944);transform-origin:0 0">1 個<span class="k">の</span>項目<span class="k">を</span>選択  35.1 MB</div><svg class="b" style="left:880px;top:1055.5px" width="10" height="8" viewBox="0 0 10 8"><path d="M0 .6h10M0 3.600h10M0 6.600h10" stroke="#333" stroke-width="1"/></svg><div class="b" style="left:897px;top:1049px;width:22px;height:22px;background:#e0f0f4;border:1px solid #1e7f95"></div><div class="b" style="left:903px;top:1056px;width:11px;height:12px;background:#fff;border:1.200px solid #333"></div></div></div><div class="b" style="left:0px;top:1064px;width:1920px;height:16px;background:#e1e2e6;border-top:1px solid #ececf0"></div><svg class="b" style="left:20px;top:1070px" width="20" height="12" viewBox="0 0 20 12"><ellipse cx="8" cy="9" rx="8" ry="5" fill="#7fb2e8"/></svg><div class="b" style="left:29px;top:1068.5px;width:17px;height:17px;background:#cf3a2a;border-radius:9px"></div><div class="t" style="left:-262.5px;width:600px;text-align:center;top:1069px;font-size:11px;color:#fff;font-weight:700"><span>8</span></div><div class="t" style="left:50px;top:1071.5px;color:#222;letter-spacing:-0.52px">34°C</div><div class="b" style="left:573px;top:1077px;width:10.5px;height:4px;background:#2f9be8"></div><div class="b" style="left:585px;top:1077px;width:10.5px;height:4px;background:#1f8be0"></div><div class="b" style="left:612px;top:1071px;width:214px;height:32px;background:#f3f3f6;border-radius:16px;border:1px solid #e9e9ee"></div><div class="b" style="left:847px;top:1077px;width:18px;height:4px;background:#fbfbfd;border-radius:2px 2px 0 0"></div><div class="b" style="left:887px;top:1076px;width:16px;height:5px;background:#2a7fd6;border-radius:5px 5px 0 0"></div><div class="b" style="left:921px;top:1068px;width:34px;height:14px;background:#eef0f3;border-radius:4px;border:1px solid #f6f6f8"></div><div class="b" style="left:929px;top:1077px;width:9px;height:4px;background:#e8a20c;border-radius:2px 2px 0 0"></div><div class="b" style="left:937px;top:1078.5px;width:13px;height:3px;background:#f7c64a"></div><div class="b" style="left:976px;top:1076px;width:18px;height:18px;background:#e34133;border-radius:9px"></div><svg class="b" style="left:1021px;top:1075px" width="16" height="6" viewBox="0 0 16 6"><path d="M0 6L8 .5 16 6z" fill="#1f6fc8"/></svg><div class="b" style="left:1066px;top:1077px;width:13px;height:4px;background:#f3f8fc;border:1.500px solid #35b5e8;border-bottom:none"></div><div class="b" style="left:1107px;top:1076px;width:20px;height:20px;background:#2fc3c9;border-radius:10px"></div><div class="b" style="left:1152px;top:1076.5px;width:16px;height:16px;background:#5a5fd6;border-radius:8px"></div><div class="b" style="left:1165.5px;top:1069px;width:10px;height:10px;background:#e5484d;border-radius:5px"></div><div class="b" style="left:1169px;top:1073px;width:3px;height:6px;background:#fff;border-radius:1.500px"></div><div class="b" style="left:1196px;top:1076px;width:18px;height:18px;background:#fdfdfd;border-radius:9px"></div><div class="b" style="left:1237px;top:1076px;width:24px;height:6px;background:#1b7a9e;border-radius:1px"></div><div class="b" style="left:1281px;top:1076px;width:14px;height:5px;background:#fafafa;border-radius:2px"></div><div class="b" style="left:1283px;top:1076.5px;width:2.5px;height:4px;background:#d4521b"></div><div class="b" style="left:1287px;top:1076.5px;width:2.5px;height:4px;background:#d4521b"></div><div class="b" style="left:1291px;top:1076.5px;width:2px;height:4px;background:#d4521b"></div><div class="b" style="left:1329px;top:1077px;width:16px;height:16px;background:#1e1e22;border-radius:8px"></div><div class="t" style="left:1852px;top:1071.5px;color:#222;letter-spacing:-1.34px">13:13</div><svg class="b" style="left:1575px;top:0.5px" width="14" height="22" viewBox="0 0 14 22"><path d="M1 1v16l4-4 3 7 2.5-1-3-7h5.5z" fill="#fff" stroke="#222" stroke-width="1.2" stroke-linejoin="round"/></svg></div></div><div class="b" style="left:4px;top:746px;width:1912px;height:44px;background:#272a33;border-radius:4px"></div><div class="t" style="left:10.3px;top:758.7px;font-size:13px;color:#fff;transform:scaleX(0.797);transform-origin:0 0"><span class="k">ソースが</span>選択<span class="k">されていません</span></div><div class="dk" style="left:0;top:794px;width:300px;height:252px"><div class="dt"></div></div><div class="t" style="left:8.5px;top:797.4px;font-size:13px;color:#fff;font-weight:500;transform:scaleX(0.738);transform-origin:0 0"><span class="k">シーン</span></div><div class="b" style="left:4px;top:821px;width:292px;height:28px;background:#284cb8;border-radius:4px"></div><div class="t" style="left:11px;top:825.4px;font-size:13px;color:#fff;transform:scaleX(0.712);transform-origin:0 0"><span class="k">シーン</span></div><div class="b" style="left:1px;top:1014px;width:298px;height:1px;background:#343741"></div><div class="b" style="left:10.5px;top:1029px;width:11px;height:2px;background:#fff"></div><div class="b" style="left:15px;top:1024.5px;width:2px;height:11px;background:#fff"></div><svg class="b" style="left:38px;top:1023px" width="12" height="14"><use href="#trash"/></svg><svg class="b" style="left:72px;top:1024px" width="12" height="12" viewBox="0 0 12 12"><defs><linearGradient id="fg" x1="0" x2="1"><stop offset="0" stop-color="#fff" stop-opacity="0"/><stop offset="1" stop-color="#fff"/></linearGradient></defs><rect x=".7" y=".7" width="10.6" height="10.6" rx="1" fill="none" stroke="#fff" stroke-width="1.4"/><rect x="2" y="2" width="3" height="8" fill="#fff"/><rect x="5" y="2" width="5" height="8" fill="url(#fg)"/></svg><svg class="b" style="left:105px;top:1026px" width="14" height="8" viewBox="0 0 14 8"><path d="M1.5 6.5L7 1.5l5.5 5" fill="none" stroke="#fff" stroke-width="1.6" stroke-linecap="round" stroke-linejoin="round"/></svg><svg class="b" style="left:133px;top:1026px" width="14" height="8" viewBox="0 0 14 8"><path d="M1.5 1.5L7 6.5l5.5-5" fill="none" stroke="#fff" stroke-width="1.6" stroke-linecap="round" stroke-linejoin="round"/></svg><div class="dk" style="left:304px;top:794px;width:300px;height:252px"><div class="dt"></div></div><div class="dk" style="left:608px;top:794px;width:618px;height:252px"><div class="dt"></div></div><svg class="b" style="left:1208px;top:802px" width="10" height="10"><use href="#flt"/></svg><div class="mx"><div class="mxi"><div class="t" style="left:604.7px;width:600px;text-align:right;top:822.5px;font-size:13px;color:#a3a6ad;letter-spacing:-0.36px"><span>0.0 dB</span></div><div class="b" style="left:700px;top:844px;width:365px;height:7px;background:#1f7a1f"></div><div class="b" style="left:1065px;top:844px;width:77px;height:7px;background:#7d6416"></div><div class="b" style="left:1142px;top:844px;width:63px;height:7px;background:#7d1a22"></div><div class="b" style="left:700px;top:852px;width:365px;height:7px;background:#1f7a1f"></div><div class="b" style="left:1065px;top:852px;width:77px;height:7px;background:#7d6416"></div><div class="b" style="left:1142px;top:852px;width:63px;height:7px;background:#7d1a22"></div><div class="b" style="left:1204.5px;top:859px;width:1px;height:3.5px;background:#c8c8c8"></div><div class="t" style="left:605.5px;width:600px;text-align:right;top:857px;font-size:10px;color:#e2e2e2"><span>0</span></div><div class="b" style="left:1169.5px;top:859px;width:1px;height:3.5px;background:#c8c8c8"></div><div class="t" style="left:869.5px;width:600px;text-align:center;top:857px;font-size:10px;color:#e2e2e2;letter-spacing:-.6px"><span>-5</span></div><div class="b" style="left:1134.5px;top:859px;width:1px;height:3.5px;background:#c8c8c8"></div><div class="t" style="left:834.5px;width:600px;text-align:center;top:857px;font-size:10px;color:#e2e2e2;letter-spacing:-.6px"><span>-10</span></div><div class="b" style="left:1099.5px;top:859px;width:1px;height:3.5px;background:#c8c8c8"></div><div class="t" style="left:799.5px;width:600px;text-align:center;top:857px;font-size:10px;color:#e2e2e2;letter-spacing:-.6px"><span>-15</span></div><div class="b" style="left:1064.5px;top:859px;width:1px;height:3.5px;background:#c8c8c8"></div><div class="t" style="left:764.5px;width:600px;text-align:center;top:857px;font-size:10px;color:#e2e2e2;letter-spacing:-.6px"><span>-20</span></div><div class="b" style="left:1029.5px;top:859px;width:1px;height:3.5px;background:#c8c8c8"></div><div class="t" style="left:729.5px;width:600px;text-align:center;top:857px;font-size:10px;color:#e2e2e2;letter-spacing:-.6px"><span>-25</span></div><div class="b" style="left:994.5px;top:859px;width:1px;height:3.5px;background:#c8c8c8"></div><div class="t" style="left:694.5px;width:600px;text-align:center;top:857px;font-size:10px;color:#e2e2e2;letter-spacing:-.6px"><span>-30</span></div><div class="b" style="left:959.5px;top:859px;width:1px;height:3.5px;background:#c8c8c8"></div><div class="t" style="left:659.5px;width:600px;text-align:center;top:857px;font-size:10px;color:#e2e2e2;letter-spacing:-.6px"><span>-35</span></div><div class="b" style="left:924.5px;top:859px;width:1px;height:3.5px;background:#c8c8c8"></div><div class="t" style="left:624.5px;width:600px;text-align:center;top:857px;font-size:10px;color:#e2e2e2;letter-spacing:-.6px"><span>-40</span></div><div class="b" style="left:889.5px;top:859px;width:1px;height:3.5px;background:#c8c8c8"></div><div class="t" style="left:589.5px;width:600px;text-align:center;top:857px;font-size:10px;color:#e2e2e2;letter-spacing:-.6px"><span>-45</span></div><div class="b" style="left:854.5px;top:859px;width:1px;height:3.5px;background:#c8c8c8"></div><div class="t" style="left:554.5px;width:600px;text-align:center;top:857px;font-size:10px;color:#e2e2e2;letter-spacing:-.6px"><span>-50</span></div><div class="b" style="left:819.5px;top:859px;width:1px;height:3.5px;background:#c8c8c8"></div><div class="t" style="left:519.5px;width:600px;text-align:center;top:857px;font-size:10px;color:#e2e2e2;letter-spacing:-.6px"><span>-55</span></div><div class="b" style="left:784.5px;top:859px;width:1px;height:3.5px;background:#c8c8c8"></div><div class="t" style="left:484.5px;width:600px;text-align:center;top:857px;font-size:10px;color:#e2e2e2;letter-spacing:-.6px"><span>-60</span></div><div class="b" style="left:937.5px;top:877px;width:1px;height:12px;background:#6d717c"></div><div class="b" style="left:984.2px;top:877px;width:1px;height:12px;background:#6d717c"></div><div class="b" style="left:1054.2px;top:877px;width:1px;height:12px;background:#6d717c"></div><div class="b" style="left:700px;top:881px;width:495px;height:4px;background:#5169d1;border-radius:2px"></div><div class="b" style="left:1185px;top:878px;width:20px;height:10px;background:#fff;border-radius:5px"></div><div class="b" style="left:600px;top:898px;width:613px;height:1px;background:#343741"></div><div class="t" style="left:604.7px;width:600px;text-align:right;top:901.7px;font-size:13px;color:#a3a6ad;letter-spacing:-0.36px"><span>0.0 dB</span></div><div class="b" style="left:700px;top:923px;width:365px;height:7px;background:#1f7a1f"></div><div class="b" style="left:1065px;top:923px;width:77px;height:7px;background:#7d6416"></div><div class="b" style="left:1142px;top:923px;width:63px;height:7px;background:#7d1a22"></div><div class="b" style="left:1204.5px;top:930px;width:1px;height:3.5px;background:#c8c8c8"></div><div class="t" style="left:605.5px;width:600px;text-align:right;top:927.7px;font-size:10px;color:#e2e2e2"><span>0</span></div><div class="b" style="left:1169.5px;top:930px;width:1px;height:3.5px;background:#c8c8c8"></div><div class="t" style="left:869.5px;width:600px;text-align:center;top:927.7px;font-size:10px;color:#e2e2e2;letter-spacing:-.6px"><span>-5</span></div><div class="b" style="left:1134.5px;top:930px;width:1px;height:3.5px;background:#c8c8c8"></div><div class="t" style="left:834.5px;width:600px;text-align:center;top:927.7px;font-size:10px;color:#e2e2e2;letter-spacing:-.6px"><span>-10</span></div><div class="b" style="left:1099.5px;top:930px;width:1px;height:3.5px;background:#c8c8c8"></div><div class="t" style="left:799.5px;width:600px;text-align:center;top:927.7px;font-size:10px;color:#e2e2e2;letter-spacing:-.6px"><span>-15</span></div><div class="b" style="left:1064.5px;top:930px;width:1px;height:3.5px;background:#c8c8c8"></div><div class="t" style="left:764.5px;width:600px;text-align:center;top:927.7px;font-size:10px;color:#e2e2e2;letter-spacing:-.6px"><span>-20</span></div><div class="b" style="left:1029.5px;top:930px;width:1px;height:3.5px;background:#c8c8c8"></div><div class="t" style="left:729.5px;width:600px;text-align:center;top:927.7px;font-size:10px;color:#e2e2e2;letter-spacing:-.6px"><span>-25</span></div><div class="b" style="left:994.5px;top:930px;width:1px;height:3.5px;background:#c8c8c8"></div><div class="t" style="left:694.5px;width:600px;text-align:center;top:927.7px;font-size:10px;color:#e2e2e2;letter-spacing:-.6px"><span>-30</span></div><div class="b" style="left:959.5px;top:930px;width:1px;height:3.5px;background:#c8c8c8"></div><div class="t" style="left:659.5px;width:600px;text-align:center;top:927.7px;font-size:10px;color:#e2e2e2;letter-spacing:-.6px"><span>-35</span></div><div class="b" style="left:924.5px;top:930px;width:1px;height:3.5px;background:#c8c8c8"></div><div class="t" style="left:624.5px;width:600px;text-align:center;top:927.7px;font-size:10px;color:#e2e2e2;letter-spacing:-.6px"><span>-40</span></div><div class="b" style="left:889.5px;top:930px;width:1px;height:3.5px;background:#c8c8c8"></div><div class="t" style="left:589.5px;width:600px;text-align:center;top:927.7px;font-size:10px;color:#e2e2e2;letter-spacing:-.6px"><span>-45</span></div><div class="b" style="left:854.5px;top:930px;width:1px;height:3.5px;background:#c8c8c8"></div><div class="t" style="left:554.5px;width:600px;text-align:center;top:927.7px;font-size:10px;color:#e2e2e2;letter-spacing:-.6px"><span>-50</span></div><div class="b" style="left:819.5px;top:930px;width:1px;height:3.5px;background:#c8c8c8"></div><div class="t" style="left:519.5px;width:600px;text-align:center;top:927.7px;font-size:10px;color:#e2e2e2;letter-spacing:-.6px"><span>-55</span></div><div class="b" style="left:784.5px;top:930px;width:1px;height:3.5px;background:#c8c8c8"></div><div class="t" style="left:484.5px;width:600px;text-align:center;top:927.7px;font-size:10px;color:#e2e2e2;letter-spacing:-.6px"><span>-60</span></div><div class="b" style="left:937.5px;top:956px;width:1px;height:12px;background:#6d717c"></div><div class="b" style="left:984.2px;top:956px;width:1px;height:12px;background:#6d717c"></div><div class="b" style="left:1054.2px;top:956px;width:1px;height:12px;background:#6d717c"></div><div class="b" style="left:700px;top:960px;width:495px;height:4px;background:#5169d1;border-radius:2px"></div><div class="b" style="left:1185px;top:957px;width:20px;height:10px;background:#fff;border-radius:5px"></div><div class="b" style="left:600px;top:977px;width:613px;height:1px;background:#343741"></div><div class="t" style="left:604.7px;width:600px;text-align:right;top:981px;font-size:13px;color:#a3a6ad;letter-spacing:-0.36px"><span>0.0 dB</span></div><div class="b" style="left:700px;top:1002px;width:365px;height:6.5px;background:#1f7a1f"></div><div class="b" style="left:1065px;top:1002px;width:77px;height:6.5px;background:#7d6416"></div><div class="b" style="left:1142px;top:1002px;width:63px;height:6.5px;background:#7d1a22"></div><div class="b" style="left:700px;top:1009px;width:365px;height:7px;background:#1f7a1f"></div><div class="b" style="left:1065px;top:1009px;width:77px;height:7px;background:#7d6416"></div><div class="b" style="left:1142px;top:1009px;width:63px;height:7px;background:#7d1a22"></div><div class="b" style="left:1091px;top:1002px;width:3px;height:6.5px;background:#f3bb33"></div><div class="b" style="left:1091px;top:1009px;width:3px;height:6px;background:#f3bb33"></div></div></div><div class="b" style="left:1215.5px;top:824px;width:5.5px;height:151px;background:#3c404d;border-radius:3px"></div><div class="dk" style="left:1229px;top:794px;width:342px;height:252px"><div class="dt"></div></div><div class="t" style="left:1237.8px;top:797.4px;font-size:13px;color:#fff;font-weight:500;transform:scaleX(0.767);transform-origin:0 0"><span class="k">シーントランジション</span></div><svg class="b" style="left:1553px;top:802px" width="10" height="10"><use href="#flt"/></svg><div class="btn" style="left:1234px;top:826px;width:331px;height:32px"></div><div class="b" style="left:1541px;top:826px;width:1px;height:32px;background:#2f323c"></div><svg class="b" style="left:1548.9px;top:839.5px" width="9" height="5" viewBox="0 0 9 5"><path d="M0 0h9L4.5 5z" fill="#fff"/></svg><div class="t" style="left:1243.4px;top:832.4px;font-size:13px;color:#fff;transform:scaleX(0.685);transform-origin:0 0"><span class="k">フェード</span></div><div class="t" style="left:1234.6px;top:868.4px;font-size:13px;color:#fff;transform:scaleX(0.969);transform-origin:0 0">期間</div><div class="btn" style="left:1264px;top:862px;width:301px;height:32px"></div><div class="b" style="left:1541px;top:862px;width:1px;height:32px;background:#2f323c"></div><div class="b" style="left:1541px;top:878px;width:24px;height:1px;background:#2f323c"></div><svg class="b" style="left:1549.4px;top:868.1px" width="8" height="5" viewBox="0 0 8 5"><path d="M.7 4.3L4 1l3.3 3.3" fill="none" stroke="#fff" stroke-width="1.2" stroke-linecap="round" stroke-linejoin="round"/></svg><svg class="b" style="left:1549.4px;top:883.5px" width="8" height="5" viewBox="0 0 8 5"><path d="M.7 .7L4 4l3.3-3.3" fill="none" stroke="#fff" stroke-width="1.2" stroke-linecap="round" stroke-linejoin="round"/></svg><div class="t" style="left:1279px;top:868.5px;font-size:13px;color:#fff;letter-spacing:-0.12px">300 ms</div><div class="btn" style="left:1479px;top:896.5px;width:26px;height:27px;background:#30333e"></div><div class="b" style="left:1485.5px;top:909px;width:13px;height:2px;background:#fff"></div><div class="b" style="left:1491px;top:903.5px;width:2px;height:13px;background:#fff"></div><svg class="b" style="left:1515px;top:902px" width="14" height="16"><use href="#trash"/></svg><div class="b" style="left:1550.3px;top:902.3px;width:3.4px;height:3.4px;background:#fff;border-radius:2px"></div><div class="b" style="left:1550.3px;top:908.3px;width:3.4px;height:3.4px;background:#fff;border-radius:2px"></div><div class="b" style="left:1550.3px;top:914.3px;width:3.4px;height:3.4px;background:#fff;border-radius:2px"></div><div class="dk" style="left:1574px;top:794px;width:346px;height:252px"><div class="dt"></div></div><div class="t" style="left:1582.5px;top:797.4px;font-size:13px;color:#fff;font-weight:500;transform:scaleX(0.727);transform-origin:0 0"><span class="k">コントロール</span></div><svg class="b" style="left:1903px;top:802px" width="10" height="10"><use href="#flt"/></svg><div class="btn" style="left:1580.5px;top:826px;width:333px;height:32px"></div><div class="t" style="left:1447px;width:600px;text-align:center;top:832.4px;font-size:13px;color:#fff;transform:scaleX(0.984);transform-origin:50% 0"><span>配信開始</span></div><div class="btn" style="left:1580.5px;top:862px;width:333px;height:32px"></div><div class="t" style="left:1447px;width:600px;text-align:center;top:868.4px;font-size:13px;color:#fff;transform:scaleX(0.984);transform-origin:50% 0"><span>録画開始</span></div><div class="btn" style="left:1580.5px;top:898px;width:296.5px;height:32px"></div><div class="t" style="left:1428.75px;width:600px;text-align:center;top:904.4px;font-size:13px;color:#fff;transform:scaleX(0.876);transform-origin:50% 0"><span>仮想<span class="k">カメラ</span>開始</span></div><div class="btn" style="left:1580.5px;top:934px;width:333px;height:32px"></div><div class="t" style="left:1447px;width:600px;text-align:center;top:940.4px;font-size:13px;color:#fff;transform:scaleX(0.754);transform-origin:50% 0"><span><span class="k">スタジオモード</span></span></div><div class="btn" style="left:1580.5px;top:970px;width:333px;height:32px"></div><div class="t" style="left:1447px;width:600px;text-align:center;top:976.4px;font-size:13px;color:#fff;transform:scaleX(0.961);transform-origin:50% 0"><span>設定</span></div><div class="btn" style="left:1881px;top:898px;width:32.5px;height:32px"></div><svg class="b" style="left:1889px;top:906px" width="16" height="16" viewBox="0 0 16 16"><g fill="#fff"><circle cx="8" cy="8" r="5.2"/><rect x="6.5" y="0.6" width="3" height="4" rx=".6" transform="rotate(0 8 8)"/><rect x="6.5" y="0.6" width="3" height="4" rx=".6" transform="rotate(45 8 8)"/><rect x="6.5" y="0.6" width="3" height="4" rx=".6" transform="rotate(90 8 8)"/><rect x="6.5" y="0.6" width="3" height="4" rx=".6" transform="rotate(135 8 8)"/><rect x="6.5" y="0.6" width="3" height="4" rx=".6" transform="rotate(180 8 8)"/><rect x="6.5" y="0.6" width="3" height="4" rx=".6" transform="rotate(225 8 8)"/><rect x="6.5" y="0.6" width="3" height="4" rx=".6" transform="rotate(270 8 8)"/><rect x="6.5" y="0.6" width="3" height="4" rx=".6" transform="rotate(315 8 8)"/></g><circle cx="8" cy="8" r="2.6" fill="#3c404d"/></svg><div class="b" style="left:0px;top:1050px;width:1920px;height:30px;background:#272a33;border-top:1px solid #343741"></div><div class="b" style="left:1526px;top:1051px;width:1px;height:29px;background:#343741"></div><div class="b" style="left:1556px;top:1051px;width:1px;height:29px;background:#343741"></div><div class="b" style="left:1641px;top:1051px;width:1px;height:29px;background:#343741"></div><div class="b" style="left:1726px;top:1051px;width:1px;height:29px;background:#343741"></div><div class="b" style="left:1800px;top:1051px;width:1px;height:29px;background:#343741"></div><div class="b" style="left:1541px;top:1061px;width:2px;height:6px;background:#5a5d66"></div><div class="b" style="left:1544.5px;top:1058px;width:2px;height:9px;background:#5a5d66"></div><svg class="b" style="left:1564px;top:1058px" width="14" height="14" viewBox="0 0 14 14"><circle cx="7" cy="7" r="2" fill="#5a5d66"/><path d="M3.5 3.5a5 5 0 0 0 0 7M10.5 3.5a5 5 0 0 1 0 7" fill="none" stroke="#5a5d66" stroke-width="1.3"/></svg><div class="b" style="left:1650px;top:1058px;width:13px;height:13px;background:#5a5d66;border-radius:7px"></div><div class="t" style="left:1587px;top:1055.5px;font-size:12.5px;color:#6d7079;letter-spacing:-0.36px">00:00:00</div><div class="t" style="left:1672px;top:1055.5px;font-size:12.5px;color:#6d7079;letter-spacing:-0.36px">00:00:00</div><div class="t" style="left:1735px;top:1055.5px;font-size:12.5px;color:#e8e8ea;letter-spacing:-0.57px">CPU: 0.4%</div><div class="t" style="left:1808px;top:1055.5px;font-size:12.5px;color:#e8e8ea;letter-spacing:-0.17px">30.00 / 30.00 FPS</div><div class="ex"><div class="exi"><div class="b" style="left:213px;top:66px;width:710px;height:38.5px;background:linear-gradient(90deg,#d3e3ea,#c8deea 40%,#c6dfe9)"></div><div class="b" style="left:221px;top:73px;width:240px;height:31.5px;background:#eef4f9;border-radius:8px 8px 0 0"></div><div class="b" style="left:213px;top:96.5px;width:8px;height:8px;background:radial-gradient(circle at 0 0,rgba(238,244,249,0) 7.500px,#eef4f9 8px)"></div><div class="b" style="left:461px;top:96.5px;width:8px;height:8px;background:radial-gradient(circle at 100% 0,rgba(238,244,249,0) 7.500px,#eef4f9 8px)"></div><div class="b" style="left:213px;top:104.5px;width:710px;height:48.5px;background:linear-gradient(90deg,#eef4f9,#eaf3f8 60%,#e3f0f5)"></div><div class="b" style="left:213px;top:153px;width:710px;height:1px;background:#c2d2db"></div><svg class="b" style="left:231px;top:81.5px" width="14" height="15.5" viewBox="0 0 14 15.5"><rect width="14" height="15.5" rx="1.5" fill="#8d45d6"/><rect x="0" y="0" width="14" height="7" rx="1.5" fill="#a15be6" opacity=".6"/><g fill="#3b1a6e"><rect x="1.2" y="2" width="1.6" height="1.8"/><rect x="1.2" y="6.8" width="1.6" height="1.8"/><rect x="1.2" y="11.6" width="1.6" height="1.8"/><rect x="11.2" y="2" width="1.6" height="1.8"/><rect x="11.2" y="6.8" width="1.6" height="1.8"/><rect x="11.2" y="11.6" width="1.6" height="1.8"/></g><path d="M4.8 4.300l5.6 3.5-5.6 3.500z" fill="#fff"/></svg><div class="t" style="left:256px;top:80.4px;transform:scaleX(0.751);transform-origin:0 0"><span class="k">ビデオ</span></div><svg class="b" style="left:434.9px;top:84.25px" width="9" height="9" viewBox="0 0 9 9"><path d="M.5 .5l8 8M8.5 .5l-8 8" stroke="#1b1b1b" stroke-width="1.1" stroke-linecap="round"/></svg><svg class="b" style="left:478px;top:84.25px" width="11" height="11" viewBox="0 0 11 11"><path d="M5.5 .5v10M.5 5.500h10" stroke="#1b1b1b" stroke-width="1.1" stroke-linecap="round"/></svg><svg class="b" style="left:803.5px;top:75px" width="11" height="10" viewBox="0 0 11 10"><path d="M.5 5.500h10" stroke="#111" stroke-width="1.1"/></svg><svg class="b" style="left:848.5px;top:75px" width="11" height="11" viewBox="0 0 11 11"><rect x=".6" y=".6" width="9.3" height="9.3" rx="1.2" fill="none" stroke="#111" stroke-width="1.1"/></svg><svg class="b" style="left:895px;top:75px" width="11" height="11" viewBox="0 0 11 11"><path d="M.5 .5l9.5 9.500M10 .5L.5 10" stroke="#111" stroke-width="1.1" stroke-linecap="round"/></svg><svg class="b" style="left:233.5px;top:123px" width="13" height="11" viewBox="0 0 13 11"><path d="M12.5 5.500H1M5.8 .7L1 5.500l4.8 4.8" fill="none" stroke="#a9afb4" stroke-width="1.1" stroke-linecap="round" stroke-linejoin="round"/></svg><svg class="b" style="left:281.5px;top:123px" width="13" height="11" viewBox="0 0 13 11"><path d="M.5 5.500H12M7.2 .7L12 5.5 7.2 10.3" fill="none" stroke="#a9afb4" stroke-width="1.1" stroke-linecap="round" stroke-linejoin="round"/></svg><svg class="b" style="left:329.6px;top:122px" width="12" height="13" viewBox="0 0 12 13"><path d="M6 12.500V1M1.2 5.800L6 1l4.8 4.8" fill="none" stroke="#2a2a2a" stroke-width="1.1" stroke-linecap="round" stroke-linejoin="round"/></svg><svg class="b" style="left:377.25px;top:122px" width="13" height="13" viewBox="0 0 13 13"><path d="M11.7 6.500a5.2 5.2 0 1 1-1.7-3.9" fill="none" stroke="#2a2a2a" stroke-width="1.1" stroke-linecap="round"/><path d="M10.3 .6v2.300H8" fill="none" stroke="#2a2a2a" stroke-width="1.1" stroke-linecap="round" stroke-linejoin="round"/></svg><div class="b" style="left:415px;top:115px;width:349px;height:30px;background:linear-gradient(90deg,#fbfdfe,#f6fafc);border-radius:4px"></div><svg class="b" style="left:427.5px;top:121px" width="15" height="14" viewBox="0 0 15 14"><rect x=".6" y=".6" width="13.8" height="9.8" rx="1.6" fill="none" stroke="#4a4a4a" stroke-width="1.1"/><path d="M4 13h7M5.5 10.500v2.500M9.5 10.500v2.5" stroke="#8a8a8a" stroke-width="1"/></svg><svg class="b" style="left:462px;top:123px" width="7" height="11" viewBox="0 0 7 11"><path d="M1.2 1L5.6 5.5 1.2 10" fill="none" stroke="#3a3a3a" stroke-width="1.3" stroke-linecap="round" stroke-linejoin="round"/></svg><div class="t" style="left:488px;top:118.9px;font-size:14px;transform:scaleX(0.667);transform-origin:0 0"><span class="k">ビデオ</span></div><svg class="b" style="left:536px;top:123px" width="7" height="11" viewBox="0 0 7 11"><path d="M1.2 1L5.6 5.5 1.2 10" fill="none" stroke="#3a3a3a" stroke-width="1.3" stroke-linecap="round" stroke-linejoin="round"/></svg><div class="b" style="left:776px;top:115px;width:136px;height:30px;background:#f4f9fb;border-radius:4px"></div><div class="t" style="left:791px;top:119.4px;font-size:14px;color:#6a6a6a;transform:scaleX(0.807);transform-origin:0 0"><span class="k">ビデオの</span>検索</div><svg class="b" style="left:886.75px;top:123px" width="12" height="12" viewBox="0 0 12 12"><circle cx="4.8" cy="4.8" r="3.9" fill="none" stroke="#444" stroke-width="1.1"/><path d="M7.7 7.700l3.6 3.6" stroke="#444" stroke-width="1.1" stroke-linecap="round"/></svg><div class="b" style="left:213px;top:154px;width:710px;height:46px;background:#fff"></div><div class="b" style="left:213px;top:200px;width:710px;height:1px;background:#e3e3e3"></div><svg class="b" style="left:230.5px;top:169.5px" width="16" height="16" viewBox="0 0 16 16"><circle cx="8" cy="8" r="7.2" fill="none" stroke="#555" stroke-width="1"/><path d="M8 4.600v6.800M4.6 8h6.8" stroke="#1779c4" stroke-width="1.1" stroke-linecap="round"/></svg><div class="t" style="left:255px;top:169.4px;transform:scaleX(1.000);transform-origin:0 0">新規作成</div><svg class="b" style="left:308.5px;top:176px" width="7" height="4.5" viewBox="0 0 7 4.5"><path d="M.6 .6L3.5 3.6 6.4 .6" fill="none" stroke="#8a8a8a" stroke-width="1" stroke-linecap="round" stroke-linejoin="round"/></svg><div class="b" style="left:332.5px;top:165px;width:1px;height:26px;background:#e6e6e6"></div><svg class="b" style="left:351.25px;top:169.5px" width="15" height="17" viewBox="0 0 15 17"><path d="M3.3 .6l6 10M11.7 .6l-6 10" stroke="#444" stroke-width="1" stroke-linecap="round"/><circle cx="3.6" cy="13.3" r="2.5" fill="none" stroke="#1a80c7" stroke-width="1.1"/><circle cx="11.4" cy="13.3" r="2.5" fill="none" stroke="#1a80c7" stroke-width="1.1"/></svg><svg class="b" style="left:399.5px;top:170px" width="15" height="16" viewBox="0 0 15 16"><path d="M3.5 4.200H2.600A2 2 0 0 0 .6 6.200v6.600a2 2 0 0 0 2 2h5a2 2 0 0 0 2-2v-.5" fill="none" stroke="#444" stroke-width="1"/><rect x="4.6" y=".6" width="9.5" height="11" rx="2" fill="#fff" stroke="#1a80c7" stroke-width="1.1"/></svg><svg class="b" style="left:447.5px;top:169.5px" width="15" height="17" viewBox="0 0 15 17"><path d="M4 2.500H2.600a2 2 0 0 0-2 2v9.500a2 2 0 0 0 2 2H5M10 2.500h1.400a2 2 0 0 1 2 2V6" fill="none" stroke="#444" stroke-width="1"/><rect x="4" y=".6" width="6" height="3.2" rx="1.2" fill="#fff" stroke="#444" stroke-width="1"/><rect x="6.6" y="6.6" width="7.8" height="9.8" rx="1.6" fill="#fff" stroke="#1a80c7" stroke-width="1.1"/></svg><svg class="b" style="left:494.5px;top:169.5px" width="17" height="17" viewBox="0 0 17 17"><path d="M10 3.300H2.600a2 2 0 0 0-2 2v6.400a2 2 0 0 0 2 2H10M14.5 3.300a2 2 0 0 1 2 2v6.400a2 2 0 0 1-2 2" fill="none" stroke="#444" stroke-width="1"/><path d="M12.3 .6v15.800M10.3 .6h4M10.3 16.400h4" stroke="#1a80c7" stroke-width="1.1" stroke-linecap="round"/><path d="M3.5 11.300L5.9 5.500h.4l2.4 5.800M4.4 9.300h3.4" fill="none" stroke="#1a80c7" stroke-width="1"/></svg><svg class="b" style="left:543px;top:170px" width="16" height="16" viewBox="0 0 16 16"><path d="M6 3.300H2.800A2.2 2.2 0 0 0 .6 5.500v7.700a2.2 2.2 0 0 0 2.2 2.200h8a2.2 2.2 0 0 0 2.2-2.200V12" fill="none" stroke="#444" stroke-width="1"/><path d="M9.5 .8l5.7 5-5.7 5V8c-3-.2-5 .8-6.3 2.8.2-3.8 2.5-6.6 6.3-7z" fill="none" stroke="#1a80c7" stroke-width="1.1" stroke-linejoin="round"/></svg><svg class="b" style="left:591.5px;top:169.5px" width="15" height="17" viewBox="0 0 15 17"><path d="M.6 3.600h13.800M5 3.300a2.5 2.5 0 0 1 5 0M2.2 3.800l1 10.800a2 2 0 0 0 2 1.800h4.600a2 2 0 0 0 2-1.800l1-10.8" fill="none" stroke="#444" stroke-width="1" stroke-linecap="round"/><path d="M6 7v5.500M9 7v5.5" stroke="#444" stroke-width="1" stroke-linecap="round"/></svg><div class="b" style="left:625.5px;top:165px;width:1px;height:26px;background:#e6e6e6"></div><svg class="b" style="left:642px;top:170.5px" width="16" height="15" viewBox="0 0 16 15"><path d="M4 14V1M.8 4.200L4 1l3.2 3.2" fill="none" stroke="#444" stroke-width="1" stroke-linecap="round" stroke-linejoin="round"/><path d="M11.5 1v13M8.3 10.800l3.2 3.2 3.2-3.2" fill="none" stroke="#1a80c7" stroke-width="1.1" stroke-linecap="round" stroke-linejoin="round"/></svg><div class="t" style="left:666.5px;top:169.4px;transform:scaleX(0.860);transform-origin:0 0">並<span class="k">べ</span>替<span class="k">え</span></div><svg class="b" style="left:715.5px;top:176px" width="7" height="4.5" viewBox="0 0 7 4.5"><path d="M.6 .6L3.5 3.6 6.4 .6" fill="none" stroke="#8a8a8a" stroke-width="1" stroke-linecap="round" stroke-linejoin="round"/></svg><div class="b" style="left:752.05px;top:177.3px;width:2.4px;height:2.4px;background:#222;border-radius:2px"></div><div class="b" style="left:757.55px;top:177.3px;width:2.4px;height:2.4px;background:#222;border-radius:2px"></div><div class="b" style="left:763.05px;top:177.3px;width:2.4px;height:2.4px;background:#222;border-radius:2px"></div><svg class="b" style="left:853px;top:172px" width="16" height="12" viewBox="0 0 16 12"><rect x=".6" y=".6" width="14.8" height="10.8" rx="2.2" fill="none" stroke="#444" stroke-width="1"/><path d="M9.6 .6h3.600a2.2 2.2 0 0 1 2.2 2.200v6.400a2.2 2.2 0 0 1-2.2 2.200H9.600z" fill="#e2f1fb" stroke="#1a80c7" stroke-width="1.1"/><path d="M11.3 4h2.400M11.3 6h2.400M11.3 8h2.4" stroke="#1a80c7" stroke-width=".9"/></svg><div class="t" style="left:878px;top:169.4px;transform:scaleX(0.937);transform-origin:0 0">詳細</div><div class="b" style="left:409px;top:201px;width:16.5px;height:848px;background:#f0f0f0"></div><div class="b" style="left:426px;top:201px;width:1px;height:848px;background:#ededed"></div><div class="b" style="left:416px;top:333px;width:2px;height:260px;background:#8b8b8b;border-radius:1px"></div><div class="b" style="left:213px;top:201px;width:196px;height:848px;overflow:hidden"><div class="b" style="left:-213px;top:-201px"><svg class="b" style="left:234.5px;top:211.5px" width="7" height="11" viewBox="0 0 7 11"><path d="M1.2 1L5.6 5.5 1.2 10" fill="none" stroke="#6a6a6a" stroke-width="1.3" stroke-linecap="round" stroke-linejoin="round"/></svg><svg class="b" style="left:255px;top:209px" width="16" height="16"><use href="#fd"/></svg><div class="t" style="left:276px;top:206.5px;letter-spacing:-0.09px">Kano Yukinori</div><svg class="b" style="left:234.5px;top:243.5px" width="7" height="11" viewBox="0 0 7 11"><path d="M1.2 1L5.6 5.5 1.2 10" fill="none" stroke="#6a6a6a" stroke-width="1.3" stroke-linecap="round" stroke-linejoin="round"/></svg><svg class="b" style="left:255px;top:241px" width="16" height="16" viewBox="0 0 16 16"><rect x="0" y="1.5" width="16" height="11" rx="1" fill="url(#gpc)"/><rect x="7" y="12.5" width="2" height="2" fill="#8e9aa5"/><rect x="4.5" y="14.3" width="7" height="1.2" rx=".6" fill="#9aa6b0"/></svg><div class="t" style="left:276px;top:238.5px;letter-spacing:-1.78px">PC</div><svg class="b" style="left:234.5px;top:275.5px" width="7" height="11" viewBox="0 0 7 11"><path d="M1.2 1L5.6 5.5 1.2 10" fill="none" stroke="#6a6a6a" stroke-width="1.3" stroke-linecap="round" stroke-linejoin="round"/></svg><svg class="b" style="left:255px;top:272px" width="16" height="16"><use href="#fd"/></svg><div class="b" style="left:255px;top:286.5px;width:16px;height:1.8px;background:#2f9a8f"></div><div class="t" style="left:276px;top:270.9px;transform:scaleX(0.731);transform-origin:0 0"><span class="k">ライブラリ</span></div><svg class="b" style="left:234.5px;top:307.5px" width="7" height="11" viewBox="0 0 7 11"><path d="M1.2 1L5.6 5.5 1.2 10" fill="none" stroke="#6a6a6a" stroke-width="1.3" stroke-linecap="round" stroke-linejoin="round"/></svg><svg class="b" style="left:255px;top:305px" width="16" height="16" viewBox="0 0 16 16"><circle cx="8" cy="8" r="7.3" fill="#d9d9d9" stroke="#bdbdbd" stroke-width=".6"/><path d="M8 8L2.5 3.5A7.3 7.3 0 0 1 8 .7z" fill="#efefef"/><path d="M8 8l5.5 4.5A7.3 7.3 0 0 1 8 15.3z" fill="#c9c9c9"/><circle cx="8" cy="8" r="2.2" fill="#f6f6f6" stroke="#b0b0b0" stroke-width=".6"/></svg><div class="t" style="left:276px;top:302.9px;transform:scaleX(0.915);transform-origin:0 0">BD-RE <span class="k">ドライブ</span> (D:) MrPC2:</div><svg class="b" style="left:234.5px;top:339.5px" width="7" height="11" viewBox="0 0 7 11"><path d="M1.2 1L5.6 5.5 1.2 10" fill="none" stroke="#6a6a6a" stroke-width="1.3" stroke-linecap="round" stroke-linejoin="round"/></svg><svg class="b" style="left:255px;top:337px" width="16" height="16" viewBox="0 0 16 16"><rect width="16" height="16" fill="#000"/><rect x="2.2" y="2.2" width="11.6" height="11.6" fill="#fff"/><circle cx="8" cy="8" r="3.6" fill="#000"/><path d="M6 10l4-4" stroke="#fff" stroke-width="1.3"/></svg><div class="t" style="left:276px;top:334.5px;letter-spacing:-0.13px">Launchkey Mini (F:)</div><svg class="b" style="left:234.5px;top:371.5px" width="7" height="11" viewBox="0 0 7 11"><path d="M1.2 1L5.6 5.5 1.2 10" fill="none" stroke="#6a6a6a" stroke-width="1.3" stroke-linecap="round" stroke-linejoin="round"/></svg><svg class="b" style="left:255px;top:369px" width="16" height="16" viewBox="0 0 16 16"><rect x="2" y="4" width="13.5" height="8.5" rx=".8" fill="url(#gpc)"/><rect x="7.6" y="12.5" width="2" height="1.8" fill="#8e9aa5"/><rect x="5" y="14.2" width="7.5" height="1.2" rx=".6" fill="#9aa6b0"/><circle cx="4" cy="4.2" r="3.6" fill="#6fb7e6"/><path d="M1 3.2c1.5-.8 4-.6 6 .6M2.2 1.5c.5 1.8.6 3.8.2 5.8" fill="none" stroke="#2c78b8" stroke-width=".7"/></svg><div class="t" style="left:276px;top:366.9px;transform:scaleX(0.731);transform-origin:0 0"><span class="k">ネットワーク</span></div><svg class="b" style="left:234.5px;top:403.5px" width="7" height="11" viewBox="0 0 7 11"><path d="M1.2 1L5.6 5.5 1.2 10" fill="none" stroke="#6a6a6a" stroke-width="1.3" stroke-linecap="round" stroke-linejoin="round"/></svg><svg class="b" style="left:255px;top:401px" width="16" height="16" viewBox="0 0 16 16"><rect x="0" y="1.5" width="16" height="13" rx="1" fill="#2d8fdb"/><rect x="1.2" y="2.7" width="13.6" height="9" fill="#bfe3fa"/><circle cx="5.2" cy="7.3" r="2.6" fill="#2d8fdb"/><path d="M5.2 7.3V4.7A2.6 2.6 0 0 1 7.8 7.3z" fill="#f5c33b"/><path d="M9.5 5h4M9.5 7.2h4M9.5 9.4h3" stroke="#2d6fb0" stroke-width="1"/><path d="M2 13.2h12" stroke="#cfeaff" stroke-width=".8"/></svg><div class="t" style="left:276px;top:398.9px;transform:scaleX(0.741);transform-origin:0 0"><span class="k">コントロール</span> <span class="k">パネル</span></div><svg class="b" style="left:255px;top:433px" width="16" height="16" viewBox="0 0 16 16"><path d="M3.2 2.8h9.6l-1 11.2a1 1 0 0 1-1 .9H5.2a1 1 0 0 1-1-.9z" fill="#eef6fb" stroke="#9fb4c2" stroke-width=".8"/><path d="M2.8 2.8h10.4" stroke="#8ea6b6" stroke-width="1"/><path d="M6 7.2l2-1.8 2 1.8M10.3 9.5L9.2 11.6H6.8L5.7 9.5" fill="none" stroke="#2a86d8" stroke-width="1.1" stroke-linejoin="round"/></svg><div class="t" style="left:276px;top:430.9px;transform:scaleX(0.821);transform-origin:0 0"><span class="k">ごみ</span>箱</div><svg class="b" style="left:234.5px;top:467.5px" width="7" height="11" viewBox="0 0 7 11"><path d="M1.2 1L5.6 5.5 1.2 10" fill="none" stroke="#6a6a6a" stroke-width="1.3" stroke-linecap="round" stroke-linejoin="round"/></svg><svg class="b" style="left:255px;top:465px" width="16" height="16"><use href="#fd"/></svg><div class="t" style="left:276px;top:462.5px;letter-spacing:0.29px">Audio</div><svg class="b" style="left:255px;top:497px" width="16" height="16"><use href="#fd"/></svg><div class="t" style="left:276px;top:494.5px;letter-spacing:-0.41px">Auto Saves</div><svg class="b" style="left:255px;top:529px" width="16" height="16"><use href="#fd"/></svg><div class="t" style="left:276px;top:526.5px;letter-spacing:0.17px">chatgpt-site</div><svg class="b" style="left:234.5px;top:563.5px" width="7" height="11" viewBox="0 0 7 11"><path d="M1.2 1L5.6 5.5 1.2 10" fill="none" stroke="#6a6a6a" stroke-width="1.3" stroke-linecap="round" stroke-linejoin="round"/></svg><svg class="b" style="left:255px;top:561px" width="16" height="16"><use href="#fd"/></svg><div class="t" style="left:276px;top:558.5px;letter-spacing:-0.31px">cubase</div><svg class="b" style="left:255px;top:593px" width="16" height="16"><use href="#fd"/></svg><div class="t" style="left:276px;top:590.5px;letter-spacing:-0.12px">Export</div><svg class="b" style="left:255px;top:625px" width="16" height="16"><use href="#fd"/></svg><div class="t" style="left:276px;top:622.5px;letter-spacing:-0.18px">Gemini</div><svg class="b" style="left:255px;top:657px" width="16" height="16"><use href="#fd"/></svg><div class="t" style="left:276px;top:654.5px;letter-spacing:-0.43px">Images</div><svg class="b" style="left:234.5px;top:691.5px" width="7" height="11" viewBox="0 0 7 11"><path d="M1.2 1L5.6 5.5 1.2 10" fill="none" stroke="#6a6a6a" stroke-width="1.3" stroke-linecap="round" stroke-linejoin="round"/></svg><svg class="b" style="left:255px;top:689px" width="16" height="16"><use href="#fd"/></svg><div class="t" style="left:276px;top:686.5px;letter-spacing:0.37px">jijii</div><svg class="b" style="left:234.5px;top:723.5px" width="7" height="11" viewBox="0 0 7 11"><path d="M1.2 1L5.6 5.5 1.2 10" fill="none" stroke="#6a6a6a" stroke-width="1.3" stroke-linecap="round" stroke-linejoin="round"/></svg><svg class="b" style="left:255px;top:721px" width="16" height="16"><use href="#fd"/></svg><div class="t" style="left:276px;top:718.5px;letter-spacing:0.07px">malib</div><svg class="b" style="left:234.5px;top:755.5px" width="7" height="11" viewBox="0 0 7 11"><path d="M1.2 1L5.6 5.5 1.2 10" fill="none" stroke="#6a6a6a" stroke-width="1.3" stroke-linecap="round" stroke-linejoin="round"/></svg><svg class="b" style="left:255px;top:753px" width="16" height="16"><use href="#fd"/></svg><div class="t" style="left:276px;top:750.5px;letter-spacing:0.05px">maniuta</div><svg class="b" style="left:234.5px;top:787.5px" width="7" height="11" viewBox="0 0 7 11"><path d="M1.2 1L5.6 5.5 1.2 10" fill="none" stroke="#6a6a6a" stroke-width="1.3" stroke-linecap="round" stroke-linejoin="round"/></svg><svg class="b" style="left:255px;top:785px" width="16" height="16"><use href="#fd"/></svg><div class="t" style="left:276px;top:782.5px;letter-spacing:-0.15px">midi_Telepathy</div><svg class="b" style="left:255px;top:817px" width="16" height="16"><use href="#fd"/></svg><div class="t" style="left:276px;top:814.5px;letter-spacing:0.33px">Mixdown</div><svg class="b" style="left:234.5px;top:851.5px" width="7" height="11" viewBox="0 0 7 11"><path d="M1.2 1L5.6 5.5 1.2 10" fill="none" stroke="#6a6a6a" stroke-width="1.3" stroke-linecap="round" stroke-linejoin="round"/></svg><svg class="b" style="left:255px;top:849px" width="16" height="16"><use href="#fd"/></svg><div class="t" style="left:276px;top:846.5px;letter-spacing:-0.82px">NKSC_PARAM</div><svg class="b" style="left:232.5px;top:886px" width="10" height="7" viewBox="0 0 10 7"><path d="M1 1.2L5 5.3 9 1.2" fill="none" stroke="#1b1b1b" stroke-width="1.5" stroke-linecap="round" stroke-linejoin="round"/></svg><svg class="b" style="left:255px;top:881px" width="16" height="16"><use href="#fd"/></svg><div class="t" style="left:276px;top:878.5px;letter-spacing:-0.42px">Telepathy_Inst_205BPM</div><svg class="b" style="left:242.5px;top:915.5px" width="7" height="11" viewBox="0 0 7 11"><path d="M1.2 1L5.6 5.5 1.2 10" fill="none" stroke="#6a6a6a" stroke-width="1.3" stroke-linecap="round" stroke-linejoin="round"/></svg><svg class="b" style="left:263px;top:913px" width="16" height="16"><use href="#fd"/></svg><div class="t" style="left:284px;top:910.5px;letter-spacing:-0.98px">__MACOSX</div><svg class="b" style="left:263px;top:945px" width="16" height="16"><use href="#fd"/></svg><div class="t" style="left:284px;top:942.5px;letter-spacing:-0.42px">Telepathy_Inst_205BPM</div><svg class="b" style="left:234.5px;top:979.5px" width="7" height="11" viewBox="0 0 7 11"><path d="M1.2 1L5.6 5.5 1.2 10" fill="none" stroke="#6a6a6a" stroke-width="1.3" stroke-linecap="round" stroke-linejoin="round"/></svg><svg class="b" style="left:255px;top:977px" width="16" height="16"><use href="#fd"/></svg><div class="t" style="left:276px;top:974.5px;letter-spacing:-0.42px">TimeTune</div><svg class="b" style="left:255px;top:1009px" width="16" height="16"><use href="#fd"/></svg><div class="t" style="left:276px;top:1006.5px;letter-spacing:-0.32px">Track Pictures</div><svg class="b" style="left:234.5px;top:1043.5px" width="7" height="11" viewBox="0 0 7 11"><path d="M1.2 1L5.6 5.5 1.2 10" fill="none" stroke="#6a6a6a" stroke-width="1.3" stroke-linecap="round" stroke-linejoin="round"/></svg><svg class="b" style="left:255px;top:1041px" width="16" height="16"><use href="#fd"/></svg><div class="t" style="left:276px;top:1038.5px;letter-spacing:0.09px">yuto</div></div></div><svg class="b" style="left:453px;top:222px" width="84" height="66" viewBox="0 0 84 66"><path d="M0 5a5 5 0 0 1 5-5h21.5c2.6 0 4.2 1 5.6 3l2.4 3.400c1 1.4 2 2.1 4 2.100H79a5 5 0 0 1 5 5V46H0z" fill="url(#gt)"/><path d="M0 16a3.5 3.5 0 0 1 3.5-3.500h23.500c2.5 0 3.8-.7 5.2-1.900l1.5-1.300c1.2-1 2.5-1.3 4-1.300H80a4 4 0 0 1 4 4V62a4 4 0 0 1-4 4H4a4 4 0 0 1-4-4z" fill="url(#gf)"/><path d="M.5 62a3.5 3.5 0 0 0 3.5 3.500h76a3.5 3.5 0 0 0 3.5-3.5" fill="none" stroke="#e3a826" stroke-width="1" opacity=".7"/></svg><div class="t" style="left:196px;width:600px;text-align:center;top:302.9px;transform:scaleX(0.708);transform-origin:50% 0"><span><span class="k">キャプチャ</span></span></div><svg class="b" style="left:574px;top:222px" width="84" height="66" viewBox="0 0 84 66"><path d="M0 5a5 5 0 0 1 5-5h21.5c2.6 0 4.2 1 5.6 3l2.4 3.400c1 1.4 2 2.1 4 2.100H79a5 5 0 0 1 5 5V46H0z" fill="url(#gt)"/><rect x="2" y="10.5" width="79.5" height="30" rx="1.5" fill="#24272c"/><rect x="14" y="13" width="55" height="1" fill="#85898f"/><rect x="25" y="22" width="49" height="3.8" fill="#8b8e94"/><rect x="2.5" y="26.5" width="10" height="2.4" fill="#a0a3a9"/><rect x="14" y="25.5" width="12" height="2.4" fill="#6f7379"/><rect x="78.5" y="25" width="2.5" height="8" fill="#6f7379"/><path d="M0 41.500a3 3 0 0 1 3-3h25c2.5 0 3.8-.6 5.2-1.800l2-1.700c1.2-1 2.5-1.5 4-1.500H81a3 3 0 0 1 3 3V62a4 4 0 0 1-4 4H4a4 4 0 0 1-4-4z" fill="url(#gf)"/><path d="M.5 62a3.5 3.5 0 0 0 3.5 3.500h76a3.5 3.5 0 0 0 3.5-3.5" fill="none" stroke="#e3a826" stroke-width="1" opacity=".7"/></svg><div class="t" style="left:316px;width:600px;text-align:center;top:302.9px;transform:scaleX(0.979);transform-origin:50% 0"><span>画面録画</span></div><div class="b" style="left:683px;top:207px;width:105px;height:131px;background:#cce4f7;border:1px solid #15181c;border-radius:2px"></div><svg class="b" style="left:688.5px;top:244.5px" width="92" height="60" viewBox="0 0 92 60"><rect width="92" height="60" rx="3" fill="#566170"/><rect x="9.5" y="1.5" width="73" height="57" fill="#26282d"/><rect x="2" y="5" width="5.5" height="4.6" rx=".8" fill="#fff"/><rect x="84.5" y="5" width="5.5" height="4.6" rx=".8" fill="#fff"/><rect x="2" y="14.1" width="5.5" height="4.6" rx=".8" fill="#fff"/><rect x="84.5" y="14.1" width="5.5" height="4.6" rx=".8" fill="#fff"/><rect x="2" y="23.2" width="5.5" height="4.6" rx=".8" fill="#fff"/><rect x="84.5" y="23.2" width="5.5" height="4.6" rx=".8" fill="#fff"/><rect x="2" y="32.3" width="5.5" height="4.6" rx=".8" fill="#fff"/><rect x="84.5" y="32.3" width="5.5" height="4.6" rx=".8" fill="#fff"/><rect x="2" y="41.4" width="5.5" height="4.6" rx=".8" fill="#fff"/><rect x="84.5" y="41.4" width="5.5" height="4.6" rx=".8" fill="#fff"/><rect x="2" y="50.5" width="5.5" height="4.6" rx=".8" fill="#fff"/><rect x="84.5" y="50.5" width="5.5" height="4.6" rx=".8" fill="#fff"/><rect x="19" y="4.5" width="56" height="1.2" fill="#9a9da3" opacity=".8"/><rect x="30" y="14" width="47" height="3.8" fill="#8b8e94"/><rect x="26" y="16.5" width="52" height="2.2" fill="#7a7d83"/><rect x="10.5" y="18.5" width="7" height="2.4" fill="#9a9da3"/><rect x="18.5" y="18" width="12" height="2.4" fill="#6f7379"/><rect x="10" y="31.5" width="72" height="2.5" fill="#15161a"/><rect x="17" y="32" width="10" height="1.3" fill="#a8abb0"/><rect x="51" y="32" width="4" height="1.3" fill="#a8abb0"/><rect x="10" y="36" width="72" height="17.5" fill="#34363b"/><rect x="10.5" y="38" width="19" height="15" fill="#4a2a30" opacity=".85"/><rect x="11" y="54" width="70" height="3.2" fill="#e6e9ee"/></svg><div class="t" style="left:435px;width:600px;text-align:center;top:303.7px;letter-spacing:-0.39px"><span>2025-08-15</span></div><div class="t" style="left:435px;width:600px;text-align:center;top:318.7px;letter-spacing:-0.17px"><span>13-11-51.mkv</span></div><div class="b" style="left:213px;top:1049px;width:710px;height:31px;background:#fff"></div><div class="t" style="left:227.5px;top:1051.4px;color:#222;transform:scaleX(0.894);transform-origin:0 0">3 個<span class="k">の</span>項目</div><div class="t" style="left:303.75px;top:1051.9px;color:#222;transform:scaleX(0.944);transform-origin:0 0">1 個<span class="k">の</span>項目<span class="k">を</span>選択  35.1 MB</div><svg class="b" style="left:880px;top:1055.5px" width="10" height="8" viewBox="0 0 10 8"><path d="M0 .6h10M0 3.600h10M0 6.600h10" stroke="#333" stroke-width="1"/></svg><div class="b" style="left:897px;top:1049px;width:22px;height:22px;background:#e0f0f4;border:1px solid #1e7f95"></div><div class="b" style="left:903px;top:1056px;width:11px;height:12px;background:#fff;border:1.200px solid #333"></div></div></div><div class="b" style="left:0px;top:1064px;width:1920px;height:16px;background:#e1e2e6;border-top:1px solid #ececf0"></div><svg class="b" style="left:20px;top:1070px" width="20" height="12" viewBox="0 0 20 12"><ellipse cx="8" cy="9" rx="8" ry="5" fill="#7fb2e8"/></svg><div class="b" style="left:29px;top:1068.5px;width:17px;height:17px;background:#cf3a2a;border-radius:9px"></div><div class="t" style="left:-262.5px;width:600px;text-align:center;top:1069px;font-size:11px;color:#fff;font-weight:700"><span>8</span></div><div class="t" style="left:50px;top:1071.5px;color:#222;letter-spacing:-0.52px">34°C</div><div class="b" style="left:573px;top:1077px;width:10.5px;height:4px;background:#2f9be8"></div><div class="b" style="left:585px;top:1077px;width:10.5px;height:4px;background:#1f8be0"></div><div class="b" style="left:612px;top:1071px;width:214px;height:32px;background:#f3f3f6;border-radius:16px;border:1px solid #e9e9ee"></div><div class="b" style="left:847px;top:1077px;width:18px;height:4px;background:#fbfbfd;border-radius:2px 2px 0 0"></div><div class="b" style="left:887px;top:1076px;width:16px;height:5px;background:#2a7fd6;border-radius:5px 5px 0 0"></div><div class="b" style="left:921px;top:1068px;width:34px;height:14px;background:#eef0f3;border-radius:4px;border:1px solid #f6f6f8"></div><div class="b" style="left:929px;top:1077px;width:9px;height:4px;background:#e8a20c;border-radius:2px 2px 0 0"></div><div class="b" style="left:937px;top:1078.5px;width:13px;height:3px;background:#f7c64a"></div><div class="b" style="left:976px;top:1076px;width:18px;height:18px;background:#e34133;border-radius:9px"></div><svg class="b" style="left:1021px;top:1075px" width="16" height="6" viewBox="0 0 16 6"><path d="M0 6L8 .5 16 6z" fill="#1f6fc8"/></svg><div class="b" style="left:1066px;top:1077px;width:13px;height:4px;background:#f3f8fc;border:1.500px solid #35b5e8;border-bottom:none"></div><div class="b" style="left:1107px;top:1076px;width:20px;height:20px;background:#2fc3c9;border-radius:10px"></div><div class="b" style="left:1152px;top:1076.5px;width:16px;height:16px;background:#5a5fd6;border-radius:8px"></div><div class="b" style="left:1165.5px;top:1069px;width:10px;height:10px;background:#e5484d;border-radius:5px"></div><div class="b" style="left:1169px;top:1073px;width:3px;height:6px;background:#fff;border-radius:1.500px"></div><div class="b" style="left:1196px;top:1076px;width:18px;height:18px;background:#fdfdfd;border-radius:9px"></div><div class="b" style="left:1237px;top:1076px;width:24px;height:6px;background:#1b7a9e;border-radius:1px"></div><div class="b" style="left:1281px;top:1076px;width:14px;height:5px;background:#fafafa;border-radius:2px"></div><div class="b" style="left:1283px;top:1076.5px;width:2.5px;height:4px;background:#d4521b"></div><div class="b" style="left:1287px;top:1076.5px;width:2.5px;height:4px;background:#d4521b"></div><div class="b" style="left:1291px;top:1076.5px;width:2px;height:4px;background:#d4521b"></div><div class="b" style="left:1329px;top:1077px;width:16px;height:16px;background:#1e1e22;border-radius:8px"></div><div class="t" style="left:1852px;top:1071.5px;color:#222;letter-spacing:-1.34px">13:13</div><svg class="b" style="left:1575px;top:0.5px" width="14" height="22" viewBox="0 0 14 22"><path d="M1 1v16l4-4 3 7 2.5-1-3-7h5.5z" fill="#fff" stroke="#222" stroke-width="1.2" stroke-linejoin="round"/></svg></div></div><div class="b" style="left:4px;top:746px;width:1912px;height:44px;background:#272a33;border-radius:4px"></div><div class="t" style="left:10.3px;top:758.7px;font-size:13px;color:#fff;transform:scaleX(0.797);transform-origin:0 0"><span class="k">ソースが</span>選択<span class="k">されていません</span></div><div class="dk" style="left:0;top:794px;width:300px;height:252px"><div class="dt"></div></div><div class="t" style="left:8.5px;top:797.4px;font-size:13px;color:#fff;font-weight:500;transform:scaleX(0.738);transform-origin:0 0"><span class="k">シーン</span></div><div class="b" style="left:4px;top:821px;width:292px;height:28px;background:#284cb8;border-radius:4px"></div><div class="t" style="left:11px;top:825.4px;font-size:13px;color:#fff;transform:scaleX(0.712);transform-origin:0 0"><span class="k">シーン</span></div><div class="b" style="left:1px;top:1014px;width:298px;height:1px;background:#343741"></div><div class="b" style="left:10.5px;top:1029px;width:11px;height:2px;background:#fff"></div><div class="b" style="left:15px;top:1024.5px;width:2px;height:11px;background:#fff"></div><svg class="b" style="left:38px;top:1023px" width="12" height="14"><use href="#trash"/></svg><svg class="b" style="left:72px;top:1024px" width="12" height="12" viewBox="0 0 12 12"><defs><linearGradient id="fg" x1="0" x2="1"><stop offset="0" stop-color="#fff" stop-opacity="0"/><stop offset="1" stop-color="#fff"/></linearGradient></defs><rect x=".7" y=".7" width="10.6" height="10.6" rx="1" fill="none" stroke="#fff" stroke-width="1.4"/><rect x="2" y="2" width="3" height="8" fill="#fff"/><rect x="5" y="2" width="5" height="8" fill="url(#fg)"/></svg><svg class="b" style="left:105px;top:1026px" width="14" height="8" viewBox="0 0 14 8"><path d="M1.5 6.5L7 1.5l5.5 5" fill="none" stroke="#fff" stroke-width="1.6" stroke-linecap="round" stroke-linejoin="round"/></svg><svg class="b" style="left:133px;top:1026px" width="14" height="8" viewBox="0 0 14 8"><path d="M1.5 1.5L7 6.5l5.5-5" fill="none" stroke="#fff" stroke-width="1.6" stroke-linecap="round" stroke-linejoin="round"/></svg><div class="dk" style="left:304px;top:794px;width:300px;height:252px"><div class="dt"></div></div><div class="dk" style="left:608px;top:794px;width:618px;height:252px"><div class="dt"></div></div><svg class="b" style="left:1208px;top:802px" width="10" height="10"><use href="#flt"/></svg><div class="mx"><div class="mxi"><div class="t" style="left:604.7px;width:600px;text-align:right;top:822.5px;font-size:13px;color:#a3a6ad;letter-spacing:-0.36px"><span>0.0 dB</span></div><div class="b" style="left:700px;top:844px;width:365px;height:7px;background:#1f7a1f"></div><div class="b" style="left:1065px;top:844px;width:77px;height:7px;background:#7d6416"></div><div class="b" style="left:1142px;top:844px;width:63px;height:7px;background:#7d1a22"></div><div class="b" style="left:700px;top:852px;width:365px;height:7px;background:#1f7a1f"></div><div class="b" style="left:1065px;top:852px;width:77px;height:7px;background:#7d6416"></div><div class="b" style="left:1142px;top:852px;width:63px;height:7px;background:#7d1a22"></div><div class="b" style="left:1204.5px;top:859px;width:1px;height:3.5px;background:#c8c8c8"></div><div class="t" style="left:605.5px;width:600px;text-align:right;top:857px;font-size:10px;color:#e2e2e2"><span>0</span></div><div class="b" style="left:1169.5px;top:859px;width:1px;height:3.5px;background:#c8c8c8"></div><div class="t" style="left:869.5px;width:600px;text-align:center;top:857px;font-size:10px;color:#e2e2e2;letter-spacing:-.6px"><span>-5</span></div><div class="b" style="left:1134.5px;top:859px;width:1px;height:3.5px;background:#c8c8c8"></div><div class="t" style="left:834.5px;width:600px;text-align:center;top:857px;font-size:10px;color:#e2e2e2;letter-spacing:-.6px"><span>-10</span></div><div class="b" style="left:1099.5px;top:859px;width:1px;height:3.5px;background:#c8c8c8"></div><div class="t" style="left:799.5px;width:600px;text-align:center;top:857px;font-size:10px;color:#e2e2e2;letter-spacing:-.6px"><span>-15</span></div><div class="b" style="left:1064.5px;top:859px;width:1px;height:3.5px;background:#c8c8c8"></div><div class="t" style="left:764.5px;width:600px;text-align:center;top:857px;font-size:10px;color:#e2e2e2;letter-spacing:-.6px"><span>-20</span></div><div class="b" style="left:1029.5px;top:859px;width:1px;height:3.5px;background:#c8c8c8"></div><div class="t" style="left:729.5px;width:600px;text-align:center;top:857px;font-size:10px;color:#e2e2e2;letter-spacing:-.6px"><span>-25</span></div><div class="b" style="left:994.5px;top:859px;width:1px;height:3.5px;background:#c8c8c8"></div><div class="t" style="left:694.5px;width:600px;text-align:center;top:857px;font-size:10px;color:#e2e2e2;letter-spacing:-.6px"><span>-30</span></div><div class="b" style="left:959.5px;top:859px;width:1px;height:3.5px;background:#c8c8c8"></div><div class="t" style="left:659.5px;width:600px;text-align:center;top:857px;font-size:10px;color:#e2e2e2;letter-spacing:-.6px"><span>-35</span></div><div class="b" style="left:924.5px;top:859px;width:1px;height:3.5px;background:#c8c8c8"></div><div class="t" style="left:624.5px;width:600px;text-align:center;top:857px;font-size:10px;color:#e2e2e2;letter-spacing:-.6px"><span>-40</span></div><div class="b" style="left:889.5px;top:859px;width:1px;height:3.5px;background:#c8c8c8"></div><div class="t" style="left:589.5px;width:600px;text-align:center;top:857px;font-size:10px;color:#e2e2e2;letter-spacing:-.6px"><span>-45</span></div><div class="b" style="left:854.5px;top:859px;width:1px;height:3.5px;background:#c8c8c8"></div><div class="t" style="left:554.5px;width:600px;text-align:center;top:857px;font-size:10px;color:#e2e2e2;letter-spacing:-.6px"><span>-50</span></div><div class="b" style="left:819.5px;top:859px;width:1px;height:3.5px;background:#c8c8c8"></div><div class="t" style="left:519.5px;width:600px;text-align:center;top:857px;font-size:10px;color:#e2e2e2;letter-spacing:-.6px"><span>-55</span></div><div class="b" style="left:784.5px;top:859px;width:1px;height:3.5px;background:#c8c8c8"></div><div class="t" style="left:484.5px;width:600px;text-align:center;top:857px;font-size:10px;color:#e2e2e2;letter-spacing:-.6px"><span>-60</span></div><div class="b" style="left:937.5px;top:877px;width:1px;height:12px;background:#6d717c"></div><div class="b" style="left:984.2px;top:877px;width:1px;height:12px;background:#6d717c"></div><div class="b" style="left:1054.2px;top:877px;width:1px;height:12px;background:#6d717c"></div><div class="b" style="left:700px;top:881px;width:495px;height:4px;background:#5169d1;border-radius:2px"></div><div class="b" style="left:1185px;top:878px;width:20px;height:10px;background:#fff;border-radius:5px"></div><div class="b" style="left:600px;top:898px;width:613px;height:1px;background:#343741"></div><div class="t" style="left:604.7px;width:600px;text-align:right;top:901.7px;font-size:13px;color:#a3a6ad;letter-spacing:-0.36px"><span>0.0 dB</span></div><div class="b" style="left:700px;top:923px;width:365px;height:7px;background:#1f7a1f"></div><div class="b" style="left:1065px;top:923px;width:77px;height:7px;background:#7d6416"></div><div class="b" style="left:1142px;top:923px;width:63px;height:7px;background:#7d1a22"></div><div class="b" style="left:1204.5px;top:930px;width:1px;height:3.5px;background:#c8c8c8"></div><div class="t" style="left:605.5px;width:600px;text-align:right;top:927.7px;font-size:10px;color:#e2e2e2"><span>0</span></div><div class="b" style="left:1169.5px;top:930px;width:1px;height:3.5px;background:#c8c8c8"></div><div class="t" style="left:869.5px;width:600px;text-align:center;top:927.7px;font-size:10px;color:#e2e2e2;letter-spacing:-.6px"><span>-5</span></div><div class="b" style="left:1134.5px;top:930px;width:1px;height:3.5px;background:#c8c8c8"></div><div class="t" style="left:834.5px;width:600px;text-align:center;top:927.7px;font-size:10px;color:#e2e2e2;letter-spacing:-.6px"><span>-10</span></div><div class="b" style="left:1099.5px;top:930px;width:1px;height:3.5px;background:#c8c8c8"></div><div class="t" style="left:799.5px;width:600px;text-align:center;top:927.7px;font-size:10px;color:#e2e2e2;letter-spacing:-.6px"><span>-15</span></div><div class="b" style="left:1064.5px;top:930px;width:1px;height:3.5px;background:#c8c8c8"></div><div class="t" style="left:764.5px;width:600px;text-align:center;top:927.7px;font-size:10px;color:#e2e2e2;letter-spacing:-.6px"><span>-20</span></div><div class="b" style="left:1029.5px;top:930px;width:1px;height:3.5px;background:#c8c8c8"></div><div class="t" style="left:729.5px;width:600px;text-align:center;top:927.7px;font-size:10px;color:#e2e2e2;letter-spacing:-.6px"><span>-25</span></div><div class="b" style="left:994.5px;top:930px;width:1px;height:3.5px;background:#c8c8c8"></div><div class="t" style="left:694.5px;width:600px;text-align:center;top:927.7px;font-size:10px;color:#e2e2e2;letter-spacing:-.6px"><span>-30</span></div><div class="b" style="left:959.5px;top:930px;width:1px;height:3.5px;background:#c8c8c8"></div><div class="t" style="left:659.5px;width:600px;text-align:center;top:927.7px;font-size:10px;color:#e2e2e2;letter-spacing:-.6px"><span>-35</span></div><div class="b" style="left:924.5px;top:930px;width:1px;height:3.5px;background:#c8c8c8"></div><div class="t" style="left:624.5px;width:600px;text-align:center;top:927.7px;font-size:10px;color:#e2e2e2;letter-spacing:-.6px"><span>-40</span></div><div class="b" style="left:889.5px;top:930px;width:1px;height:3.5px;background:#c8c8c8"></div><div class="t" style="left:589.5px;width:600px;text-align:center;top:927.7px;font-size:10px;color:#e2e2e2;letter-spacing:-.6px"><span>-45</span></div><div class="b" style="left:854.5px;top:930px;width:1px;height:3.5px;background:#c8c8c8"></div><div class="t" style="left:554.5px;width:600px;text-align:center;top:927.7px;font-size:10px;color:#e2e2e2;letter-spacing:-.6px"><span>-50</span></div><div class="b" style="left:819.5px;top:930px;width:1px;height:3.5px;background:#c8c8c8"></div><div class="t" style="left:519.5px;width:600px;text-align:center;top:927.7px;font-size:10px;color:#e2e2e2;letter-spacing:-.6px"><span>-55</span></div><div class="b" style="left:784.5px;top:930px;width:1px;height:3.5px;background:#c8c8c8"></div><div class="t" style="left:484.5px;width:600px;text-align:center;top:927.7px;font-size:10px;color:#e2e2e2;letter-spacing:-.6px"><span>-60</span></div><div class="b" style="left:937.5px;top:956px;width:1px;height:12px;background:#6d717c"></div><div class="b" style="left:984.2px;top:956px;width:1px;height:12px;background:#6d717c"></div><div class="b" style="left:1054.2px;top:956px;width:1px;height:12px;background:#6d717c"></div><div class="b" style="left:700px;top:960px;width:495px;height:4px;background:#5169d1;border-radius:2px"></div><div class="b" style="left:1185px;top:957px;width:20px;height:10px;background:#fff;border-radius:5px"></div><div class="b" style="left:600px;top:977px;width:613px;height:1px;background:#343741"></div><div class="t" style="left:604.7px;width:600px;text-align:right;top:981px;font-size:13px;color:#a3a6ad;letter-spacing:-0.36px"><span>0.0 dB</span></div><div class="b" style="left:700px;top:1002px;width:365px;height:6.5px;background:#1f7a1f"></div><div class="b" style="left:1065px;top:1002px;width:77px;height:6.5px;background:#7d6416"></div><div class="b" style="left:1142px;top:1002px;width:63px;height:6.5px;background:#7d1a22"></div><div class="b" style="left:700px;top:1009px;width:365px;height:7px;background:#1f7a1f"></div><div class="b" style="left:1065px;top:1009px;width:77px;height:7px;background:#7d6416"></div><div class="b" style="left:1142px;top:1009px;width:63px;height:7px;background:#7d1a22"></div><div class="b" style="left:1091px;top:1002px;width:3px;height:6.5px;background:#f3bb33"></div><div class="b" style="left:1091px;top:1009px;width:3px;height:6px;background:#f3bb33"></div></div></div><div class="b" style="left:1215.5px;top:824px;width:5.5px;height:151px;background:#3c404d;border-radius:3px"></div><div class="dk" style="left:1229px;top:794px;width:342px;height:252px"><div class="dt"></div></div><div class="t" style="left:1237.8px;top:797.4px;font-size:13px;color:#fff;font-weight:500;transform:scaleX(0.767);transform-origin:0 0"><span class="k">シーントランジション</span></div><svg class="b" style="left:1553px;top:802px" width="10" height="10"><use href="#flt"/></svg><div class="btn" style="left:1234px;top:826px;width:331px;height:32px"></div><div class="b" style="left:1541px;top:826px;width:1px;height:32px;background:#2f323c"></div><svg class="b" style="left:1548.9px;top:839.5px" width="9" height="5" viewBox="0 0 9 5"><path d="M0 0h9L4.5 5z" fill="#fff"/></svg><div class="t" style="left:1243.4px;top:832.4px;font-size:13px;color:#fff;transform:scaleX(0.685);transform-origin:0 0"><span class="k">フェード</span></div><div class="t" style="left:1234.6px;top:868.4px;font-size:13px;color:#fff;transform:scaleX(0.969);transform-origin:0 0">期間</div><div class="btn" style="left:1264px;top:862px;width:301px;height:32px"></div><div class="b" style="left:1541px;top:862px;width:1px;height:32px;background:#2f323c"></div><div class="b" style="left:1541px;top:878px;width:24px;height:1px;background:#2f323c"></div><svg class="b" style="left:1549.4px;top:868.1px" width="8" height="5" viewBox="0 0 8 5"><path d="M.7 4.3L4 1l3.3 3.3" fill="none" stroke="#fff" stroke-width="1.2" stroke-linecap="round" stroke-linejoin="round"/></svg><svg class="b" style="left:1549.4px;top:883.5px" width="8" height="5" viewBox="0 0 8 5"><path d="M.7 .7L4 4l3.3-3.3" fill="none" stroke="#fff" stroke-width="1.2" stroke-linecap="round" stroke-linejoin="round"/></svg><div class="t" style="left:1279px;top:868.5px;font-size:13px;color:#fff;letter-spacing:-0.12px">300 ms</div><div class="btn" style="left:1479px;top:896.5px;width:26px;height:27px;background:#30333e"></div><div class="b" style="left:1485.5px;top:909px;width:13px;height:2px;background:#fff"></div><div class="b" style="left:1491px;top:903.5px;width:2px;height:13px;background:#fff"></div><svg class="b" style="left:1515px;top:902px" width="14" height="16"><use href="#trash"/></svg><div class="b" style="left:1550.3px;top:902.3px;width:3.4px;height:3.4px;background:#fff;border-radius:2px"></div><div class="b" style="left:1550.3px;top:908.3px;width:3.4px;height:3.4px;background:#fff;border-radius:2px"></div><div class="b" style="left:1550.3px;top:914.3px;width:3.4px;height:3.4px;background:#fff;border-radius:2px"></div><div class="dk" style="left:1574px;top:794px;width:346px;height:252px"><div class="dt"></div></div><div class="t" style="left:1582.5px;top:797.4px;font-size:13px;color:#fff;font-weight:500;transform:scaleX(0.727);transform-origin:0 0"><span class="k">コントロール</span></div><svg class="b" style="left:1903px;top:802px" width="10" height="10"><use href="#flt"/></svg><div class="btn" style="left:1580.5px;top:826px;width:333px;height:32px"></div><div class="t" style="left:1447px;width:600px;text-align:center;top:832.4px;font-size:13px;color:#fff;transform:scaleX(0.984);transform-origin:50% 0"><span>配信開始</span></div><div class="btn" style="left:1580.5px;top:862px;width:333px;height:32px"></div><div class="t" style="left:1447px;width:600px;text-align:center;top:868.4px;font-size:13px;color:#fff;transform:scaleX(0.984);transform-origin:50% 0"><span>録画開始</span></div><div class="btn" style="left:1580.5px;top:898px;width:296.5px;height:32px"></div><div class="t" style="left:1428.75px;width:600px;text-align:center;top:904.4px;font-size:13px;color:#fff;transform:scaleX(0.876);transform-origin:50% 0"><span>仮想<span class="k">カメラ</span>開始</span></div><div class="btn" style="left:1580.5px;top:934px;width:333px;height:32px"></div><div class="t" style="left:1447px;width:600px;text-align:center;top:940.4px;font-size:13px;color:#fff;transform:scaleX(0.754);transform-origin:50% 0"><span><span class="k">スタジオモード</span></span></div><div class="btn" style="left:1580.5px;top:970px;width:333px;height:32px"></div><div class="t" style="left:1447px;width:600px;text-align:center;top:976.4px;font-size:13px;color:#fff;transform:scaleX(0.961);transform-origin:50% 0"><span>設定</span></div><div class="btn" style="left:1881px;top:898px;width:32.5px;height:32px"></div><svg class="b" style="left:1889px;top:906px" width="16" height="16" viewBox="0 0 16 16"><g fill="#fff"><circle cx="8" cy="8" r="5.2"/><rect x="6.5" y="0.6" width="3" height="4" rx=".6" transform="rotate(0 8 8)"/><rect x="6.5" y="0.6" width="3" height="4" rx=".6" transform="rotate(45 8 8)"/><rect x="6.5" y="0.6" width="3" height="4" rx=".6" transform="rotate(90 8 8)"/><rect x="6.5" y="0.6" width="3" height="4" rx=".6" transform="rotate(135 8 8)"/><rect x="6.5" y="0.6" width="3" height="4" rx=".6" transform="rotate(180 8 8)"/><rect x="6.5" y="0.6" width="3" height="4" rx=".6" transform="rotate(225 8 8)"/><rect x="6.5" y="0.6" width="3" height="4" rx=".6" transform="rotate(270 8 8)"/><rect x="6.5" y="0.6" width="3" height="4" rx=".6" transform="rotate(315 8 8)"/></g><circle cx="8" cy="8" r="2.6" fill="#3c404d"/></svg><div class="b" style="left:0px;top:1050px;width:1920px;height:30px;background:#272a33;border-top:1px solid #343741"></div><div class="b" style="left:1526px;top:1051px;width:1px;height:29px;background:#343741"></div><div class="b" style="left:1556px;top:1051px;width:1px;height:29px;background:#343741"></div><div class="b" style="left:1641px;top:1051px;width:1px;height:29px;background:#343741"></div><div class="b" style="left:1726px;top:1051px;width:1px;height:29px;background:#343741"></div><div class="b" style="left:1800px;top:1051px;width:1px;height:29px;background:#343741"></div><div class="b" style="left:1541px;top:1061px;width:2px;height:6px;background:#5a5d66"></div><div class="b" style="left:1544.5px;top:1058px;width:2px;height:9px;background:#5a5d66"></div><svg class="b" style="left:1564px;top:1058px" width="14" height="14" viewBox="0 0 14 14"><circle cx="7" cy="7" r="2" fill="#5a5d66"/><path d="M3.5 3.5a5 5 0 0 0 0 7M10.5 3.5a5 5 0 0 1 0 7" fill="none" stroke="#5a5d66" stroke-width="1.3"/></svg><div class="b" style="left:1650px;top:1058px;width:13px;height:13px;background:#5a5d66;border-radius:7px"></div><div class="t" style="left:1587px;top:1055.5px;font-size:12.5px;color:#6d7079;letter-spacing:-0.36px">00:00:00</div><div class="t" style="left:1672px;top:1055.5px;font-size:12.5px;color:#6d7079;letter-spacing:-0.36px">00:00:00</div><div class="t" style="left:1735px;top:1055.5px;font-size:12.5px;color:#e8e8ea;letter-spacing:-0.57px">CPU: 0.4%</div><div class="t" style="left:1808px;top:1055.5px;font-size:12.5px;color:#e8e8ea;letter-spacing:-0.17px">30.00 / 30.00 FPS</div><div class="ex"><div class="exi"><div class="b" style="left:213px;top:66px;width:710px;height:38.5px;background:linear-gradient(90deg,#d3e3ea,#c8deea 40%,#c6dfe9)"></div><div class="b" style="left:221px;top:73px;width:240px;height:31.5px;background:#eef4f9;border-radius:8px 8px 0 0"></div><div class="b" style="left:213px;top:96.5px;width:8px;height:8px;background:radial-gradient(circle at 0 0,rgba(238,244,249,0) 7.500px,#eef4f9 8px)"></div><div class="b" style="left:461px;top:96.5px;width:8px;height:8px;background:radial-gradient(circle at 100% 0,rgba(238,244,249,0) 7.500px,#eef4f9 8px)"></div><div class="b" style="left:213px;top:104.5px;width:710px;height:48.5px;background:linear-gradient(90deg,#eef4f9,#eaf3f8 60%,#e3f0f5)"></div><div class="b" style="left:213px;top:153px;width:710px;height:1px;background:#c2d2db"></div><svg class="b" style="left:231px;top:81.5px" width="14" height="15.5" viewBox="0 0 14 15.5"><rect width="14" height="15.5" rx="1.5" fill="#8d45d6"/><rect x="0" y="0" width="14" height="7" rx="1.5" fill="#a15be6" opacity=".6"/><g fill="#3b1a6e"><rect x="1.2" y="2" width="1.6" height="1.8"/><rect x="1.2" y="6.8" width="1.6" height="1.8"/><rect x="1.2" y="11.6" width="1.6" height="1.8"/><rect x="11.2" y="2" width="1.6" height="1.8"/><rect x="11.2" y="6.8" width="1.6" height="1.8"/><rect x="11.2" y="11.6" width="1.6" height="1.8"/></g><path d="M4.8 4.300l5.6 3.5-5.6 3.500z" fill="#fff"/></svg><div class="t" style="left:256px;top:80.4px;transform:scaleX(0.751);transform-origin:0 0"><span class="k">ビデオ</span></div><svg class="b" style="left:434.9px;top:84.25px" width="9" height="9" viewBox="0 0 9 9"><path d="M.5 .5l8 8M8.5 .5l-8 8" stroke="#1b1b1b" stroke-width="1.1" stroke-linecap="round"/></svg><svg class="b" style="left:478px;top:84.25px" width="11" height="11" viewBox="0 0 11 11"><path d="M5.5 .5v10M.5 5.500h10" stroke="#1b1b1b" stroke-width="1.1" stroke-linecap="round"/></svg><svg class="b" style="left:803.5px;top:75px" width="11" height="10" viewBox="0 0 11 10"><path d="M.5 5.500h10" stroke="#111" stroke-width="1.1"/></svg><svg class="b" style="left:848.5px;top:75px" width="11" height="11" viewBox="0 0 11 11"><rect x=".6" y=".6" width="9.3" height="9.3" rx="1.2" fill="none" stroke="#111" stroke-width="1.1"/></svg><svg class="b" style="left:895px;top:75px" width="11" height="11" viewBox="0 0 11 11"><path d="M.5 .5l9.5 9.500M10 .5L.5 10" stroke="#111" stroke-width="1.1" stroke-linecap="round"/></svg><svg class="b" style="left:233.5px;top:123px" width="13" height="11" viewBox="0 0 13 11"><path d="M12.5 5.500H1M5.8 .7L1 5.500l4.8 4.8" fill="none" stroke="#a9afb4" stroke-width="1.1" stroke-linecap="round" stroke-linejoin="round"/></svg><svg class="b" style="left:281.5px;top:123px" width="13" height="11" viewBox="0 0 13 11"><path d="M.5 5.500H12M7.2 .7L12 5.5 7.2 10.3" fill="none" stroke="#a9afb4" stroke-width="1.1" stroke-linecap="round" stroke-linejoin="round"/></svg><svg class="b" style="left:329.6px;top:122px" width="12" height="13" viewBox="0 0 12 13"><path d="M6 12.500V1M1.2 5.800L6 1l4.8 4.8" fill="none" stroke="#2a2a2a" stroke-width="1.1" stroke-linecap="round" stroke-linejoin="round"/></svg><svg class="b" style="left:377.25px;top:122px" width="13" height="13" viewBox="0 0 13 13"><path d="M11.7 6.500a5.2 5.2 0 1 1-1.7-3.9" fill="none" stroke="#2a2a2a" stroke-width="1.1" stroke-linecap="round"/><path d="M10.3 .6v2.300H8" fill="none" stroke="#2a2a2a" stroke-width="1.1" stroke-linecap="round" stroke-linejoin="round"/></svg><div class="b" style="left:415px;top:115px;width:349px;height:30px;background:linear-gradient(90deg,#fbfdfe,#f6fafc);border-radius:4px"></div><svg class="b" style="left:427.5px;top:121px" width="15" height="14" viewBox="0 0 15 14"><rect x=".6" y=".6" width="13.8" height="9.8" rx="1.6" fill="none" stroke="#4a4a4a" stroke-width="1.1"/><path d="M4 13h7M5.5 10.500v2.500M9.5 10.500v2.5" stroke="#8a8a8a" stroke-width="1"/></svg><svg class="b" style="left:462px;top:123px" width="7" height="11" viewBox="0 0 7 11"><path d="M1.2 1L5.6 5.5 1.2 10" fill="none" stroke="#3a3a3a" stroke-width="1.3" stroke-linecap="round" stroke-linejoin="round"/></svg><div class="t" style="left:488px;top:118.9px;font-size:14px;transform:scaleX(0.667);transform-origin:0 0"><span class="k">ビデオ</span></div><svg class="b" style="left:536px;top:123px" width="7" height="11" viewBox="0 0 7 11"><path d="M1.2 1L5.6 5.5 1.2 10" fill="none" stroke="#3a3a3a" stroke-width="1.3" stroke-linecap="round" stroke-linejoin="round"/></svg><div class="b" style="left:776px;top:115px;width:136px;height:30px;background:#f4f9fb;border-radius:4px"></div><div class="t" style="left:791px;top:119.4px;font-size:14px;color:#6a6a6a;transform:scaleX(0.807);transform-origin:0 0"><span class="k">ビデオの</span>検索</div><svg class="b" style="left:886.75px;top:123px" width="12" height="12" viewBox="0 0 12 12"><circle cx="4.8" cy="4.8" r="3.9" fill="none" stroke="#444" stroke-width="1.1"/><path d="M7.7 7.700l3.6 3.6" stroke="#444" stroke-width="1.1" stroke-linecap="round"/></svg><div class="b" style="left:213px;top:154px;width:710px;height:46px;background:#fff"></div><div class="b" style="left:213px;top:200px;width:710px;height:1px;background:#e3e3e3"></div><svg class="b" style="left:230.5px;top:169.5px" width="16" height="16" viewBox="0 0 16 16"><circle cx="8" cy="8" r="7.2" fill="none" stroke="#555" stroke-width="1"/><path d="M8 4.600v6.800M4.6 8h6.8" stroke="#1779c4" stroke-width="1.1" stroke-linecap="round"/></svg><div class="t" style="left:255px;top:169.4px;transform:scaleX(1.000);transform-origin:0 0">新規作成</div><svg class="b" style="left:308.5px;top:176px" width="7" height="4.5" viewBox="0 0 7 4.5"><path d="M.6 .6L3.5 3.6 6.4 .6" fill="none" stroke="#8a8a8a" stroke-width="1" stroke-linecap="round" stroke-linejoin="round"/></svg><div class="b" style="left:332.5px;top:165px;width:1px;height:26px;background:#e6e6e6"></div><svg class="b" style="left:351.25px;top:169.5px" width="15" height="17" viewBox="0 0 15 17"><path d="M3.3 .6l6 10M11.7 .6l-6 10" stroke="#444" stroke-width="1" stroke-linecap="round"/><circle cx="3.6" cy="13.3" r="2.5" fill="none" stroke="#1a80c7" stroke-width="1.1"/><circle cx="11.4" cy="13.3" r="2.5" fill="none" stroke="#1a80c7" stroke-width="1.1"/></svg><svg class="b" style="left:399.5px;top:170px" width="15" height="16" viewBox="0 0 15 16"><path d="M3.5 4.200H2.600A2 2 0 0 0 .6 6.200v6.600a2 2 0 0 0 2 2h5a2 2 0 0 0 2-2v-.5" fill="none" stroke="#444" stroke-width="1"/><rect x="4.6" y=".6" width="9.5" height="11" rx="2" fill="#fff" stroke="#1a80c7" stroke-width="1.1"/></svg><svg class="b" style="left:447.5px;top:169.5px" width="15" height="17" viewBox="0 0 15 17"><path d="M4 2.500H2.600a2 2 0 0 0-2 2v9.500a2 2 0 0 0 2 2H5M10 2.500h1.400a2 2 0 0 1 2 2V6" fill="none" stroke="#444" stroke-width="1"/><rect x="4" y=".6" width="6" height="3.2" rx="1.2" fill="#fff" stroke="#444" stroke-width="1"/><rect x="6.6" y="6.6" width="7.8" height="9.8" rx="1.6" fill="#fff" stroke="#1a80c7" stroke-width="1.1"/></svg><svg class="b" style="left:494.5px;top:169.5px" width="17" height="17" viewBox="0 0 17 17"><path d="M10 3.300H2.600a2 2 0 0 0-2 2v6.400a2 2 0 0 0 2 2H10M14.5 3.300a2 2 0 0 1 2 2v6.400a2 2 0 0 1-2 2" fill="none" stroke="#444" stroke-width="1"/><path d="M12.3 .6v15.800M10.3 .6h4M10.3 16.400h4" stroke="#1a80c7" stroke-width="1.1" stroke-linecap="round"/><path d="M3.5 11.300L5.9 5.500h.4l2.4 5.800M4.4 9.300h3.4" fill="none" stroke="#1a80c7" stroke-width="1"/></svg><svg class="b" style="left:543px;top:170px" width="16" height="16" viewBox="0 0 16 16"><path d="M6 3.300H2.800A2.2 2.2 0 0 0 .6 5.500v7.700a2.2 2.2 0 0 0 2.2 2.200h8a2.2 2.2 0 0 0 2.2-2.200V12" fill="none" stroke="#444" stroke-width="1"/><path d="M9.5 .8l5.7 5-5.7 5V8c-3-.2-5 .8-6.3 2.8.2-3.8 2.5-6.6 6.3-7z" fill="none" stroke="#1a80c7" stroke-width="1.1" stroke-linejoin="round"/></svg><svg class="b" style="left:591.5px;top:169.5px" width="15" height="17" viewBox="0 0 15 17"><path d="M.6 3.600h13.800M5 3.300a2.5 2.5 0 0 1 5 0M2.2 3.800l1 10.800a2 2 0 0 0 2 1.800h4.600a2 2 0 0 0 2-1.800l1-10.8" fill="none" stroke="#444" stroke-width="1" stroke-linecap="round"/><path d="M6 7v5.500M9 7v5.5" stroke="#444" stroke-width="1" stroke-linecap="round"/></svg><div class="b" style="left:625.5px;top:165px;width:1px;height:26px;background:#e6e6e6"></div><svg class="b" style="left:642px;top:170.5px" width="16" height="15" viewBox="0 0 16 15"><path d="M4 14V1M.8 4.200L4 1l3.2 3.2" fill="none" stroke="#444" stroke-width="1" stroke-linecap="round" stroke-linejoin="round"/><path d="M11.5 1v13M8.3 10.800l3.2 3.2 3.2-3.2" fill="none" stroke="#1a80c7" stroke-width="1.1" stroke-linecap="round" stroke-linejoin="round"/></svg><div class="t" style="left:666.5px;top:169.4px;transform:scaleX(0.860);transform-origin:0 0">並<span class="k">べ</span>替<span class="k">え</span></div><svg class="b" style="left:715.5px;top:176px" width="7" height="4.5" viewBox="0 0 7 4.5"><path d="M.6 .6L3.5 3.6 6.4 .6" fill="none" stroke="#8a8a8a" stroke-width="1" stroke-linecap="round" stroke-linejoin="round"/></svg><div class="b" style="left:752.05px;top:177.3px;width:2.4px;height:2.4px;background:#222;border-radius:2px"></div><div class="b" style="left:757.55px;top:177.3px;width:2.4px;height:2.4px;background:#222;border-radius:2px"></div><div class="b" style="left:763.05px;top:177.3px;width:2.4px;height:2.4px;background:#222;border-radius:2px"></div><svg class="b" style="left:853px;top:172px" width="16" height="12" viewBox="0 0 16 12"><rect x=".6" y=".6" width="14.8" height="10.8" rx="2.2" fill="none" stroke="#444" stroke-width="1"/><path d="M9.6 .6h3.600a2.2 2.2 0 0 1 2.2 2.200v6.400a2.2 2.2 0 0 1-2.2 2.200H9.600z" fill="#e2f1fb" stroke="#1a80c7" stroke-width="1.1"/><path d="M11.3 4h2.400M11.3 6h2.400M11.3 8h2.4" stroke="#1a80c7" stroke-width=".9"/></svg><div class="t" style="left:878px;top:169.4px;transform:scaleX(0.937);transform-origin:0 0">詳細</div><div class="b" style="left:409px;top:201px;width:16.5px;height:848px;background:#f0f0f0"></div><div class="b" style="left:426px;top:201px;width:1px;height:848px;background:#ededed"></div><div class="b" style="left:416px;top:333px;width:2px;height:260px;background:#8b8b8b;border-radius:1px"></div><div class="b" style="left:213px;top:201px;width:196px;height:848px;overflow:hidden"><div class="b" style="left:-213px;top:-201px"><svg class="b" style="left:234.5px;top:211.5px" width="7" height="11" viewBox="0 0 7 11"><path d="M1.2 1L5.6 5.5 1.2 10" fill="none" stroke="#6a6a6a" stroke-width="1.3" stroke-linecap="round" stroke-linejoin="round"/></svg><svg class="b" style="left:255px;top:209px" width="16" height="16"><use href="#fd"/></svg><div class="t" style="left:276px;top:206.5px;letter-spacing:-0.09px">Kano Yukinori</div><svg class="b" style="left:234.5px;top:243.5px" width="7" height="11" viewBox="0 0 7 11"><path d="M1.2 1L5.6 5.5 1.2 10" fill="none" stroke="#6a6a6a" stroke-width="1.3" stroke-linecap="round" stroke-linejoin="round"/></svg><svg class="b" style="left:255px;top:241px" width="16" height="16" viewBox="0 0 16 16"><rect x="0" y="1.5" width="16" height="11" rx="1" fill="url(#gpc)"/><rect x="7" y="12.5" width="2" height="2" fill="#8e9aa5"/><rect x="4.5" y="14.3" width="7" height="1.2" rx=".6" fill="#9aa6b0"/></svg><div class="t" style="left:276px;top:238.5px;letter-spacing:-1.78px">PC</div><svg class="b" style="left:234.5px;top:275.5px" width="7" height="11" viewBox="0 0 7 11"><path d="M1.2 1L5.6 5.5 1.2 10" fill="none" stroke="#6a6a6a" stroke-width="1.3" stroke-linecap="round" stroke-linejoin="round"/></svg><svg class="b" style="left:255px;top:272px" width="16" height="16"><use href="#fd"/></svg><div class="b" style="left:255px;top:286.5px;width:16px;height:1.8px;background:#2f9a8f"></div><div class="t" style="left:276px;top:270.9px;transform:scaleX(0.731);transform-origin:0 0"><span class="k">ライブラリ</span></div><svg class="b" style="left:234.5px;top:307.5px" width="7" height="11" viewBox="0 0 7 11"><path d="M1.2 1L5.6 5.5 1.2 10" fill="none" stroke="#6a6a6a" stroke-width="1.3" stroke-linecap="round" stroke-linejoin="round"/></svg><svg class="b" style="left:255px;top:305px" width="16" height="16" viewBox="0 0 16 16"><circle cx="8" cy="8" r="7.3" fill="#d9d9d9" stroke="#bdbdbd" stroke-width=".6"/><path d="M8 8L2.5 3.5A7.3 7.3 0 0 1 8 .7z" fill="#efefef"/><path d="M8 8l5.5 4.5A7.3 7.3 0 0 1 8 15.3z" fill="#c9c9c9"/><circle cx="8" cy="8" r="2.2" fill="#f6f6f6" stroke="#b0b0b0" stroke-width=".6"/></svg><div class="t" style="left:276px;top:302.9px;transform:scaleX(0.915);transform-origin:0 0">BD-RE <span class="k">ドライブ</span> (D:) MrPC2:</div><svg class="b" style="left:234.5px;top:339.5px" width="7" height="11" viewBox="0 0 7 11"><path d="M1.2 1L5.6 5.5 1.2 10" fill="none" stroke="#6a6a6a" stroke-width="1.3" stroke-linecap="round" stroke-linejoin="round"/></svg><svg class="b" style="left:255px;top:337px" width="16" height="16" viewBox="0 0 16 16"><rect width="16" height="16" fill="#000"/><rect x="2.2" y="2.2" width="11.6" height="11.6" fill="#fff"/><circle cx="8" cy="8" r="3.6" fill="#000"/><path d="M6 10l4-4" stroke="#fff" stroke-width="1.3"/></svg><div class="t" style="left:276px;top:334.5px;letter-spacing:-0.13px">Launchkey Mini (F:)</div><svg class="b" style="left:234.5px;top:371.5px" width="7" height="11" viewBox="0 0 7 11"><path d="M1.2 1L5.6 5.5 1.2 10" fill="none" stroke="#6a6a6a" stroke-width="1.3" stroke-linecap="round" stroke-linejoin="round"/></svg><svg class="b" style="left:255px;top:369px" width="16" height="16" viewBox="0 0 16 16"><rect x="2" y="4" width="13.5" height="8.5" rx=".8" fill="url(#gpc)"/><rect x="7.6" y="12.5" width="2" height="1.8" fill="#8e9aa5"/><rect x="5" y="14.2" width="7.5" height="1.2" rx=".6" fill="#9aa6b0"/><circle cx="4" cy="4.2" r="3.6" fill="#6fb7e6"/><path d="M1 3.2c1.5-.8 4-.6 6 .6M2.2 1.5c.5 1.8.6 3.8.2 5.8" fill="none" stroke="#2c78b8" stroke-width=".7"/></svg><div class="t" style="left:276px;top:366.9px;transform:scaleX(0.731);transform-origin:0 0"><span class="k">ネットワーク</span></div><svg class="b" style="left:234.5px;top:403.5px" width="7" height="11" viewBox="0 0 7 11"><path d="M1.2 1L5.6 5.5 1.2 10" fill="none" stroke="#6a6a6a" stroke-width="1.3" stroke-linecap="round" stroke-linejoin="round"/></svg><svg class="b" style="left:255px;top:401px" width="16" height="16" viewBox="0 0 16 16"><rect x="0" y="1.5" width="16" height="13" rx="1" fill="#2d8fdb"/><rect x="1.2" y="2.7" width="13.6" height="9" fill="#bfe3fa"/><circle cx="5.2" cy="7.3" r="2.6" fill="#2d8fdb"/><path d="M5.2 7.3V4.7A2.6 2.6 0 0 1 7.8 7.3z" fill="#f5c33b"/><path d="M9.5 5h4M9.5 7.2h4M9.5 9.4h3" stroke="#2d6fb0" stroke-width="1"/><path d="M2 13.2h12" stroke="#cfeaff" stroke-width=".8"/></svg><div class="t" style="left:276px;top:398.9px;transform:scaleX(0.741);transform-origin:0 0"><span class="k">コントロール</span> <span class="k">パネル</span></div><svg class="b" style="left:255px;top:433px" width="16" height="16" viewBox="0 0 16 16"><path d="M3.2 2.8h9.6l-1 11.2a1 1 0 0 1-1 .9H5.2a1 1 0 0 1-1-.9z" fill="#eef6fb" stroke="#9fb4c2" stroke-width=".8"/><path d="M2.8 2.8h10.4" stroke="#8ea6b6" stroke-width="1"/><path d="M6 7.2l2-1.8 2 1.8M10.3 9.5L9.2 11.6H6.8L5.7 9.5" fill="none" stroke="#2a86d8" stroke-width="1.1" stroke-linejoin="round"/></svg><div class="t" style="left:276px;top:430.9px;transform:scaleX(0.821);transform-origin:0 0"><span class="k">ごみ</span>箱</div><svg class="b" style="left:234.5px;top:467.5px" width="7" height="11" viewBox="0 0 7 11"><path d="M1.2 1L5.6 5.5 1.2 10" fill="none" stroke="#6a6a6a" stroke-width="1.3" stroke-linecap="round" stroke-linejoin="round"/></svg><svg class="b" style="left:255px;top:465px" width="16" height="16"><use href="#fd"/></svg><div class="t" style="left:276px;top:462.5px;letter-spacing:0.29px">Audio</div><svg class="b" style="left:255px;top:497px" width="16" height="16"><use href="#fd"/></svg><div class="t" style="left:276px;top:494.5px;letter-spacing:-0.41px">Auto Saves</div><svg class="b" style="left:255px;top:529px" width="16" height="16"><use href="#fd"/></svg><div class="t" style="left:276px;top:526.5px;letter-spacing:0.17px">chatgpt-site</div><svg class="b" style="left:234.5px;top:563.5px" width="7" height="11" viewBox="0 0 7 11"><path d="M1.2 1L5.6 5.5 1.2 10" fill="none" stroke="#6a6a6a" stroke-width="1.3" stroke-linecap="round" stroke-linejoin="round"/></svg><svg class="b" style="left:255px;top:561px" width="16" height="16"><use href="#fd"/></svg><div class="t" style="left:276px;top:558.5px;letter-spacing:-0.31px">cubase</div><svg class="b" style="left:255px;top:593px" width="16" height="16"><use href="#fd"/></svg><div class="t" style="left:276px;top:590.5px;letter-spacing:-0.12px">Export</div><svg class="b" style="left:255px;top:625px" width="16" height="16"><use href="#fd"/></svg><div class="t" style="left:276px;top:622.5px;letter-spacing:-0.18px">Gemini</div><svg class="b" style="left:255px;top:657px" width="16" height="16"><use href="#fd"/></svg><div class="t" style="left:276px;top:654.5px;letter-spacing:-0.43px">Images</div><svg class="b" style="left:234.5px;top:691.5px" width="7" height="11" viewBox="0 0 7 11"><path d="M1.2 1L5.6 5.5 1.2 10" fill="none" stroke="#6a6a6a" stroke-width="1.3" stroke-linecap="round" stroke-linejoin="round"/></svg><svg class="b" style="left:255px;top:689px" width="16" height="16"><use href="#fd"/></svg><div class="t" style="left:276px;top:686.5px;letter-spacing:0.37px">jijii</div><svg class="b" style="left:234.5px;top:723.5px" width="7" height="11" viewBox="0 0 7 11"><path d="M1.2 1L5.6 5.5 1.2 10" fill="none" stroke="#6a6a6a" stroke-width="1.3" stroke-linecap="round" stroke-linejoin="round"/></svg><svg class="b" style="left:255px;top:721px" width="16" height="16"><use href="#fd"/></svg><div class="t" style="left:276px;top:718.5px;letter-spacing:0.07px">malib</div><svg class="b" style="left:234.5px;top:755.5px" width="7" height="11" viewBox="0 0 7 11"><path d="M1.2 1L5.6 5.5 1.2 10" fill="none" stroke="#6a6a6a" stroke-width="1.3" stroke-linecap="round" stroke-linejoin="round"/></svg><svg class="b" style="left:255px;top:753px" width="16" height="16"><use href="#fd"/></svg><div class="t" style="left:276px;top:750.5px;letter-spacing:0.05px">maniuta</div><svg class="b" style="left:234.5px;top:787.5px" width="7" height="11" viewBox="0 0 7 11"><path d="M1.2 1L5.6 5.5 1.2 10" fill="none" stroke="#6a6a6a" stroke-width="1.3" stroke-linecap="round" stroke-linejoin="round"/></svg><svg class="b" style="left:255px;top:785px" width="16" height="16"><use href="#fd"/></svg><div class="t" style="left:276px;top:782.5px;letter-spacing:-0.15px">midi_Telepathy</div><svg class="b" style="left:255px;top:817px" width="16" height="16"><use href="#fd"/></svg><div class="t" style="left:276px;top:814.5px;letter-spacing:0.33px">Mixdown</div><svg class="b" style="left:234.5px;top:851.5px" width="7" height="11" viewBox="0 0 7 11"><path d="M1.2 1L5.6 5.5 1.2 10" fill="none" stroke="#6a6a6a" stroke-width="1.3" stroke-linecap="round" stroke-linejoin="round"/></svg><svg class="b" style="left:255px;top:849px" width="16" height="16"><use href="#fd"/></svg><div class="t" style="left:276px;top:846.5px;letter-spacing:-0.82px">NKSC_PARAM</div><svg class="b" style="left:232.5px;top:886px" width="10" height="7" viewBox="0 0 10 7"><path d="M1 1.2L5 5.3 9 1.2" fill="none" stroke="#1b1b1b" stroke-width="1.5" stroke-linecap="round" stroke-linejoin="round"/></svg><svg class="b" style="left:255px;top:881px" width="16" height="16"><use href="#fd"/></svg><div class="t" style="left:276px;top:878.5px;letter-spacing:-0.42px">Telepathy_Inst_205BPM</div><svg class="b" style="left:242.5px;top:915.5px" width="7" height="11" viewBox="0 0 7 11"><path d="M1.2 1L5.6 5.5 1.2 10" fill="none" stroke="#6a6a6a" stroke-width="1.3" stroke-linecap="round" stroke-linejoin="round"/></svg><svg class="b" style="left:263px;top:913px" width="16" height="16"><use href="#fd"/></svg><div class="t" style="left:284px;top:910.5px;letter-spacing:-0.98px">__MACOSX</div><svg class="b" style="left:263px;top:945px" width="16" height="16"><use href="#fd"/></svg><div class="t" style="left:284px;top:942.5px;letter-spacing:-0.42px">Telepathy_Inst_205BPM</div><svg class="b" style="left:234.5px;top:979.5px" width="7" height="11" viewBox="0 0 7 11"><path d="M1.2 1L5.6 5.5 1.2 10" fill="none" stroke="#6a6a6a" stroke-width="1.3" stroke-linecap="round" stroke-linejoin="round"/></svg><svg class="b" style="left:255px;top:977px" width="16" height="16"><use href="#fd"/></svg><div class="t" style="left:276px;top:974.5px;letter-spacing:-0.42px">TimeTune</div><svg class="b" style="left:255px;top:1009px" width="16" height="16"><use href="#fd"/></svg><div class="t" style="left:276px;top:1006.5px;letter-spacing:-0.32px">Track Pictures</div><svg class="b" style="left:234.5px;top:1043.5px" width="7" height="11" viewBox="0 0 7 11"><path d="M1.2 1L5.6 5.5 1.2 10" fill="none" stroke="#6a6a6a" stroke-width="1.3" stroke-linecap="round" stroke-linejoin="round"/></svg><svg class="b" style="left:255px;top:1041px" width="16" height="16"><use href="#fd"/></svg><div class="t" style="left:276px;top:1038.5px;letter-spacing:0.09px">yuto</div></div></div><svg class="b" style="left:453px;top:222px" width="84" height="66" viewBox="0 0 84 66"><path d="M0 5a5 5 0 0 1 5-5h21.5c2.6 0 4.2 1 5.6 3l2.4 3.400c1 1.4 2 2.1 4 2.100H79a5 5 0 0 1 5 5V46H0z" fill="url(#gt)"/><path d="M0 16a3.5 3.5 0 0 1 3.5-3.500h23.500c2.5 0 3.8-.7 5.2-1.900l1.5-1.300c1.2-1 2.5-1.3 4-1.300H80a4 4 0 0 1 4 4V62a4 4 0 0 1-4 4H4a4 4 0 0 1-4-4z" fill="url(#gf)"/><path d="M.5 62a3.5 3.5 0 0 0 3.5 3.500h76a3.5 3.5 0 0 0 3.5-3.5" fill="none" stroke="#e3a826" stroke-width="1" opacity=".7"/></svg><div class="t" style="left:196px;width:600px;text-align:center;top:302.9px;transform:scaleX(0.708);transform-origin:50% 0"><span><span class="k">キャプチャ</span></span></div><svg class="b" style="left:574px;top:222px" width="84" height="66" viewBox="0 0 84 66"><path d="M0 5a5 5 0 0 1 5-5h21.5c2.6 0 4.2 1 5.6 3l2.4 3.400c1 1.4 2 2.1 4 2.100H79a5 5 0 0 1 5 5V46H0z" fill="url(#gt)"/><rect x="2" y="10.5" width="79.5" height="30" rx="1.5" fill="#24272c"/><rect x="14" y="13" width="55" height="1" fill="#85898f"/><rect x="25" y="22" width="49" height="3.8" fill="#8b8e94"/><rect x="2.5" y="26.5" width="10" height="2.4" fill="#a0a3a9"/><rect x="14" y="25.5" width="12" height="2.4" fill="#6f7379"/><rect x="78.5" y="25" width="2.5" height="8" fill="#6f7379"/><path d="M0 41.500a3 3 0 0 1 3-3h25c2.5 0 3.8-.6 5.2-1.800l2-1.700c1.2-1 2.5-1.5 4-1.500H81a3 3 0 0 1 3 3V62a4 4 0 0 1-4 4H4a4 4 0 0 1-4-4z" fill="url(#gf)"/><path d="M.5 62a3.5 3.5 0 0 0 3.5 3.500h76a3.5 3.5 0 0 0 3.5-3.5" fill="none" stroke="#e3a826" stroke-width="1" opacity=".7"/></svg><div class="t" style="left:316px;width:600px;text-align:center;top:302.9px;transform:scaleX(0.979);transform-origin:50% 0"><span>画面録画</span></div><div class="b" style="left:683px;top:207px;width:105px;height:131px;background:#cce4f7;border:1px solid #15181c;border-radius:2px"></div><svg class="b" style="left:688.5px;top:244.5px" width="92" height="60" viewBox="0 0 92 60"><rect width="92" height="60" rx="3" fill="#566170"/><rect x="9.5" y="1.5" width="73" height="57" fill="#26282d"/><rect x="2" y="5" width="5.5" height="4.6" rx=".8" fill="#fff"/><rect x="84.5" y="5" width="5.5" height="4.6" rx=".8" fill="#fff"/><rect x="2" y="14.1" width="5.5" height="4.6" rx=".8" fill="#fff"/><rect x="84.5" y="14.1" width="5.5" height="4.6" rx=".8" fill="#fff"/><rect x="2" y="23.2" width="5.5" height="4.6" rx=".8" fill="#fff"/><rect x="84.5" y="23.2" width="5.5" height="4.6" rx=".8" fill="#fff"/><rect x="2" y="32.3" width="5.5" height="4.6" rx=".8" fill="#fff"/><rect x="84.5" y="32.3" width="5.5" height="4.6" rx=".8" fill="#fff"/><rect x="2" y="41.4" width="5.5" height="4.6" rx=".8" fill="#fff"/><rect x="84.5" y="41.4" width="5.5" height="4.6" rx=".8" fill="#fff"/><rect x="2" y="50.5" width="5.5" height="4.6" rx=".8" fill="#fff"/><rect x="84.5" y="50.5" width="5.5" height="4.6" rx=".8" fill="#fff"/><rect x="19" y="4.5" width="56" height="1.2" fill="#9a9da3" opacity=".8"/><rect x="30" y="14" width="47" height="3.8" fill="#8b8e94"/><rect x="26" y="16.5" width="52" height="2.2" fill="#7a7d83"/><rect x="10.5" y="18.5" width="7" height="2.4" fill="#9a9da3"/><rect x="18.5" y="18" width="12" height="2.4" fill="#6f7379"/><rect x="10" y="31.5" width="72" height="2.5" fill="#15161a"/><rect x="17" y="32" width="10" height="1.3" fill="#a8abb0"/><rect x="51" y="32" width="4" height="1.3" fill="#a8abb0"/><rect x="10" y="36" width="72" height="17.5" fill="#34363b"/><rect x="10.5" y="38" width="19" height="15" fill="#4a2a30" opacity=".85"/><rect x="11" y="54" width="70" height="3.2" fill="#e6e9ee"/></svg><div class="t" style="left:435px;width:600px;text-align:center;top:303.7px;letter-spacing:-0.39px"><span>2025-08-15</span></div><div class="t" style="left:435px;width:600px;text-align:center;top:318.7px;letter-spacing:-0.17px"><span>13-11-51.mkv</span></div><div class="b" style="left:213px;top:1049px;width:710px;height:31px;background:#fff"></div><div class="t" style="left:227.5px;top:1051.4px;color:#222;transform:scaleX(0.894);transform-origin:0 0">3 個<span class="k">の</span>項目</div><div class="t" style="left:303.75px;top:1051.9px;color:#222;transform:scaleX(0.944);transform-origin:0 0">1 個<span class="k">の</span>項目<span class="k">を</span>選択  35.1 MB</div><svg class="b" style="left:880px;top:1055.5px" width="10" height="8" viewBox="0 0 10 8"><path d="M0 .6h10M0 3.600h10M0 6.600h10" stroke="#333" stroke-width="1"/></svg><div class="b" style="left:897px;top:1049px;width:22px;height:22px;background:#e0f0f4;border:1px solid #1e7f95"></div><div class="b" style="left:903px;top:1056px;width:11px;height:12px;background:#fff;border:1.200px solid #333"></div></div></div><div class="b" style="left:0px;top:1064px;width:1920px;height:16px;background:#e1e2e6;border-top:1px solid #ececf0"></div><svg class="b" style="left:20px;top:1070px" width="20" height="12" viewBox="0 0 20 12"><ellipse cx="8" cy="9" rx="8" ry="5" fill="#7fb2e8"/></svg><div class="b" style="left:29px;top:1068.5px;width:17px;height:17px;background:#cf3a2a;border-radius:9px"></div><div class="t" style="left:-262.5px;width:600px;text-align:center;top:1069px;font-size:11px;color:#fff;font-weight:700"><span>8</span></div><div class="t" style="left:50px;top:1071.5px;color:#222;letter-spacing:-0.52px">34°C</div><div class="b" style="left:573px;top:1077px;width:10.5px;height:4px;background:#2f9be8"></div><div class="b" style="left:585px;top:1077px;width:10.5px;height:4px;background:#1f8be0"></div><div class="b" style="left:612px;top:1071px;width:214px;height:32px;background:#f3f3f6;border-radius:16px;border:1px solid #e9e9ee"></div><div class="b" style="left:847px;top:1077px;width:18px;height:4px;background:#fbfbfd;border-radius:2px 2px 0 0"></div><div class="b" style="left:887px;top:1076px;width:16px;height:5px;background:#2a7fd6;border-radius:5px 5px 0 0"></div><div class="b" style="left:921px;top:1068px;width:34px;height:14px;background:#eef0f3;border-radius:4px;border:1px solid #f6f6f8"></div><div class="b" style="left:929px;top:1077px;width:9px;height:4px;background:#e8a20c;border-radius:2px 2px 0 0"></div><div class="b" style="left:937px;top:1078.5px;width:13px;height:3px;background:#f7c64a"></div><div class="b" style="left:976px;top:1076px;width:18px;height:18px;background:#e34133;border-radius:9px"></div><svg class="b" style="left:1021px;top:1075px" width="16" height="6" viewBox="0 0 16 6"><path d="M0 6L8 .5 16 6z" fill="#1f6fc8"/></svg><div class="b" style="left:1066px;top:1077px;width:13px;height:4px;background:#f3f8fc;border:1.500px solid #35b5e8;border-bottom:none"></div><div class="b" style="left:1107px;top:1076px;width:20px;height:20px;background:#2fc3c9;border-radius:10px"></div><div class="b" style="left:1152px;top:1076.5px;width:16px;height:16px;background:#5a5fd6;border-radius:8px"></div><div class="b" style="left:1165.5px;top:1069px;width:10px;height:10px;background:#e5484d;border-radius:5px"></div><div class="b" style="left:1169px;top:1073px;width:3px;height:6px;background:#fff;border-radius:1.500px"></div><div class="b" style="left:1196px;top:1076px;width:18px;height:18px;background:#fdfdfd;border-radius:9px"></div><div class="b" style="left:1237px;top:1076px;width:24px;height:6px;background:#1b7a9e;border-radius:1px"></div><div class="b" style="left:1281px;top:1076px;width:14px;height:5px;background:#fafafa;border-radius:2px"></div><div class="b" style="left:1283px;top:1076.5px;width:2.5px;height:4px;background:#d4521b"></div><div class="b" style="left:1287px;top:1076.5px;width:2.5px;height:4px;background:#d4521b"></div><div class="b" style="left:1291px;top:1076.5px;width:2px;height:4px;background:#d4521b"></div><div class="b" style="left:1329px;top:1077px;width:16px;height:16px;background:#1e1e22;border-radius:8px"></div><div class="t" style="left:1852px;top:1071.5px;color:#222;letter-spacing:-1.34px">13:13</div></div>
</body></html>
